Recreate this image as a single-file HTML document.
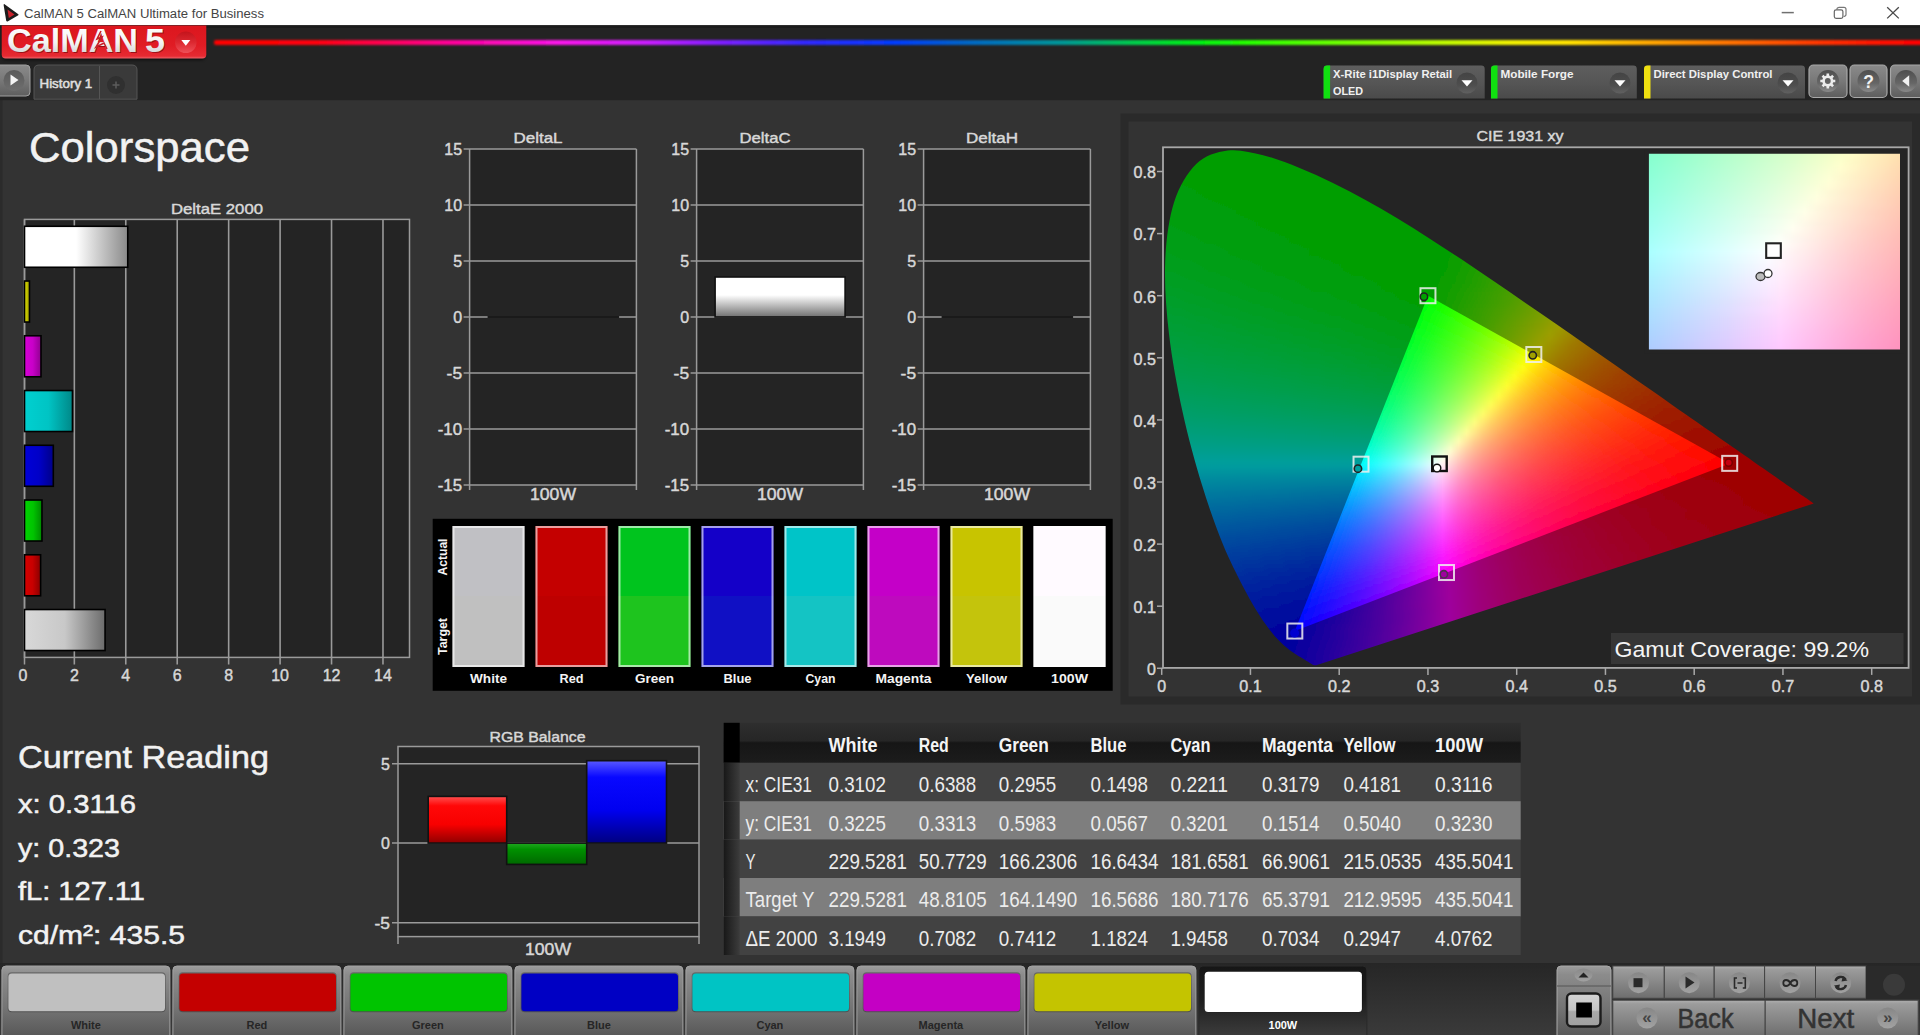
<!DOCTYPE html>
<html lang="en"><head><meta charset="utf-8"><title>CalMAN 5 CalMAN Ultimate for Business</title>
<style>html,body{margin:0;padding:0;background:#333;overflow:hidden}svg{display:block}text{font-family:"Liberation Sans",sans-serif}</style>
</head><body>
<svg width="1920" height="1035" viewBox="0 0 1920 1035">
<defs><linearGradient id="rainbow" x1="0" y1="0" x2="1" y2="0"><stop offset="0" stop-color="#ff0000"/><stop offset="0.057" stop-color="#ff000a"/><stop offset="0.097" stop-color="#ff0050"/><stop offset="0.136" stop-color="#ff0096"/><stop offset="0.202" stop-color="#fa14eb"/><stop offset="0.254" stop-color="#c81eff"/><stop offset="0.294" stop-color="#821eff"/><stop offset="0.346" stop-color="#3228ff"/><stop offset="0.399" stop-color="#003cff"/><stop offset="0.438" stop-color="#0064c8"/><stop offset="0.496" stop-color="#009696"/><stop offset="0.535" stop-color="#00c850"/><stop offset="0.574" stop-color="#00f014"/><stop offset="0.606" stop-color="#28ff00"/><stop offset="0.666" stop-color="#78ff00"/><stop offset="0.719" stop-color="#befa00"/><stop offset="0.758" stop-color="#f0f000"/><stop offset="0.792" stop-color="#ffe100"/><stop offset="0.837" stop-color="#ffaa00"/><stop offset="0.89" stop-color="#ff6e00"/><stop offset="0.942" stop-color="#ff3200"/><stop offset="0.982" stop-color="#ff0a00"/><stop offset="1" stop-color="#ff0000"/></linearGradient>
<filter id="soft" x="-5%" y="-200%" width="110%" height="500%"><feGaussianBlur stdDeviation="0.9"/></filter>
<linearGradient id="logo" x1="0" y1="0" x2="0" y2="1"><stop offset="0" stop-color="#dc161e"/><stop offset="0.6" stop-color="#e01c24"/><stop offset="0.93" stop-color="#e62a32"/><stop offset="1" stop-color="#f06068"/></linearGradient>
<filter id="sh" x="-10%" y="-10%" width="120%" height="140%"><feGaussianBlur stdDeviation="1.5"/></filter>
<linearGradient id="logotxt" x1="0" y1="0" x2="0" y2="1"><stop offset="0" stop-color="#ffffff"/><stop offset="0.55" stop-color="#f4f4f4"/><stop offset="1" stop-color="#c8c8c8"/></linearGradient>
<linearGradient id="ddc" x1="0" y1="0" x2="0" y2="1"><stop offset="0" stop-color="#c4141c"/><stop offset="0.5" stop-color="#dc2830"/><stop offset="1" stop-color="#f05058"/></linearGradient>
<linearGradient id="btn" x1="0" y1="0" x2="0" y2="1"><stop offset="0" stop-color="#8a8a8a"/><stop offset="0.5" stop-color="#787878"/><stop offset="1" stop-color="#5e5e5e"/></linearGradient>
<linearGradient id="btnd" x1="0" y1="0" x2="0" y2="1"><stop offset="0" stop-color="#5a5a5a"/><stop offset="1" stop-color="#6e6e6e"/></linearGradient>
<linearGradient id="embc" x1="0" y1="0" x2="0" y2="1"><stop offset="0" stop-color="#4e4e4e"/><stop offset="0.6" stop-color="#666"/><stop offset="1" stop-color="#8a8a8a"/></linearGradient>
<linearGradient id="embd" x1="0" y1="0" x2="0" y2="1"><stop offset="0" stop-color="#3e3e3e"/><stop offset="0.6" stop-color="#4c4c4c"/><stop offset="1" stop-color="#666"/></linearGradient>
<linearGradient id="dev" x1="0" y1="0" x2="0" y2="1"><stop offset="0" stop-color="#5e5e5e"/><stop offset="0.5" stop-color="#565656"/><stop offset="1" stop-color="#4a4a4a"/></linearGradient>
<linearGradient id="b_w100" x1="0" y1="0" x2="1" y2="0"><stop offset="0" stop-color="#fff"/><stop offset="0.5" stop-color="#fff"/><stop offset="1" stop-color="#8a8a8a"/></linearGradient>
<linearGradient id="b_yel" x1="0" y1="0" x2="1" y2="0"><stop offset="0" stop-color="#e0e000"/><stop offset="1" stop-color="#a0a000"/></linearGradient>
<linearGradient id="b_mag" x1="0" y1="0" x2="1" y2="0"><stop offset="0" stop-color="#d800d8"/><stop offset="0.5" stop-color="#c800c8"/><stop offset="1" stop-color="#900090"/></linearGradient>
<linearGradient id="b_cya" x1="0" y1="0" x2="1" y2="0"><stop offset="0" stop-color="#00d0d0"/><stop offset="0.5" stop-color="#00c4c4"/><stop offset="1" stop-color="#008888"/></linearGradient>
<linearGradient id="b_blu" x1="0" y1="0" x2="1" y2="0"><stop offset="0" stop-color="#0000d8"/><stop offset="0.5" stop-color="#0000c8"/><stop offset="1" stop-color="#000088"/></linearGradient>
<linearGradient id="b_grn" x1="0" y1="0" x2="1" y2="0"><stop offset="0" stop-color="#00d400"/><stop offset="0.5" stop-color="#00c400"/><stop offset="1" stop-color="#008800"/></linearGradient>
<linearGradient id="b_red" x1="0" y1="0" x2="1" y2="0"><stop offset="0" stop-color="#d80000"/><stop offset="0.5" stop-color="#c80000"/><stop offset="1" stop-color="#880000"/></linearGradient>
<linearGradient id="b_wht" x1="0" y1="0" x2="1" y2="0"><stop offset="0" stop-color="#d8d8d8"/><stop offset="0.5" stop-color="#c8c8c8"/><stop offset="1" stop-color="#6c6c6c"/></linearGradient>
<linearGradient id="dcbar" x1="0" y1="0" x2="0" y2="1"><stop offset="0" stop-color="#fff"/><stop offset="0.45" stop-color="#fff"/><stop offset="1" stop-color="#707070"/></linearGradient>
<clipPath id="cl_locus"><path d="M1316.2 665.2C1316.2 665.2 1316.1 665.2 1315.9 665.3C1315.8 665.3 1315.7 665.3 1315.5 665.3C1315.3 665.3 1315.2 665.4 1314.9 665.3C1314.6 665.3 1314.2 665.2 1313.8 665.1C1313.5 665.0 1313.2 664.9 1312.8 664.7C1312.5 664.5 1312.1 664.3 1311.6 664.0C1311.1 663.7 1310.5 663.4 1309.8 663.0C1309.2 662.5 1308.5 662.1 1307.6 661.5C1306.7 661.0 1305.8 660.4 1304.7 659.7C1303.5 659.0 1302.2 658.2 1300.7 657.3C1299.2 656.4 1297.6 655.4 1295.7 654.2C1293.8 653.0 1291.8 651.6 1289.5 649.9C1287.2 648.1 1284.9 646.4 1282.0 643.5C1279.0 640.6 1275.7 637.3 1271.8 632.4C1268.0 627.6 1263.8 622.1 1259.0 614.4C1254.1 606.6 1248.8 597.7 1242.7 585.9C1236.7 574.1 1229.5 560.5 1222.7 543.7C1215.9 526.9 1208.7 507.0 1202.0 485.1C1195.3 463.2 1188.1 437.2 1182.6 412.0C1177.1 386.8 1171.9 359.0 1169.0 334.0C1166.1 308.9 1164.3 283.6 1165.2 261.7C1166.0 239.7 1168.9 218.7 1174.0 202.4C1179.2 186.2 1187.3 172.7 1196.2 164.0C1205.2 155.4 1216.5 152.0 1227.6 150.5C1238.8 149.0 1251.2 152.3 1263.1 155.2C1274.9 158.1 1287.4 163.2 1299.0 167.8C1310.6 172.5 1321.8 177.6 1332.9 182.9C1344.0 188.3 1354.7 193.9 1365.5 199.9C1376.3 205.8 1386.9 212.1 1397.6 218.5C1408.2 224.9 1418.8 231.6 1429.4 238.4C1439.9 245.2 1450.5 252.1 1461.1 259.1C1471.6 266.1 1482.3 273.3 1492.8 280.5C1503.4 287.7 1513.9 294.9 1524.4 302.2C1534.9 309.4 1545.5 316.6 1555.8 323.8C1566.2 331.0 1576.5 338.2 1586.6 345.3C1596.8 352.3 1606.8 359.3 1616.5 366.1C1626.3 372.9 1635.9 379.7 1645.2 386.1C1654.5 392.6 1663.6 398.9 1672.2 404.9C1680.8 410.9 1689.1 416.7 1696.8 422.1C1704.4 427.4 1711.5 432.3 1718.2 437.0C1724.9 441.6 1731.2 446.1 1737.0 450.1C1742.7 454.1 1747.9 457.6 1752.6 460.9C1757.3 464.2 1761.5 467.1 1765.3 469.8C1769.1 472.4 1772.4 474.7 1775.4 476.8C1778.4 479.0 1781.1 480.7 1783.5 482.4C1785.9 484.1 1788.0 485.6 1790.0 487.0C1791.9 488.4 1793.7 489.6 1795.4 490.8C1797.0 491.9 1798.5 492.9 1799.8 493.9C1801.1 494.8 1802.3 495.6 1803.4 496.3C1804.4 497.0 1805.2 497.6 1806.0 498.1C1806.8 498.7 1807.5 499.2 1808.1 499.6C1808.7 500.0 1808.6 500.0 1809.6 500.6C1810.5 501.3 1813.1 503.1 1813.7 503.5Z"/></clipPath>
<clipPath id="cl_tri"><path d="M1729.7 463.4 L1428.0 295.7 L1294.8 631.0Z"/></clipPath>
<linearGradient id="zd0" gradientUnits="userSpaceOnUse" x1="1160" x2="1820" y1="0" y2="0"><stop offset="0.000" stop-color="#009e00"/><stop offset="0.500" stop-color="#019e00"/><stop offset="0.667" stop-color="#439e00"/><stop offset="0.818" stop-color="#8f9e00"/><stop offset="0.848" stop-color="#9e9c00"/><stop offset="0.924" stop-color="#9e7900"/><stop offset="1.000" stop-color="#9e6000"/></linearGradient><linearGradient id="zd1" gradientUnits="userSpaceOnUse" x1="1160" x2="1820" y1="0" y2="0"><stop offset="0.000" stop-color="#009e00"/><stop offset="0.500" stop-color="#019e00"/><stop offset="0.667" stop-color="#459e00"/><stop offset="0.803" stop-color="#899e00"/><stop offset="0.833" stop-color="#9a9e00"/><stop offset="0.864" stop-color="#9e9100"/><stop offset="0.939" stop-color="#9e7100"/><stop offset="1.000" stop-color="#9e5e00"/></linearGradient><linearGradient id="zd2" gradientUnits="userSpaceOnUse" x1="1160" x2="1820" y1="0" y2="0"><stop offset="0.000" stop-color="#009e01"/><stop offset="0.500" stop-color="#029e00"/><stop offset="0.667" stop-color="#479e00"/><stop offset="0.803" stop-color="#8c9e00"/><stop offset="0.833" stop-color="#9e9e00"/><stop offset="0.924" stop-color="#9e7400"/><stop offset="1.000" stop-color="#9e5c00"/></linearGradient><linearGradient id="zd3" gradientUnits="userSpaceOnUse" x1="1160" x2="1820" y1="0" y2="0"><stop offset="0.000" stop-color="#009e01"/><stop offset="0.485" stop-color="#009e00"/><stop offset="0.530" stop-color="#0f9e00"/><stop offset="0.682" stop-color="#509e00"/><stop offset="0.833" stop-color="#9e9c00"/><stop offset="0.894" stop-color="#9e7e00"/><stop offset="1.000" stop-color="#9e5b00"/></linearGradient><linearGradient id="zd4" gradientUnits="userSpaceOnUse" x1="1160" x2="1820" y1="0" y2="0"><stop offset="0.000" stop-color="#009e02"/><stop offset="0.485" stop-color="#009e00"/><stop offset="0.636" stop-color="#3c9e00"/><stop offset="0.773" stop-color="#819e00"/><stop offset="0.818" stop-color="#9b9e00"/><stop offset="0.864" stop-color="#9e8900"/><stop offset="0.939" stop-color="#9e6b00"/><stop offset="1.000" stop-color="#9e5900"/></linearGradient><linearGradient id="zd5" gradientUnits="userSpaceOnUse" x1="1160" x2="1820" y1="0" y2="0"><stop offset="0.000" stop-color="#009e03"/><stop offset="0.136" stop-color="#009e00"/><stop offset="0.485" stop-color="#009e00"/><stop offset="0.636" stop-color="#3e9e00"/><stop offset="0.773" stop-color="#839e00"/><stop offset="0.818" stop-color="#9e9e00"/><stop offset="0.894" stop-color="#9e7900"/><stop offset="1.000" stop-color="#9e5700"/></linearGradient><linearGradient id="zd6" gradientUnits="userSpaceOnUse" x1="1160" x2="1820" y1="0" y2="0"><stop offset="0.000" stop-color="#009e04"/><stop offset="0.121" stop-color="#009e00"/><stop offset="0.485" stop-color="#009e00"/><stop offset="0.636" stop-color="#409e00"/><stop offset="0.758" stop-color="#7e9e00"/><stop offset="0.803" stop-color="#989e00"/><stop offset="0.818" stop-color="#9e9b00"/><stop offset="0.909" stop-color="#9e7100"/><stop offset="1.000" stop-color="#9e5500"/></linearGradient><linearGradient id="zd7" gradientUnits="userSpaceOnUse" x1="1160" x2="1820" y1="0" y2="0"><stop offset="0.000" stop-color="#009e05"/><stop offset="0.091" stop-color="#009e00"/><stop offset="0.485" stop-color="#019e00"/><stop offset="0.636" stop-color="#429e00"/><stop offset="0.758" stop-color="#809e00"/><stop offset="0.803" stop-color="#9b9e00"/><stop offset="0.848" stop-color="#9e8800"/><stop offset="0.924" stop-color="#9e6900"/><stop offset="1.000" stop-color="#9e5400"/></linearGradient><linearGradient id="zd8" gradientUnits="userSpaceOnUse" x1="1160" x2="1820" y1="0" y2="0"><stop offset="0.000" stop-color="#009e06"/><stop offset="0.106" stop-color="#009e00"/><stop offset="0.485" stop-color="#029e00"/><stop offset="0.636" stop-color="#439e00"/><stop offset="0.773" stop-color="#8c9e00"/><stop offset="0.803" stop-color="#9e9e00"/><stop offset="0.864" stop-color="#9e7e00"/><stop offset="0.955" stop-color="#9e5e00"/><stop offset="1.000" stop-color="#9e5200"/></linearGradient><linearGradient id="zd9" gradientUnits="userSpaceOnUse" x1="1160" x2="1820" y1="0" y2="0"><stop offset="0.000" stop-color="#009e07"/><stop offset="0.121" stop-color="#009e00"/><stop offset="0.470" stop-color="#009e00"/><stop offset="0.515" stop-color="#0f9e00"/><stop offset="0.682" stop-color="#5c9e00"/><stop offset="0.788" stop-color="#989e00"/><stop offset="0.803" stop-color="#9e9b00"/><stop offset="0.864" stop-color="#9e7c00"/><stop offset="0.955" stop-color="#9e5c00"/><stop offset="1.000" stop-color="#9e5000"/></linearGradient><linearGradient id="zd10" gradientUnits="userSpaceOnUse" x1="1160" x2="1820" y1="0" y2="0"><stop offset="0.000" stop-color="#009e08"/><stop offset="0.121" stop-color="#009e00"/><stop offset="0.470" stop-color="#009e00"/><stop offset="0.561" stop-color="#249e00"/><stop offset="0.697" stop-color="#669e00"/><stop offset="0.788" stop-color="#9b9e00"/><stop offset="0.833" stop-color="#9e8700"/><stop offset="0.924" stop-color="#9e6300"/><stop offset="1.000" stop-color="#9e4f00"/></linearGradient><linearGradient id="zd11" gradientUnits="userSpaceOnUse" x1="1160" x2="1820" y1="0" y2="0"><stop offset="0.000" stop-color="#009e09"/><stop offset="0.136" stop-color="#009e00"/><stop offset="0.470" stop-color="#009e00"/><stop offset="0.606" stop-color="#3a9e00"/><stop offset="0.742" stop-color="#839e00"/><stop offset="0.788" stop-color="#9e9e00"/><stop offset="0.848" stop-color="#9e7d00"/><stop offset="0.939" stop-color="#9e5d00"/><stop offset="1.000" stop-color="#9e4d00"/></linearGradient><linearGradient id="zd12" gradientUnits="userSpaceOnUse" x1="1160" x2="1820" y1="0" y2="0"><stop offset="0.000" stop-color="#009e0a"/><stop offset="0.152" stop-color="#009e00"/><stop offset="0.470" stop-color="#009e00"/><stop offset="0.621" stop-color="#439e00"/><stop offset="0.742" stop-color="#869e00"/><stop offset="0.773" stop-color="#989e00"/><stop offset="0.788" stop-color="#9e9a00"/><stop offset="0.864" stop-color="#9e7400"/><stop offset="0.955" stop-color="#9e5700"/><stop offset="1.000" stop-color="#9e4c00"/></linearGradient><linearGradient id="zd13" gradientUnits="userSpaceOnUse" x1="1160" x2="1820" y1="0" y2="0"><stop offset="0.000" stop-color="#009e0a"/><stop offset="0.167" stop-color="#009e00"/><stop offset="0.470" stop-color="#019e00"/><stop offset="0.621" stop-color="#459e00"/><stop offset="0.742" stop-color="#899e00"/><stop offset="0.773" stop-color="#9c9e00"/><stop offset="0.864" stop-color="#9e7200"/><stop offset="0.955" stop-color="#9e5500"/><stop offset="1.000" stop-color="#9e4a00"/></linearGradient><linearGradient id="zd14" gradientUnits="userSpaceOnUse" x1="1160" x2="1820" y1="0" y2="0"><stop offset="0.000" stop-color="#009e0b"/><stop offset="0.167" stop-color="#009e00"/><stop offset="0.470" stop-color="#029e00"/><stop offset="0.636" stop-color="#4f9e00"/><stop offset="0.758" stop-color="#959e00"/><stop offset="0.773" stop-color="#9e9d00"/><stop offset="0.833" stop-color="#9e7c00"/><stop offset="0.924" stop-color="#9e5b00"/><stop offset="1.000" stop-color="#9e4800"/></linearGradient><linearGradient id="zd15" gradientUnits="userSpaceOnUse" x1="1160" x2="1820" y1="0" y2="0"><stop offset="0.000" stop-color="#009e0c"/><stop offset="0.182" stop-color="#009e00"/><stop offset="0.455" stop-color="#009e00"/><stop offset="0.485" stop-color="#099e00"/><stop offset="0.621" stop-color="#499e00"/><stop offset="0.742" stop-color="#8f9e00"/><stop offset="0.773" stop-color="#9e9a00"/><stop offset="0.833" stop-color="#9e7a00"/><stop offset="0.924" stop-color="#9e5900"/><stop offset="1.000" stop-color="#9e4700"/></linearGradient><linearGradient id="zd16" gradientUnits="userSpaceOnUse" x1="1160" x2="1820" y1="0" y2="0"><stop offset="0.000" stop-color="#009e0d"/><stop offset="0.197" stop-color="#009e00"/><stop offset="0.455" stop-color="#009e00"/><stop offset="0.515" stop-color="#189e00"/><stop offset="0.636" stop-color="#539e00"/><stop offset="0.758" stop-color="#9c9e00"/><stop offset="0.833" stop-color="#9e7700"/><stop offset="0.939" stop-color="#9e5300"/><stop offset="1.000" stop-color="#9e4500"/></linearGradient><linearGradient id="zd17" gradientUnits="userSpaceOnUse" x1="1160" x2="1820" y1="0" y2="0"><stop offset="0.000" stop-color="#009e0f"/><stop offset="0.197" stop-color="#009e00"/><stop offset="0.455" stop-color="#009e00"/><stop offset="0.561" stop-color="#2e9e00"/><stop offset="0.682" stop-color="#6f9e00"/><stop offset="0.758" stop-color="#9e9d00"/><stop offset="0.833" stop-color="#9e7500"/><stop offset="0.909" stop-color="#9e5a00"/><stop offset="1.000" stop-color="#9e4400"/></linearGradient><linearGradient id="zd18" gradientUnits="userSpaceOnUse" x1="1160" x2="1820" y1="0" y2="0"><stop offset="0.000" stop-color="#009e10"/><stop offset="0.197" stop-color="#009e00"/><stop offset="0.455" stop-color="#009e00"/><stop offset="0.591" stop-color="#3f9e00"/><stop offset="0.712" stop-color="#859e00"/><stop offset="0.742" stop-color="#999e00"/><stop offset="0.758" stop-color="#9e9900"/><stop offset="0.833" stop-color="#9e7200"/><stop offset="0.924" stop-color="#9e5400"/><stop offset="1.000" stop-color="#9e4200"/></linearGradient><linearGradient id="zd19" gradientUnits="userSpaceOnUse" x1="1160" x2="1820" y1="0" y2="0"><stop offset="0.000" stop-color="#009e11"/><stop offset="0.212" stop-color="#009e00"/><stop offset="0.455" stop-color="#019e00"/><stop offset="0.591" stop-color="#419e00"/><stop offset="0.727" stop-color="#929e00"/><stop offset="0.742" stop-color="#9c9e00"/><stop offset="0.818" stop-color="#9e7600"/><stop offset="0.909" stop-color="#9e5600"/><stop offset="1.000" stop-color="#9e4100"/></linearGradient><linearGradient id="zd20" gradientUnits="userSpaceOnUse" x1="1160" x2="1820" y1="0" y2="0"><stop offset="0.000" stop-color="#009e12"/><stop offset="0.227" stop-color="#009e00"/><stop offset="0.455" stop-color="#029e00"/><stop offset="0.591" stop-color="#439e00"/><stop offset="0.712" stop-color="#8b9e00"/><stop offset="0.742" stop-color="#9e9c00"/><stop offset="0.818" stop-color="#9e7300"/><stop offset="0.924" stop-color="#9e5000"/><stop offset="1.000" stop-color="#9e3f00"/></linearGradient><linearGradient id="zd21" gradientUnits="userSpaceOnUse" x1="1160" x2="1820" y1="0" y2="0"><stop offset="0.000" stop-color="#009e13"/><stop offset="0.227" stop-color="#009e00"/><stop offset="0.439" stop-color="#009e00"/><stop offset="0.470" stop-color="#0a9e00"/><stop offset="0.591" stop-color="#459e00"/><stop offset="0.697" stop-color="#859e00"/><stop offset="0.727" stop-color="#999e00"/><stop offset="0.742" stop-color="#9e9900"/><stop offset="0.818" stop-color="#9e7100"/><stop offset="0.924" stop-color="#9e4e00"/><stop offset="1.000" stop-color="#9e3e00"/></linearGradient><linearGradient id="zd22" gradientUnits="userSpaceOnUse" x1="1160" x2="1820" y1="0" y2="0"><stop offset="0.000" stop-color="#009e14"/><stop offset="0.242" stop-color="#009e00"/><stop offset="0.439" stop-color="#009e00"/><stop offset="0.485" stop-color="#129e00"/><stop offset="0.606" stop-color="#509e00"/><stop offset="0.727" stop-color="#9c9e00"/><stop offset="0.818" stop-color="#9e6e00"/><stop offset="0.924" stop-color="#9e4c00"/><stop offset="1.000" stop-color="#9e3c00"/></linearGradient><linearGradient id="zd23" gradientUnits="userSpaceOnUse" x1="1160" x2="1820" y1="0" y2="0"><stop offset="0.000" stop-color="#009e15"/><stop offset="0.258" stop-color="#009e00"/><stop offset="0.439" stop-color="#009e00"/><stop offset="0.545" stop-color="#319e00"/><stop offset="0.667" stop-color="#779e00"/><stop offset="0.727" stop-color="#9e9c00"/><stop offset="0.788" stop-color="#9e7900"/><stop offset="0.879" stop-color="#9e5700"/><stop offset="1.000" stop-color="#9e3b00"/></linearGradient><linearGradient id="zd24" gradientUnits="userSpaceOnUse" x1="1160" x2="1820" y1="0" y2="0"><stop offset="0.000" stop-color="#009e16"/><stop offset="0.273" stop-color="#009e00"/><stop offset="0.439" stop-color="#009e00"/><stop offset="0.545" stop-color="#339e00"/><stop offset="0.682" stop-color="#849e00"/><stop offset="0.712" stop-color="#999e00"/><stop offset="0.727" stop-color="#9e9800"/><stop offset="0.803" stop-color="#9e7000"/><stop offset="0.879" stop-color="#9e5500"/><stop offset="1.000" stop-color="#9e3900"/></linearGradient><linearGradient id="zd25" gradientUnits="userSpaceOnUse" x1="1160" x2="1820" y1="0" y2="0"><stop offset="0.000" stop-color="#009e17"/><stop offset="0.273" stop-color="#009e00"/><stop offset="0.439" stop-color="#019e00"/><stop offset="0.561" stop-color="#3d9e00"/><stop offset="0.682" stop-color="#879e00"/><stop offset="0.712" stop-color="#9d9e00"/><stop offset="0.773" stop-color="#9e7b00"/><stop offset="0.864" stop-color="#9e5700"/><stop offset="0.985" stop-color="#9e3b00"/><stop offset="1.000" stop-color="#9e3800"/></linearGradient><linearGradient id="zd26" gradientUnits="userSpaceOnUse" x1="1160" x2="1820" y1="0" y2="0"><stop offset="0.000" stop-color="#009e19"/><stop offset="0.288" stop-color="#009e00"/><stop offset="0.439" stop-color="#029e00"/><stop offset="0.561" stop-color="#3f9e00"/><stop offset="0.667" stop-color="#809e00"/><stop offset="0.712" stop-color="#9e9c00"/><stop offset="0.773" stop-color="#9e7800"/><stop offset="0.848" stop-color="#9e5a00"/><stop offset="0.955" stop-color="#9e3f00"/><stop offset="1.000" stop-color="#9e3600"/></linearGradient><linearGradient id="zd27" gradientUnits="userSpaceOnUse" x1="1160" x2="1820" y1="0" y2="0"><stop offset="0.000" stop-color="#009e1a"/><stop offset="0.303" stop-color="#009e00"/><stop offset="0.424" stop-color="#009e00"/><stop offset="0.455" stop-color="#0a9e00"/><stop offset="0.576" stop-color="#4a9e00"/><stop offset="0.682" stop-color="#8e9e00"/><stop offset="0.697" stop-color="#999e00"/><stop offset="0.712" stop-color="#9e9800"/><stop offset="0.773" stop-color="#9e7500"/><stop offset="0.864" stop-color="#9e5300"/><stop offset="0.970" stop-color="#9e3a00"/><stop offset="1.000" stop-color="#9e3500"/></linearGradient><linearGradient id="zd28" gradientUnits="userSpaceOnUse" x1="1160" x2="1820" y1="0" y2="0"><stop offset="0.000" stop-color="#009e1b"/><stop offset="0.273" stop-color="#009e02"/><stop offset="0.424" stop-color="#009e00"/><stop offset="0.455" stop-color="#0b9e00"/><stop offset="0.576" stop-color="#4c9e00"/><stop offset="0.682" stop-color="#929e00"/><stop offset="0.697" stop-color="#9d9e00"/><stop offset="0.758" stop-color="#9e7a00"/><stop offset="0.818" stop-color="#9e6000"/><stop offset="0.909" stop-color="#9e4500"/><stop offset="1.000" stop-color="#9e3400"/></linearGradient><linearGradient id="zd29" gradientUnits="userSpaceOnUse" x1="1160" x2="1820" y1="0" y2="0"><stop offset="0.000" stop-color="#009e1c"/><stop offset="0.318" stop-color="#009e00"/><stop offset="0.424" stop-color="#009e00"/><stop offset="0.485" stop-color="#1c9e00"/><stop offset="0.606" stop-color="#619e00"/><stop offset="0.682" stop-color="#969e00"/><stop offset="0.697" stop-color="#9e9b00"/><stop offset="0.758" stop-color="#9e7700"/><stop offset="0.833" stop-color="#9e5800"/><stop offset="0.955" stop-color="#9e3a00"/><stop offset="1.000" stop-color="#9e3200"/></linearGradient><linearGradient id="zd30" gradientUnits="userSpaceOnUse" x1="1160" x2="1820" y1="0" y2="0"><stop offset="0.000" stop-color="#009e1e"/><stop offset="0.333" stop-color="#009e00"/><stop offset="0.424" stop-color="#009e00"/><stop offset="0.515" stop-color="#2e9e00"/><stop offset="0.621" stop-color="#6e9e00"/><stop offset="0.682" stop-color="#9a9e00"/><stop offset="0.712" stop-color="#9e8d00"/><stop offset="0.773" stop-color="#9e6d00"/><stop offset="0.864" stop-color="#9e4d00"/><stop offset="1.000" stop-color="#9e3100"/></linearGradient><linearGradient id="zd31" gradientUnits="userSpaceOnUse" x1="1160" x2="1820" y1="0" y2="0"><stop offset="0.000" stop-color="#009e1f"/><stop offset="0.348" stop-color="#009e00"/><stop offset="0.424" stop-color="#009e00"/><stop offset="0.545" stop-color="#419e00"/><stop offset="0.652" stop-color="#879e00"/><stop offset="0.682" stop-color="#9e9e00"/><stop offset="0.742" stop-color="#9e7800"/><stop offset="0.833" stop-color="#9e5400"/><stop offset="0.939" stop-color="#9e3a00"/><stop offset="1.000" stop-color="#9e2f00"/></linearGradient><linearGradient id="zd32" gradientUnits="userSpaceOnUse" x1="1160" x2="1820" y1="0" y2="0"><stop offset="0.000" stop-color="#009e20"/><stop offset="0.303" stop-color="#009e04"/><stop offset="0.364" stop-color="#009e00"/><stop offset="0.424" stop-color="#019e00"/><stop offset="0.545" stop-color="#439e00"/><stop offset="0.652" stop-color="#8a9e00"/><stop offset="0.682" stop-color="#9e9b00"/><stop offset="0.742" stop-color="#9e7500"/><stop offset="0.818" stop-color="#9e5700"/><stop offset="0.924" stop-color="#9e3b00"/><stop offset="1.000" stop-color="#9e2e00"/></linearGradient><linearGradient id="zd33" gradientUnits="userSpaceOnUse" x1="1160" x2="1820" y1="0" y2="0"><stop offset="0.000" stop-color="#009e22"/><stop offset="0.303" stop-color="#009e05"/><stop offset="0.379" stop-color="#009e00"/><stop offset="0.424" stop-color="#039e00"/><stop offset="0.530" stop-color="#3c9e00"/><stop offset="0.636" stop-color="#839e00"/><stop offset="0.667" stop-color="#9a9e00"/><stop offset="0.697" stop-color="#9e8c00"/><stop offset="0.758" stop-color="#9e6b00"/><stop offset="0.864" stop-color="#9e4800"/><stop offset="1.000" stop-color="#9e2d00"/></linearGradient><linearGradient id="zd34" gradientUnits="userSpaceOnUse" x1="1160" x2="1820" y1="0" y2="0"><stop offset="0.000" stop-color="#009e23"/><stop offset="0.273" stop-color="#009e0a"/><stop offset="0.379" stop-color="#009e00"/><stop offset="0.409" stop-color="#009e00"/><stop offset="0.439" stop-color="#0c9e00"/><stop offset="0.545" stop-color="#489e00"/><stop offset="0.636" stop-color="#879e00"/><stop offset="0.667" stop-color="#9e9e00"/><stop offset="0.712" stop-color="#9e7f00"/><stop offset="0.773" stop-color="#9e6200"/><stop offset="0.864" stop-color="#9e4600"/><stop offset="1.000" stop-color="#9e2b00"/></linearGradient><linearGradient id="zd35" gradientUnits="userSpaceOnUse" x1="1160" x2="1820" y1="0" y2="0"><stop offset="0.000" stop-color="#009e25"/><stop offset="0.394" stop-color="#009e00"/><stop offset="0.409" stop-color="#009e00"/><stop offset="0.455" stop-color="#159e00"/><stop offset="0.576" stop-color="#5e9e00"/><stop offset="0.652" stop-color="#969e00"/><stop offset="0.667" stop-color="#9e9a00"/><stop offset="0.727" stop-color="#9e7400"/><stop offset="0.818" stop-color="#9e5000"/><stop offset="0.939" stop-color="#9e3400"/><stop offset="1.000" stop-color="#9e2a00"/></linearGradient><linearGradient id="zd36" gradientUnits="userSpaceOnUse" x1="1160" x2="1820" y1="0" y2="0"><stop offset="0.000" stop-color="#009e26"/><stop offset="0.318" stop-color="#009e08"/><stop offset="0.394" stop-color="#009e00"/><stop offset="0.409" stop-color="#009e00"/><stop offset="0.485" stop-color="#289e00"/><stop offset="0.576" stop-color="#619e00"/><stop offset="0.652" stop-color="#9a9e00"/><stop offset="0.682" stop-color="#9e8b00"/><stop offset="0.758" stop-color="#9e6300"/><stop offset="0.848" stop-color="#9e4600"/><stop offset="0.985" stop-color="#9e2b00"/><stop offset="1.000" stop-color="#9e2900"/></linearGradient><linearGradient id="zd37" gradientUnits="userSpaceOnUse" x1="1160" x2="1820" y1="0" y2="0"><stop offset="0.000" stop-color="#009e28"/><stop offset="0.333" stop-color="#009e07"/><stop offset="0.409" stop-color="#009e00"/><stop offset="0.515" stop-color="#3c9e00"/><stop offset="0.606" stop-color="#7b9e00"/><stop offset="0.652" stop-color="#9e9e00"/><stop offset="0.697" stop-color="#9e7e00"/><stop offset="0.773" stop-color="#9e5b00"/><stop offset="0.864" stop-color="#9e4000"/><stop offset="1.000" stop-color="#9e2700"/></linearGradient><linearGradient id="zd38" gradientUnits="userSpaceOnUse" x1="1160" x2="1820" y1="0" y2="0"><stop offset="0.000" stop-color="#009e29"/><stop offset="0.273" stop-color="#009e10"/><stop offset="0.409" stop-color="#019e00"/><stop offset="0.545" stop-color="#529e00"/><stop offset="0.636" stop-color="#969e00"/><stop offset="0.652" stop-color="#9e9900"/><stop offset="0.712" stop-color="#9e7200"/><stop offset="0.803" stop-color="#9e4e00"/><stop offset="0.924" stop-color="#9e3200"/><stop offset="1.000" stop-color="#9e2600"/></linearGradient><linearGradient id="zd39" gradientUnits="userSpaceOnUse" x1="1160" x2="1820" y1="0" y2="0"><stop offset="0.000" stop-color="#009e2b"/><stop offset="0.303" stop-color="#009e0e"/><stop offset="0.409" stop-color="#029e00"/><stop offset="0.515" stop-color="#419e00"/><stop offset="0.621" stop-color="#8e9e00"/><stop offset="0.636" stop-color="#9b9e00"/><stop offset="0.682" stop-color="#9e8000"/><stop offset="0.742" stop-color="#9e6200"/><stop offset="0.833" stop-color="#9e4400"/><stop offset="0.970" stop-color="#9e2900"/><stop offset="1.000" stop-color="#9e2500"/></linearGradient><linearGradient id="zd40" gradientUnits="userSpaceOnUse" x1="1160" x2="1820" y1="0" y2="0"><stop offset="0.000" stop-color="#009e2c"/><stop offset="0.303" stop-color="#009e10"/><stop offset="0.394" stop-color="#009e04"/><stop offset="0.424" stop-color="#0c9e00"/><stop offset="0.530" stop-color="#4d9e00"/><stop offset="0.636" stop-color="#9e9d00"/><stop offset="0.682" stop-color="#9e7d00"/><stop offset="0.742" stop-color="#9e5f00"/><stop offset="0.833" stop-color="#9e4200"/><stop offset="0.955" stop-color="#9e2a00"/><stop offset="1.000" stop-color="#9e2400"/></linearGradient><linearGradient id="zd41" gradientUnits="userSpaceOnUse" x1="1160" x2="1820" y1="0" y2="0"><stop offset="0.000" stop-color="#009e2e"/><stop offset="0.288" stop-color="#009e13"/><stop offset="0.394" stop-color="#009e06"/><stop offset="0.424" stop-color="#0e9e01"/><stop offset="0.515" stop-color="#469e00"/><stop offset="0.606" stop-color="#8a9e00"/><stop offset="0.621" stop-color="#969e00"/><stop offset="0.636" stop-color="#9e9900"/><stop offset="0.697" stop-color="#9e7100"/><stop offset="0.758" stop-color="#9e5700"/><stop offset="0.848" stop-color="#9e3c00"/><stop offset="1.000" stop-color="#9e2200"/></linearGradient><linearGradient id="zd42" gradientUnits="userSpaceOnUse" x1="1160" x2="1820" y1="0" y2="0"><stop offset="0.000" stop-color="#009e30"/><stop offset="0.303" stop-color="#009e13"/><stop offset="0.394" stop-color="#009e07"/><stop offset="0.439" stop-color="#189e01"/><stop offset="0.545" stop-color="#5e9e00"/><stop offset="0.621" stop-color="#9b9e00"/><stop offset="0.667" stop-color="#9e7f00"/><stop offset="0.727" stop-color="#9e6000"/><stop offset="0.818" stop-color="#9e4200"/><stop offset="0.955" stop-color="#9e2700"/><stop offset="1.000" stop-color="#9e2100"/></linearGradient><linearGradient id="zd43" gradientUnits="userSpaceOnUse" x1="1160" x2="1820" y1="0" y2="0"><stop offset="0.000" stop-color="#009e31"/><stop offset="0.303" stop-color="#009e15"/><stop offset="0.394" stop-color="#009e09"/><stop offset="0.470" stop-color="#2d9e00"/><stop offset="0.561" stop-color="#6d9e00"/><stop offset="0.621" stop-color="#9e9d00"/><stop offset="0.667" stop-color="#9e7b00"/><stop offset="0.727" stop-color="#9e5d00"/><stop offset="0.818" stop-color="#9e4000"/><stop offset="0.939" stop-color="#9e2800"/><stop offset="1.000" stop-color="#9e2000"/></linearGradient><linearGradient id="zd44" gradientUnits="userSpaceOnUse" x1="1160" x2="1820" y1="0" y2="0"><stop offset="0.000" stop-color="#009e33"/><stop offset="0.273" stop-color="#009e1a"/><stop offset="0.394" stop-color="#019e0b"/><stop offset="0.485" stop-color="#399e00"/><stop offset="0.576" stop-color="#7d9e00"/><stop offset="0.606" stop-color="#979e00"/><stop offset="0.621" stop-color="#9e9800"/><stop offset="0.667" stop-color="#9e7800"/><stop offset="0.742" stop-color="#9e5500"/><stop offset="0.833" stop-color="#9e3a00"/><stop offset="0.985" stop-color="#9e2000"/><stop offset="1.000" stop-color="#9e1f00"/></linearGradient><linearGradient id="zd45" gradientUnits="userSpaceOnUse" x1="1160" x2="1820" y1="0" y2="0"><stop offset="0.000" stop-color="#009e35"/><stop offset="0.318" stop-color="#009e17"/><stop offset="0.394" stop-color="#029e0d"/><stop offset="0.485" stop-color="#3b9e00"/><stop offset="0.576" stop-color="#819e00"/><stop offset="0.606" stop-color="#9b9e00"/><stop offset="0.652" stop-color="#9e7d00"/><stop offset="0.712" stop-color="#9e5e00"/><stop offset="0.803" stop-color="#9e4000"/><stop offset="0.939" stop-color="#9e2500"/><stop offset="1.000" stop-color="#9e1d00"/></linearGradient><linearGradient id="zd46" gradientUnits="userSpaceOnUse" x1="1160" x2="1820" y1="0" y2="0"><stop offset="0.000" stop-color="#009e37"/><stop offset="0.288" stop-color="#009e1c"/><stop offset="0.379" stop-color="#009e11"/><stop offset="0.394" stop-color="#049e0f"/><stop offset="0.485" stop-color="#3e9e01"/><stop offset="0.606" stop-color="#9e9c00"/><stop offset="0.652" stop-color="#9e7a00"/><stop offset="0.712" stop-color="#9e5b00"/><stop offset="0.803" stop-color="#9e3e00"/><stop offset="0.924" stop-color="#9e2600"/><stop offset="1.000" stop-color="#9e1c00"/></linearGradient><linearGradient id="zd47" gradientUnits="userSpaceOnUse" x1="1160" x2="1820" y1="0" y2="0"><stop offset="0.000" stop-color="#009e38"/><stop offset="0.273" stop-color="#009e20"/><stop offset="0.379" stop-color="#009e13"/><stop offset="0.409" stop-color="#0e9e0e"/><stop offset="0.500" stop-color="#4c9e00"/><stop offset="0.576" stop-color="#899e00"/><stop offset="0.591" stop-color="#979e00"/><stop offset="0.606" stop-color="#9e9700"/><stop offset="0.667" stop-color="#9e6d00"/><stop offset="0.742" stop-color="#9e4d00"/><stop offset="0.848" stop-color="#9e3200"/><stop offset="0.985" stop-color="#9e1d00"/><stop offset="1.000" stop-color="#9e1b00"/></linearGradient><linearGradient id="zd48" gradientUnits="userSpaceOnUse" x1="1160" x2="1820" y1="0" y2="0"><stop offset="0.000" stop-color="#009e3a"/><stop offset="0.273" stop-color="#009e22"/><stop offset="0.379" stop-color="#009e15"/><stop offset="0.439" stop-color="#239e0c"/><stop offset="0.530" stop-color="#669e00"/><stop offset="0.591" stop-color="#9c9e00"/><stop offset="0.652" stop-color="#9e7300"/><stop offset="0.727" stop-color="#9e5000"/><stop offset="0.848" stop-color="#9e3000"/><stop offset="1.000" stop-color="#9e1a00"/></linearGradient><linearGradient id="zd49" gradientUnits="userSpaceOnUse" x1="1160" x2="1820" y1="0" y2="0"><stop offset="0.000" stop-color="#009e3c"/><stop offset="0.273" stop-color="#009e24"/><stop offset="0.379" stop-color="#009e17"/><stop offset="0.455" stop-color="#309e0c"/><stop offset="0.530" stop-color="#6a9e00"/><stop offset="0.576" stop-color="#929e00"/><stop offset="0.591" stop-color="#9e9b00"/><stop offset="0.636" stop-color="#9e7800"/><stop offset="0.697" stop-color="#9e5900"/><stop offset="0.773" stop-color="#9e4000"/><stop offset="0.894" stop-color="#9e2600"/><stop offset="1.000" stop-color="#9e1900"/></linearGradient><linearGradient id="zd50" gradientUnits="userSpaceOnUse" x1="1160" x2="1820" y1="0" y2="0"><stop offset="0.000" stop-color="#009e3e"/><stop offset="0.273" stop-color="#009e26"/><stop offset="0.379" stop-color="#009e19"/><stop offset="0.470" stop-color="#3e9e0b"/><stop offset="0.530" stop-color="#6e9e00"/><stop offset="0.576" stop-color="#979e00"/><stop offset="0.591" stop-color="#9e9700"/><stop offset="0.636" stop-color="#9e7400"/><stop offset="0.712" stop-color="#9e5000"/><stop offset="0.803" stop-color="#9e3600"/><stop offset="0.924" stop-color="#9e2100"/><stop offset="1.000" stop-color="#9e1700"/></linearGradient><linearGradient id="zd51" gradientUnits="userSpaceOnUse" x1="1160" x2="1820" y1="0" y2="0"><stop offset="0.000" stop-color="#009e40"/><stop offset="0.288" stop-color="#009e27"/><stop offset="0.379" stop-color="#029e1b"/><stop offset="0.470" stop-color="#409e0d"/><stop offset="0.545" stop-color="#7f9e00"/><stop offset="0.576" stop-color="#9c9e00"/><stop offset="0.621" stop-color="#9e7a00"/><stop offset="0.682" stop-color="#9e5a00"/><stop offset="0.773" stop-color="#9e3b00"/><stop offset="0.909" stop-color="#9e2100"/><stop offset="1.000" stop-color="#9e1600"/></linearGradient><linearGradient id="zd52" gradientUnits="userSpaceOnUse" x1="1160" x2="1820" y1="0" y2="0"><stop offset="0.000" stop-color="#009e42"/><stop offset="0.288" stop-color="#009e29"/><stop offset="0.364" stop-color="#009e20"/><stop offset="0.379" stop-color="#039e1e"/><stop offset="0.470" stop-color="#439e10"/><stop offset="0.561" stop-color="#929e00"/><stop offset="0.576" stop-color="#9e9b00"/><stop offset="0.621" stop-color="#9e7700"/><stop offset="0.682" stop-color="#9e5700"/><stop offset="0.773" stop-color="#9e3900"/><stop offset="0.894" stop-color="#9e2200"/><stop offset="1.000" stop-color="#9e1500"/></linearGradient><linearGradient id="zd53" gradientUnits="userSpaceOnUse" x1="1160" x2="1820" y1="0" y2="0"><stop offset="0.000" stop-color="#009e44"/><stop offset="0.273" stop-color="#009e2d"/><stop offset="0.364" stop-color="#009e22"/><stop offset="0.379" stop-color="#059e20"/><stop offset="0.485" stop-color="#529e10"/><stop offset="0.561" stop-color="#979e01"/><stop offset="0.576" stop-color="#9e9600"/><stop offset="0.606" stop-color="#9e7d00"/><stop offset="0.667" stop-color="#9e5b00"/><stop offset="0.742" stop-color="#9e3f00"/><stop offset="0.864" stop-color="#9e2500"/><stop offset="1.000" stop-color="#9e1400"/></linearGradient><linearGradient id="zd54" gradientUnits="userSpaceOnUse" x1="1160" x2="1820" y1="0" y2="0"><stop offset="0.000" stop-color="#009e47"/><stop offset="0.303" stop-color="#009e2c"/><stop offset="0.364" stop-color="#009e24"/><stop offset="0.409" stop-color="#1b9e1e"/><stop offset="0.500" stop-color="#639e0f"/><stop offset="0.561" stop-color="#9d9e03"/><stop offset="0.606" stop-color="#9e7900"/><stop offset="0.652" stop-color="#9e5f00"/><stop offset="0.712" stop-color="#9e4600"/><stop offset="0.803" stop-color="#9e2f00"/><stop offset="0.939" stop-color="#9e1900"/><stop offset="1.000" stop-color="#9e1300"/></linearGradient><linearGradient id="zd55" gradientUnits="userSpaceOnUse" x1="1160" x2="1820" y1="0" y2="0"><stop offset="0.000" stop-color="#009e49"/><stop offset="0.288" stop-color="#009e30"/><stop offset="0.364" stop-color="#009e27"/><stop offset="0.409" stop-color="#1d9e21"/><stop offset="0.500" stop-color="#679e12"/><stop offset="0.545" stop-color="#929e09"/><stop offset="0.561" stop-color="#9e9a06"/><stop offset="0.606" stop-color="#9e7500"/><stop offset="0.667" stop-color="#9e5500"/><stop offset="0.758" stop-color="#9e3700"/><stop offset="0.879" stop-color="#9e2000"/><stop offset="1.000" stop-color="#9e1200"/></linearGradient><linearGradient id="zd56" gradientUnits="userSpaceOnUse" x1="1160" x2="1820" y1="0" y2="0"><stop offset="0.000" stop-color="#009e4b"/><stop offset="0.258" stop-color="#009e36"/><stop offset="0.364" stop-color="#009e2a"/><stop offset="0.455" stop-color="#439e1c"/><stop offset="0.530" stop-color="#889e0f"/><stop offset="0.545" stop-color="#989e0c"/><stop offset="0.561" stop-color="#9e9508"/><stop offset="0.606" stop-color="#9e7100"/><stop offset="0.667" stop-color="#9e5200"/><stop offset="0.742" stop-color="#9e3900"/><stop offset="0.879" stop-color="#9e1e00"/><stop offset="1.000" stop-color="#9e1100"/></linearGradient><linearGradient id="zd57" gradientUnits="userSpaceOnUse" x1="1160" x2="1820" y1="0" y2="0"><stop offset="0.000" stop-color="#009e4d"/><stop offset="0.273" stop-color="#009e37"/><stop offset="0.364" stop-color="#029e2c"/><stop offset="0.455" stop-color="#469e1f"/><stop offset="0.530" stop-color="#8d9e12"/><stop offset="0.545" stop-color="#9d9e0e"/><stop offset="0.591" stop-color="#9e7703"/><stop offset="0.636" stop-color="#9e5c00"/><stop offset="0.712" stop-color="#9e3f00"/><stop offset="0.818" stop-color="#9e2700"/><stop offset="1.000" stop-color="#9e0f00"/></linearGradient><linearGradient id="zd58" gradientUnits="userSpaceOnUse" x1="1160" x2="1820" y1="0" y2="0"><stop offset="0.000" stop-color="#009e50"/><stop offset="0.288" stop-color="#009e38"/><stop offset="0.348" stop-color="#009e31"/><stop offset="0.364" stop-color="#039e2f"/><stop offset="0.439" stop-color="#3d9e24"/><stop offset="0.515" stop-color="#839e17"/><stop offset="0.530" stop-color="#939e14"/><stop offset="0.545" stop-color="#9e9911"/><stop offset="0.591" stop-color="#9e7305"/><stop offset="0.636" stop-color="#9e5900"/><stop offset="0.697" stop-color="#9e4100"/><stop offset="0.818" stop-color="#9e2500"/><stop offset="1.000" stop-color="#9e0e00"/></linearGradient><linearGradient id="zd59" gradientUnits="userSpaceOnUse" x1="1160" x2="1820" y1="0" y2="0"><stop offset="0.000" stop-color="#009e52"/><stop offset="0.273" stop-color="#009e3d"/><stop offset="0.348" stop-color="#009e34"/><stop offset="0.364" stop-color="#059e32"/><stop offset="0.455" stop-color="#4d9e25"/><stop offset="0.530" stop-color="#989e17"/><stop offset="0.545" stop-color="#9e9413"/><stop offset="0.576" stop-color="#9e790b"/><stop offset="0.621" stop-color="#9e5d01"/><stop offset="0.697" stop-color="#9e3f00"/><stop offset="0.818" stop-color="#9e2300"/><stop offset="0.970" stop-color="#9e1000"/><stop offset="1.000" stop-color="#9e0d00"/></linearGradient><linearGradient id="zd60" gradientUnits="userSpaceOnUse" x1="1160" x2="1820" y1="0" y2="0"><stop offset="0.000" stop-color="#009e55"/><stop offset="0.288" stop-color="#009e3e"/><stop offset="0.348" stop-color="#009e37"/><stop offset="0.379" stop-color="#129e33"/><stop offset="0.455" stop-color="#519e28"/><stop offset="0.515" stop-color="#8d9e1e"/><stop offset="0.530" stop-color="#9e9e1b"/><stop offset="0.561" stop-color="#9e8111"/><stop offset="0.606" stop-color="#9e6206"/><stop offset="0.667" stop-color="#9e4700"/><stop offset="0.758" stop-color="#9e2d00"/><stop offset="0.909" stop-color="#9e1500"/><stop offset="1.000" stop-color="#9e0c00"/></linearGradient><linearGradient id="zd61" gradientUnits="userSpaceOnUse" x1="1160" x2="1820" y1="0" y2="0"><stop offset="0.000" stop-color="#009e58"/><stop offset="0.318" stop-color="#009e3e"/><stop offset="0.348" stop-color="#009e3a"/><stop offset="0.409" stop-color="#2c9e32"/><stop offset="0.485" stop-color="#729e26"/><stop offset="0.515" stop-color="#939e21"/><stop offset="0.530" stop-color="#9e981d"/><stop offset="0.576" stop-color="#9e710e"/><stop offset="0.621" stop-color="#9e5705"/><stop offset="0.667" stop-color="#9e4400"/><stop offset="0.773" stop-color="#9e2800"/><stop offset="0.924" stop-color="#9e1200"/><stop offset="1.000" stop-color="#9e0b00"/></linearGradient><linearGradient id="zd62" gradientUnits="userSpaceOnUse" x1="1160" x2="1820" y1="0" y2="0"><stop offset="0.000" stop-color="#009e5a"/><stop offset="0.288" stop-color="#009e44"/><stop offset="0.348" stop-color="#009e3d"/><stop offset="0.424" stop-color="#3c9e33"/><stop offset="0.500" stop-color="#879e27"/><stop offset="0.515" stop-color="#989e24"/><stop offset="0.530" stop-color="#9e931f"/><stop offset="0.561" stop-color="#9e7815"/><stop offset="0.606" stop-color="#9e5b09"/><stop offset="0.682" stop-color="#9e3c00"/><stop offset="0.788" stop-color="#9e2300"/><stop offset="0.955" stop-color="#9e0e00"/><stop offset="1.000" stop-color="#9e0a00"/></linearGradient><linearGradient id="zd63" gradientUnits="userSpaceOnUse" x1="1160" x2="1820" y1="0" y2="0"><stop offset="0.000" stop-color="#009e5d"/><stop offset="0.273" stop-color="#009e49"/><stop offset="0.348" stop-color="#019e41"/><stop offset="0.424" stop-color="#409e37"/><stop offset="0.485" stop-color="#7c9e2e"/><stop offset="0.515" stop-color="#9e9e28"/><stop offset="0.545" stop-color="#9e7f1b"/><stop offset="0.606" stop-color="#9e570b"/><stop offset="0.682" stop-color="#9e3a00"/><stop offset="0.788" stop-color="#9e2200"/><stop offset="0.939" stop-color="#9e0e00"/><stop offset="1.000" stop-color="#9e0900"/></linearGradient><linearGradient id="zd64" gradientUnits="userSpaceOnUse" x1="1160" x2="1820" y1="0" y2="0"><stop offset="0.000" stop-color="#009e60"/><stop offset="0.288" stop-color="#009e4b"/><stop offset="0.333" stop-color="#009e46"/><stop offset="0.348" stop-color="#039e44"/><stop offset="0.424" stop-color="#439e3b"/><stop offset="0.500" stop-color="#939e2f"/><stop offset="0.515" stop-color="#9e972a"/><stop offset="0.545" stop-color="#9e7a1d"/><stop offset="0.606" stop-color="#9e540d"/><stop offset="0.667" stop-color="#9e3c02"/><stop offset="0.758" stop-color="#9e2600"/><stop offset="0.879" stop-color="#9e1300"/><stop offset="1.000" stop-color="#9e0800"/></linearGradient><linearGradient id="zd65" gradientUnits="userSpaceOnUse" x1="1160" x2="1820" y1="0" y2="0"><stop offset="0.000" stop-color="#009e63"/><stop offset="0.303" stop-color="#009e4d"/><stop offset="0.333" stop-color="#009e4a"/><stop offset="0.348" stop-color="#059e48"/><stop offset="0.424" stop-color="#479e3f"/><stop offset="0.485" stop-color="#879e35"/><stop offset="0.500" stop-color="#999e33"/><stop offset="0.515" stop-color="#9e912c"/><stop offset="0.561" stop-color="#9e6a1a"/><stop offset="0.621" stop-color="#9e4a0b"/><stop offset="0.712" stop-color="#9e2d00"/><stop offset="0.833" stop-color="#9e1800"/><stop offset="1.000" stop-color="#9e0700"/></linearGradient><linearGradient id="zd66" gradientUnits="userSpaceOnUse" x1="1160" x2="1820" y1="0" y2="0"><stop offset="0.000" stop-color="#009e66"/><stop offset="0.288" stop-color="#009e52"/><stop offset="0.333" stop-color="#009e4d"/><stop offset="0.348" stop-color="#079e4c"/><stop offset="0.424" stop-color="#4a9e43"/><stop offset="0.500" stop-color="#9e9d37"/><stop offset="0.530" stop-color="#9e7d27"/><stop offset="0.576" stop-color="#9e5d17"/><stop offset="0.636" stop-color="#9e410a"/><stop offset="0.712" stop-color="#9e2b00"/><stop offset="0.864" stop-color="#9e1200"/><stop offset="1.000" stop-color="#9e0600"/></linearGradient><linearGradient id="zd67" gradientUnits="userSpaceOnUse" x1="1160" x2="1820" y1="0" y2="0"><stop offset="0.000" stop-color="#009e69"/><stop offset="0.318" stop-color="#009e53"/><stop offset="0.333" stop-color="#009e51"/><stop offset="0.364" stop-color="#169e4e"/><stop offset="0.424" stop-color="#4e9e47"/><stop offset="0.485" stop-color="#939e3e"/><stop offset="0.500" stop-color="#9e9639"/><stop offset="0.545" stop-color="#9e6c23"/><stop offset="0.606" stop-color="#9e4a12"/><stop offset="0.682" stop-color="#9e3104"/><stop offset="0.773" stop-color="#9e1d00"/><stop offset="0.955" stop-color="#9e0800"/><stop offset="1.000" stop-color="#9e0500"/></linearGradient><linearGradient id="zd68" gradientUnits="userSpaceOnUse" x1="1160" x2="1820" y1="0" y2="0"><stop offset="0.000" stop-color="#009e6c"/><stop offset="0.333" stop-color="#009e56"/><stop offset="0.394" stop-color="#349e4f"/><stop offset="0.455" stop-color="#749e47"/><stop offset="0.485" stop-color="#999e43"/><stop offset="0.500" stop-color="#9e903b"/><stop offset="0.530" stop-color="#9e732b"/><stop offset="0.576" stop-color="#9e551b"/><stop offset="0.652" stop-color="#9e370a"/><stop offset="0.742" stop-color="#9e2100"/><stop offset="0.909" stop-color="#9e0b00"/><stop offset="1.000" stop-color="#9e0400"/></linearGradient><linearGradient id="zd69" gradientUnits="userSpaceOnUse" x1="1160" x2="1820" y1="0" y2="0"><stop offset="0.000" stop-color="#009e6f"/><stop offset="0.303" stop-color="#009e5d"/><stop offset="0.333" stop-color="#019e5a"/><stop offset="0.409" stop-color="#479e52"/><stop offset="0.485" stop-color="#9e9c47"/><stop offset="0.515" stop-color="#9e7b34"/><stop offset="0.561" stop-color="#9e5a21"/><stop offset="0.621" stop-color="#9e3e11"/><stop offset="0.727" stop-color="#9e2201"/><stop offset="0.924" stop-color="#9e0800"/><stop offset="1.000" stop-color="#9e0300"/></linearGradient><linearGradient id="zd70" gradientUnits="userSpaceOnUse" x1="1160" x2="1820" y1="0" y2="0"><stop offset="0.000" stop-color="#009e73"/><stop offset="0.318" stop-color="#009e60"/><stop offset="0.333" stop-color="#039e5e"/><stop offset="0.394" stop-color="#3b9e58"/><stop offset="0.455" stop-color="#7f9e51"/><stop offset="0.470" stop-color="#939e4f"/><stop offset="0.485" stop-color="#9e9549"/><stop offset="0.515" stop-color="#9e7636"/><stop offset="0.561" stop-color="#9e5623"/><stop offset="0.621" stop-color="#9e3b13"/><stop offset="0.727" stop-color="#9e2002"/><stop offset="0.894" stop-color="#9e0a00"/><stop offset="1.000" stop-color="#9e0200"/></linearGradient><linearGradient id="zd71" gradientUnits="userSpaceOnUse" x1="1160" x2="1820" y1="0" y2="0"><stop offset="0.000" stop-color="#009e76"/><stop offset="0.303" stop-color="#009e66"/><stop offset="0.318" stop-color="#009e64"/><stop offset="0.333" stop-color="#059e63"/><stop offset="0.394" stop-color="#3f9e5d"/><stop offset="0.439" stop-color="#739e58"/><stop offset="0.470" stop-color="#9a9e55"/><stop offset="0.500" stop-color="#9e7e40"/><stop offset="0.545" stop-color="#9e5b2a"/><stop offset="0.606" stop-color="#9e3e18"/><stop offset="0.697" stop-color="#9e2407"/><stop offset="0.773" stop-color="#9e1700"/><stop offset="0.939" stop-color="#9e0500"/><stop offset="1.000" stop-color="#9e0100"/></linearGradient><linearGradient id="zd72" gradientUnits="userSpaceOnUse" x1="1160" x2="1820" y1="0" y2="0"><stop offset="0.000" stop-color="#009e7a"/><stop offset="0.318" stop-color="#009e69"/><stop offset="0.333" stop-color="#079e68"/><stop offset="0.394" stop-color="#439e63"/><stop offset="0.455" stop-color="#8c9e5c"/><stop offset="0.470" stop-color="#9e9b59"/><stop offset="0.500" stop-color="#9e7942"/><stop offset="0.545" stop-color="#9e572c"/><stop offset="0.606" stop-color="#9e3b19"/><stop offset="0.712" stop-color="#9e1f07"/><stop offset="0.788" stop-color="#9e1300"/><stop offset="0.970" stop-color="#9e0200"/><stop offset="1.000" stop-color="#9e0000"/></linearGradient><linearGradient id="zd73" gradientUnits="userSpaceOnUse" x1="1160" x2="1820" y1="0" y2="0"><stop offset="0.000" stop-color="#009e7d"/><stop offset="0.303" stop-color="#009e6f"/><stop offset="0.318" stop-color="#009e6e"/><stop offset="0.348" stop-color="#189e6c"/><stop offset="0.409" stop-color="#599e67"/><stop offset="0.455" stop-color="#939e62"/><stop offset="0.470" stop-color="#9e945a"/><stop offset="0.500" stop-color="#9e7344"/><stop offset="0.545" stop-color="#9e532d"/><stop offset="0.606" stop-color="#9e381a"/><stop offset="0.712" stop-color="#9e1d08"/><stop offset="0.803" stop-color="#9e1000"/><stop offset="0.985" stop-color="#9e0000"/><stop offset="1.000" stop-color="#9e0000"/></linearGradient><linearGradient id="zd74" gradientUnits="userSpaceOnUse" x1="1160" x2="1820" y1="0" y2="0"><stop offset="0.000" stop-color="#009e81"/><stop offset="0.318" stop-color="#009e74"/><stop offset="0.364" stop-color="#2a9e70"/><stop offset="0.424" stop-color="#719e6c"/><stop offset="0.455" stop-color="#9a9e69"/><stop offset="0.485" stop-color="#9e7c50"/><stop offset="0.530" stop-color="#9e5835"/><stop offset="0.606" stop-color="#9e351c"/><stop offset="0.712" stop-color="#9e1b09"/><stop offset="0.818" stop-color="#9e0c00"/><stop offset="1.000" stop-color="#9e0000"/></linearGradient><linearGradient id="zd75" gradientUnits="userSpaceOnUse" x1="1160" x2="1820" y1="0" y2="0"><stop offset="0.000" stop-color="#009e85"/><stop offset="0.318" stop-color="#009e79"/><stop offset="0.394" stop-color="#509e74"/><stop offset="0.439" stop-color="#8c9e71"/><stop offset="0.455" stop-color="#9e9a6d"/><stop offset="0.485" stop-color="#9e7651"/><stop offset="0.530" stop-color="#9e5437"/><stop offset="0.591" stop-color="#9e3821"/><stop offset="0.697" stop-color="#9e1c0c"/><stop offset="0.818" stop-color="#9e0b00"/><stop offset="0.985" stop-color="#9e0000"/><stop offset="1.000" stop-color="#9e0000"/></linearGradient><linearGradient id="zd76" gradientUnits="userSpaceOnUse" x1="1160" x2="1820" y1="0" y2="0"><stop offset="0.000" stop-color="#009e89"/><stop offset="0.318" stop-color="#029e7f"/><stop offset="0.379" stop-color="#439e7c"/><stop offset="0.439" stop-color="#939e78"/><stop offset="0.455" stop-color="#9e936e"/><stop offset="0.485" stop-color="#9e7153"/><stop offset="0.530" stop-color="#9e5038"/><stop offset="0.591" stop-color="#9e3523"/><stop offset="0.682" stop-color="#9e1d0f"/><stop offset="0.833" stop-color="#9e0800"/><stop offset="0.970" stop-color="#9e0000"/><stop offset="1.000" stop-color="#9e0000"/></linearGradient><linearGradient id="zd77" gradientUnits="userSpaceOnUse" x1="1160" x2="1820" y1="0" y2="0"><stop offset="0.000" stop-color="#009e8d"/><stop offset="0.303" stop-color="#009e86"/><stop offset="0.318" stop-color="#059e85"/><stop offset="0.379" stop-color="#479e83"/><stop offset="0.439" stop-color="#9b9e7f"/><stop offset="0.485" stop-color="#9e6b54"/><stop offset="0.530" stop-color="#9e4c3a"/><stop offset="0.591" stop-color="#9e3224"/><stop offset="0.682" stop-color="#9e1b11"/><stop offset="0.818" stop-color="#9e0801"/><stop offset="0.939" stop-color="#9e0000"/><stop offset="1.000" stop-color="#9e0000"/></linearGradient><linearGradient id="zd78" gradientUnits="userSpaceOnUse" x1="1160" x2="1820" y1="0" y2="0"><stop offset="0.000" stop-color="#009e92"/><stop offset="0.303" stop-color="#009e8c"/><stop offset="0.318" stop-color="#079e8c"/><stop offset="0.379" stop-color="#4c9e8a"/><stop offset="0.424" stop-color="#8b9e88"/><stop offset="0.439" stop-color="#9e9983"/><stop offset="0.455" stop-color="#9e8471"/><stop offset="0.485" stop-color="#9e6656"/><stop offset="0.530" stop-color="#9e483b"/><stop offset="0.591" stop-color="#9e2f25"/><stop offset="0.697" stop-color="#9e160f"/><stop offset="0.848" stop-color="#9e0400"/><stop offset="0.939" stop-color="#9e0000"/><stop offset="1.000" stop-color="#9e0000"/></linearGradient><linearGradient id="zd79" gradientUnits="userSpaceOnUse" x1="1160" x2="1820" y1="0" y2="0"><stop offset="0.000" stop-color="#009e96"/><stop offset="0.303" stop-color="#009e93"/><stop offset="0.318" stop-color="#0a9e93"/><stop offset="0.379" stop-color="#519e92"/><stop offset="0.424" stop-color="#939e90"/><stop offset="0.439" stop-color="#9e9184"/><stop offset="0.470" stop-color="#9e6e63"/><stop offset="0.515" stop-color="#9e4c44"/><stop offset="0.576" stop-color="#9e312b"/><stop offset="0.667" stop-color="#9e1a15"/><stop offset="0.833" stop-color="#9e0401"/><stop offset="0.924" stop-color="#9e0000"/><stop offset="1.000" stop-color="#9e0000"/></linearGradient><linearGradient id="zd80" gradientUnits="userSpaceOnUse" x1="1160" x2="1820" y1="0" y2="0"><stop offset="0.000" stop-color="#009e9b"/><stop offset="0.303" stop-color="#009e9a"/><stop offset="0.333" stop-color="#1e9e9a"/><stop offset="0.394" stop-color="#6c9e9a"/><stop offset="0.424" stop-color="#9c9e99"/><stop offset="0.455" stop-color="#9e7773"/><stop offset="0.485" stop-color="#9e5c59"/><stop offset="0.530" stop-color="#9e403e"/><stop offset="0.606" stop-color="#9e2524"/><stop offset="0.712" stop-color="#9e100f"/><stop offset="0.864" stop-color="#9e0000"/><stop offset="1.000" stop-color="#9e0000"/></linearGradient><linearGradient id="zd81" gradientUnits="userSpaceOnUse" x1="1160" x2="1820" y1="0" y2="0"><stop offset="0.000" stop-color="#009c9e"/><stop offset="0.303" stop-color="#009b9e"/><stop offset="0.364" stop-color="#469a9e"/><stop offset="0.424" stop-color="#9e989d"/><stop offset="0.439" stop-color="#9e8286"/><stop offset="0.470" stop-color="#9e6366"/><stop offset="0.515" stop-color="#9e4447"/><stop offset="0.576" stop-color="#9e2c2e"/><stop offset="0.667" stop-color="#9e1618"/><stop offset="0.818" stop-color="#9e0304"/><stop offset="0.909" stop-color="#9e0000"/><stop offset="1.000" stop-color="#9e0000"/></linearGradient><linearGradient id="zd82" gradientUnits="userSpaceOnUse" x1="1160" x2="1820" y1="0" y2="0"><stop offset="0.000" stop-color="#00989e"/><stop offset="0.303" stop-color="#02939e"/><stop offset="0.364" stop-color="#47929e"/><stop offset="0.409" stop-color="#87919e"/><stop offset="0.424" stop-color="#9e8f9d"/><stop offset="0.439" stop-color="#9e7b87"/><stop offset="0.470" stop-color="#9e5d67"/><stop offset="0.515" stop-color="#9e4048"/><stop offset="0.591" stop-color="#9e242a"/><stop offset="0.712" stop-color="#9e0d11"/><stop offset="0.848" stop-color="#9e0003"/><stop offset="0.939" stop-color="#9e0000"/><stop offset="1.000" stop-color="#9e0000"/></linearGradient><linearGradient id="zd83" gradientUnits="userSpaceOnUse" x1="1160" x2="1820" y1="0" y2="0"><stop offset="0.000" stop-color="#00939e"/><stop offset="0.288" stop-color="#008d9e"/><stop offset="0.303" stop-color="#048c9e"/><stop offset="0.364" stop-color="#488a9e"/><stop offset="0.424" stop-color="#9e879e"/><stop offset="0.439" stop-color="#9e7488"/><stop offset="0.470" stop-color="#9e5869"/><stop offset="0.515" stop-color="#9e3c4a"/><stop offset="0.591" stop-color="#9e222c"/><stop offset="0.682" stop-color="#9e1017"/><stop offset="0.818" stop-color="#9e0006"/><stop offset="0.924" stop-color="#9e0000"/><stop offset="1.000" stop-color="#9e0000"/></linearGradient><linearGradient id="zd84" gradientUnits="userSpaceOnUse" x1="1160" x2="1820" y1="0" y2="0"><stop offset="0.000" stop-color="#008e9e"/><stop offset="0.288" stop-color="#00869e"/><stop offset="0.303" stop-color="#07869e"/><stop offset="0.348" stop-color="#38849e"/><stop offset="0.394" stop-color="#71819e"/><stop offset="0.424" stop-color="#9e7f9e"/><stop offset="0.455" stop-color="#9e5f78"/><stop offset="0.500" stop-color="#9e4054"/><stop offset="0.545" stop-color="#9e2d3d"/><stop offset="0.636" stop-color="#9e1521"/><stop offset="0.758" stop-color="#9e040d"/><stop offset="0.848" stop-color="#9e0004"/><stop offset="0.970" stop-color="#9e0000"/><stop offset="1.000" stop-color="#9e0000"/></linearGradient><linearGradient id="zd85" gradientUnits="userSpaceOnUse" x1="1160" x2="1820" y1="0" y2="0"><stop offset="0.000" stop-color="#008a9e"/><stop offset="0.288" stop-color="#00809e"/><stop offset="0.303" stop-color="#097f9e"/><stop offset="0.364" stop-color="#4b7c9e"/><stop offset="0.424" stop-color="#9d779e"/><stop offset="0.455" stop-color="#9e5979"/><stop offset="0.500" stop-color="#9e3c55"/><stop offset="0.561" stop-color="#9e2538"/><stop offset="0.652" stop-color="#9e111f"/><stop offset="0.773" stop-color="#9e020c"/><stop offset="0.924" stop-color="#9e0000"/><stop offset="1.000" stop-color="#9e0000"/></linearGradient><linearGradient id="zd86" gradientUnits="userSpaceOnUse" x1="1160" x2="1820" y1="0" y2="0"><stop offset="0.000" stop-color="#00869e"/><stop offset="0.288" stop-color="#007a9e"/><stop offset="0.318" stop-color="#1a789e"/><stop offset="0.379" stop-color="#5e749e"/><stop offset="0.424" stop-color="#9c709e"/><stop offset="0.455" stop-color="#9e547a"/><stop offset="0.500" stop-color="#9e3856"/><stop offset="0.561" stop-color="#9e2239"/><stop offset="0.667" stop-color="#9e0c1d"/><stop offset="0.788" stop-color="#9e000c"/><stop offset="0.939" stop-color="#9e0000"/><stop offset="1.000" stop-color="#9e0000"/></linearGradient><linearGradient id="zd87" gradientUnits="userSpaceOnUse" x1="1160" x2="1820" y1="0" y2="0"><stop offset="0.000" stop-color="#00819e"/><stop offset="0.288" stop-color="#00749e"/><stop offset="0.348" stop-color="#3c6f9e"/><stop offset="0.409" stop-color="#866a9e"/><stop offset="0.424" stop-color="#9c689e"/><stop offset="0.455" stop-color="#9e4f7b"/><stop offset="0.485" stop-color="#9e3c62"/><stop offset="0.545" stop-color="#9e2440"/><stop offset="0.621" stop-color="#9e1228"/><stop offset="0.742" stop-color="#9e0212"/><stop offset="0.924" stop-color="#9e0001"/><stop offset="1.000" stop-color="#9e0000"/></linearGradient><linearGradient id="zd88" gradientUnits="userSpaceOnUse" x1="1160" x2="1820" y1="0" y2="0"><stop offset="0.000" stop-color="#007d9e"/><stop offset="0.288" stop-color="#016e9e"/><stop offset="0.348" stop-color="#3d699e"/><stop offset="0.409" stop-color="#86639e"/><stop offset="0.424" stop-color="#9b619e"/><stop offset="0.470" stop-color="#9e406e"/><stop offset="0.530" stop-color="#9e2548"/><stop offset="0.606" stop-color="#9e122d"/><stop offset="0.727" stop-color="#9e0215"/><stop offset="0.939" stop-color="#9e0000"/><stop offset="1.000" stop-color="#9e0000"/></linearGradient><linearGradient id="zd89" gradientUnits="userSpaceOnUse" x1="1160" x2="1820" y1="0" y2="0"><stop offset="0.000" stop-color="#00799e"/><stop offset="0.273" stop-color="#006a9e"/><stop offset="0.288" stop-color="#03699e"/><stop offset="0.348" stop-color="#3e639e"/><stop offset="0.409" stop-color="#865d9e"/><stop offset="0.424" stop-color="#9b5b9e"/><stop offset="0.470" stop-color="#9e3b6f"/><stop offset="0.515" stop-color="#9e2751"/><stop offset="0.591" stop-color="#9e1333"/><stop offset="0.682" stop-color="#9e051d"/><stop offset="0.758" stop-color="#9e0012"/><stop offset="0.955" stop-color="#9e0000"/><stop offset="1.000" stop-color="#9e0000"/></linearGradient><linearGradient id="zd90" gradientUnits="userSpaceOnUse" x1="1160" x2="1820" y1="0" y2="0"><stop offset="0.000" stop-color="#00759e"/><stop offset="0.273" stop-color="#00659e"/><stop offset="0.288" stop-color="#05639e"/><stop offset="0.364" stop-color="#505c9e"/><stop offset="0.424" stop-color="#9a549e"/><stop offset="0.455" stop-color="#9e407e"/><stop offset="0.485" stop-color="#9e3065"/><stop offset="0.530" stop-color="#9e1f4b"/><stop offset="0.606" stop-color="#9e0e2f"/><stop offset="0.712" stop-color="#9e0019"/><stop offset="0.894" stop-color="#9e0005"/><stop offset="1.000" stop-color="#9e0000"/></linearGradient><linearGradient id="zd91" gradientUnits="userSpaceOnUse" x1="1160" x2="1820" y1="0" y2="0"><stop offset="0.000" stop-color="#00719e"/><stop offset="0.273" stop-color="#00609e"/><stop offset="0.288" stop-color="#075e9e"/><stop offset="0.348" stop-color="#41589e"/><stop offset="0.409" stop-color="#86509e"/><stop offset="0.424" stop-color="#9a4e9e"/><stop offset="0.455" stop-color="#9e3b7f"/><stop offset="0.485" stop-color="#9e2c66"/><stop offset="0.530" stop-color="#9e1c4c"/><stop offset="0.606" stop-color="#9e0c30"/><stop offset="0.697" stop-color="#9e001d"/><stop offset="0.864" stop-color="#9e0008"/><stop offset="1.000" stop-color="#9e0000"/></linearGradient><linearGradient id="zd92" gradientUnits="userSpaceOnUse" x1="1160" x2="1820" y1="0" y2="0"><stop offset="0.000" stop-color="#006e9e"/><stop offset="0.273" stop-color="#005b9e"/><stop offset="0.303" stop-color="#16589e"/><stop offset="0.379" stop-color="#624f9e"/><stop offset="0.424" stop-color="#99489e"/><stop offset="0.439" stop-color="#9e3f90"/><stop offset="0.470" stop-color="#9e2f72"/><stop offset="0.515" stop-color="#9e1e55"/><stop offset="0.576" stop-color="#9e0f3b"/><stop offset="0.667" stop-color="#9e0123"/><stop offset="0.864" stop-color="#9e0009"/><stop offset="1.000" stop-color="#9e0000"/></linearGradient><linearGradient id="zd93" gradientUnits="userSpaceOnUse" x1="1160" x2="1820" y1="0" y2="0"><stop offset="0.000" stop-color="#006a9e"/><stop offset="0.273" stop-color="#00569e"/><stop offset="0.333" stop-color="#344f9e"/><stop offset="0.394" stop-color="#74479e"/><stop offset="0.424" stop-color="#99429e"/><stop offset="0.439" stop-color="#9e3a90"/><stop offset="0.470" stop-color="#9e2b73"/><stop offset="0.515" stop-color="#9e1b56"/><stop offset="0.576" stop-color="#9e0d3c"/><stop offset="0.667" stop-color="#9e0024"/><stop offset="0.818" stop-color="#9e000e"/><stop offset="1.000" stop-color="#9e0000"/></linearGradient><linearGradient id="zd94" gradientUnits="userSpaceOnUse" x1="1160" x2="1820" y1="0" y2="0"><stop offset="0.000" stop-color="#00669e"/><stop offset="0.258" stop-color="#00539e"/><stop offset="0.273" stop-color="#00519e"/><stop offset="0.348" stop-color="#44489e"/><stop offset="0.409" stop-color="#863f9e"/><stop offset="0.424" stop-color="#993d9e"/><stop offset="0.439" stop-color="#9e3591"/><stop offset="0.470" stop-color="#9e2774"/><stop offset="0.515" stop-color="#9e1757"/><stop offset="0.576" stop-color="#9e0a3d"/><stop offset="0.652" stop-color="#9e0028"/><stop offset="0.788" stop-color="#9e0012"/><stop offset="1.000" stop-color="#9e0001"/></linearGradient><linearGradient id="zd95" gradientUnits="userSpaceOnUse" x1="1160" x2="1820" y1="0" y2="0"><stop offset="0.000" stop-color="#00639e"/><stop offset="0.273" stop-color="#024d9e"/><stop offset="0.333" stop-color="#36459e"/><stop offset="0.409" stop-color="#863a9e"/><stop offset="0.424" stop-color="#98389e"/><stop offset="0.439" stop-color="#9e3192"/><stop offset="0.470" stop-color="#9e2375"/><stop offset="0.515" stop-color="#9e1558"/><stop offset="0.576" stop-color="#9e083e"/><stop offset="0.636" stop-color="#9e002d"/><stop offset="0.758" stop-color="#9e0017"/><stop offset="0.970" stop-color="#9e0003"/><stop offset="1.000" stop-color="#9e0001"/></linearGradient><linearGradient id="zd96" gradientUnits="userSpaceOnUse" x1="1160" x2="1820" y1="0" y2="0"><stop offset="0.000" stop-color="#005f9e"/><stop offset="0.258" stop-color="#004a9e"/><stop offset="0.273" stop-color="#04489e"/><stop offset="0.348" stop-color="#463f9e"/><stop offset="0.409" stop-color="#86359e"/><stop offset="0.424" stop-color="#98329e"/><stop offset="0.439" stop-color="#9e2c92"/><stop offset="0.485" stop-color="#9e1a6b"/><stop offset="0.545" stop-color="#9e0b4a"/><stop offset="0.621" stop-color="#9e0031"/><stop offset="0.742" stop-color="#9e001a"/><stop offset="0.955" stop-color="#9e0005"/><stop offset="1.000" stop-color="#9e0002"/></linearGradient><linearGradient id="zd97" gradientUnits="userSpaceOnUse" x1="1160" x2="1820" y1="0" y2="0"><stop offset="0.000" stop-color="#005c9e"/><stop offset="0.258" stop-color="#00469e"/><stop offset="0.273" stop-color="#06449e"/><stop offset="0.348" stop-color="#473a9e"/><stop offset="0.424" stop-color="#972e9e"/><stop offset="0.439" stop-color="#9e2893"/><stop offset="0.485" stop-color="#9e176c"/><stop offset="0.545" stop-color="#9e094b"/><stop offset="0.606" stop-color="#9e0036"/><stop offset="0.742" stop-color="#9e001b"/><stop offset="0.909" stop-color="#9e0009"/><stop offset="1.000" stop-color="#9e0003"/></linearGradient><linearGradient id="zd98" gradientUnits="userSpaceOnUse" x1="1160" x2="1820" y1="0" y2="0"><stop offset="0.000" stop-color="#00599e"/><stop offset="0.258" stop-color="#00429e"/><stop offset="0.288" stop-color="#133e9e"/><stop offset="0.364" stop-color="#56339e"/><stop offset="0.424" stop-color="#97299e"/><stop offset="0.439" stop-color="#9e2394"/><stop offset="0.485" stop-color="#9e136d"/><stop offset="0.545" stop-color="#9e064c"/><stop offset="0.606" stop-color="#9e0037"/><stop offset="0.742" stop-color="#9e001c"/><stop offset="0.939" stop-color="#9e0007"/><stop offset="1.000" stop-color="#9e0003"/></linearGradient><linearGradient id="zd99" gradientUnits="userSpaceOnUse" x1="1160" x2="1820" y1="0" y2="0"><stop offset="0.000" stop-color="#00559e"/><stop offset="0.258" stop-color="#003e9e"/><stop offset="0.303" stop-color="#21389e"/><stop offset="0.394" stop-color="#752a9e"/><stop offset="0.424" stop-color="#97249e"/><stop offset="0.439" stop-color="#9e1f94"/><stop offset="0.470" stop-color="#9e1479"/><stop offset="0.515" stop-color="#9e095c"/><stop offset="0.576" stop-color="#9e0042"/><stop offset="0.667" stop-color="#9e002a"/><stop offset="0.788" stop-color="#9e0016"/><stop offset="1.000" stop-color="#9e0004"/></linearGradient><linearGradient id="zd100" gradientUnits="userSpaceOnUse" x1="1160" x2="1820" y1="0" y2="0"><stop offset="0.000" stop-color="#00529e"/><stop offset="0.258" stop-color="#003a9e"/><stop offset="0.333" stop-color="#3c2f9e"/><stop offset="0.394" stop-color="#76259e"/><stop offset="0.424" stop-color="#96209e"/><stop offset="0.439" stop-color="#9e1b95"/><stop offset="0.470" stop-color="#9e1179"/><stop offset="0.530" stop-color="#9e0455"/><stop offset="0.591" stop-color="#9e003e"/><stop offset="0.682" stop-color="#9e0028"/><stop offset="0.803" stop-color="#9e0015"/><stop offset="1.000" stop-color="#9e0004"/></linearGradient><linearGradient id="zd101" gradientUnits="userSpaceOnUse" x1="1160" x2="1820" y1="0" y2="0"><stop offset="0.000" stop-color="#004f9e"/><stop offset="0.258" stop-color="#02369e"/><stop offset="0.348" stop-color="#4a299e"/><stop offset="0.424" stop-color="#961b9e"/><stop offset="0.439" stop-color="#9e1795"/><stop offset="0.485" stop-color="#9e0a6f"/><stop offset="0.545" stop-color="#9e004f"/><stop offset="0.636" stop-color="#9e0032"/><stop offset="0.773" stop-color="#9e001a"/><stop offset="0.985" stop-color="#9e0006"/><stop offset="1.000" stop-color="#9e0005"/></linearGradient><linearGradient id="zd102" gradientUnits="userSpaceOnUse" x1="1160" x2="1820" y1="0" y2="0"><stop offset="0.000" stop-color="#004c9e"/><stop offset="0.242" stop-color="#00349e"/><stop offset="0.258" stop-color="#03329e"/><stop offset="0.348" stop-color="#4b259e"/><stop offset="0.424" stop-color="#96179e"/><stop offset="0.439" stop-color="#9e1396"/><stop offset="0.470" stop-color="#9e0a7b"/><stop offset="0.530" stop-color="#9e0057"/><stop offset="0.606" stop-color="#9e003b"/><stop offset="0.727" stop-color="#9e0021"/><stop offset="0.909" stop-color="#9e000c"/><stop offset="1.000" stop-color="#9e0006"/></linearGradient><linearGradient id="zd103" gradientUnits="userSpaceOnUse" x1="1160" x2="1820" y1="0" y2="0"><stop offset="0.000" stop-color="#00499e"/><stop offset="0.242" stop-color="#00319e"/><stop offset="0.258" stop-color="#052f9e"/><stop offset="0.333" stop-color="#3f249e"/><stop offset="0.409" stop-color="#85169e"/><stop offset="0.424" stop-color="#95139e"/><stop offset="0.439" stop-color="#9e0f96"/><stop offset="0.485" stop-color="#9e0471"/><stop offset="0.545" stop-color="#9e0051"/><stop offset="0.636" stop-color="#9e0034"/><stop offset="0.773" stop-color="#9e001b"/><stop offset="1.000" stop-color="#9e0006"/></linearGradient><linearGradient id="zd104" gradientUnits="userSpaceOnUse" x1="1160" x2="1820" y1="0" y2="0"><stop offset="0.000" stop-color="#00469e"/><stop offset="0.227" stop-color="#002f9e"/><stop offset="0.242" stop-color="#002d9e"/><stop offset="0.258" stop-color="#062b9e"/><stop offset="0.333" stop-color="#40209e"/><stop offset="0.409" stop-color="#85129e"/><stop offset="0.424" stop-color="#950f9e"/><stop offset="0.439" stop-color="#9e0c97"/><stop offset="0.485" stop-color="#9e0172"/><stop offset="0.545" stop-color="#9e0052"/><stop offset="0.636" stop-color="#9e0035"/><stop offset="0.758" stop-color="#9e001e"/><stop offset="0.970" stop-color="#9e0009"/><stop offset="1.000" stop-color="#9e0007"/></linearGradient><linearGradient id="zd105" gradientUnits="userSpaceOnUse" x1="1160" x2="1820" y1="0" y2="0"><stop offset="0.000" stop-color="#00439e"/><stop offset="0.242" stop-color="#002a9e"/><stop offset="0.288" stop-color="#1d239e"/><stop offset="0.379" stop-color="#68159e"/><stop offset="0.424" stop-color="#950c9e"/><stop offset="0.439" stop-color="#9e0898"/><stop offset="0.470" stop-color="#9e017d"/><stop offset="0.515" stop-color="#9e0061"/><stop offset="0.591" stop-color="#9e0042"/><stop offset="0.712" stop-color="#9e0026"/><stop offset="0.879" stop-color="#9e0011"/><stop offset="1.000" stop-color="#9e0007"/></linearGradient><linearGradient id="zd106" gradientUnits="userSpaceOnUse" x1="1160" x2="1820" y1="0" y2="0"><stop offset="0.000" stop-color="#00409e"/><stop offset="0.242" stop-color="#00279e"/><stop offset="0.333" stop-color="#42199e"/><stop offset="0.409" stop-color="#850b9e"/><stop offset="0.424" stop-color="#95089e"/><stop offset="0.439" stop-color="#9e0498"/><stop offset="0.485" stop-color="#9e0073"/><stop offset="0.545" stop-color="#9e0054"/><stop offset="0.621" stop-color="#9e003a"/><stop offset="0.758" stop-color="#9e0020"/><stop offset="0.955" stop-color="#9e000b"/><stop offset="1.000" stop-color="#9e0008"/></linearGradient><linearGradient id="zd107" gradientUnits="userSpaceOnUse" x1="1160" x2="1820" y1="0" y2="0"><stop offset="0.000" stop-color="#003d9e"/><stop offset="0.227" stop-color="#00259e"/><stop offset="0.242" stop-color="#01239e"/><stop offset="0.333" stop-color="#42169e"/><stop offset="0.424" stop-color="#94049e"/><stop offset="0.439" stop-color="#9e0199"/><stop offset="0.485" stop-color="#9e0074"/><stop offset="0.545" stop-color="#9e0055"/><stop offset="0.636" stop-color="#9e0037"/><stop offset="0.773" stop-color="#9e001e"/><stop offset="0.985" stop-color="#9e000a"/><stop offset="1.000" stop-color="#9e0009"/></linearGradient><linearGradient id="zd108" gradientUnits="userSpaceOnUse" x1="1160" x2="1820" y1="0" y2="0"><stop offset="0.000" stop-color="#003b9e"/><stop offset="0.242" stop-color="#02209e"/><stop offset="0.348" stop-color="#4f109e"/><stop offset="0.424" stop-color="#94019e"/><stop offset="0.439" stop-color="#9e0099"/><stop offset="0.485" stop-color="#9e0075"/><stop offset="0.545" stop-color="#9e0055"/><stop offset="0.636" stop-color="#9e0038"/><stop offset="0.758" stop-color="#9e0021"/><stop offset="0.970" stop-color="#9e000b"/><stop offset="1.000" stop-color="#9e0009"/></linearGradient><linearGradient id="zd109" gradientUnits="userSpaceOnUse" x1="1160" x2="1820" y1="0" y2="0"><stop offset="0.000" stop-color="#00389e"/><stop offset="0.227" stop-color="#001f9e"/><stop offset="0.242" stop-color="#041d9e"/><stop offset="0.333" stop-color="#440f9e"/><stop offset="0.409" stop-color="#85019e"/><stop offset="0.424" stop-color="#94009e"/><stop offset="0.439" stop-color="#9e0099"/><stop offset="0.485" stop-color="#9e0076"/><stop offset="0.545" stop-color="#9e0056"/><stop offset="0.636" stop-color="#9e0039"/><stop offset="0.758" stop-color="#9e0022"/><stop offset="0.955" stop-color="#9e000d"/><stop offset="1.000" stop-color="#9e000a"/></linearGradient><linearGradient id="zd110" gradientUnits="userSpaceOnUse" x1="1160" x2="1820" y1="0" y2="0"><stop offset="0.000" stop-color="#00359e"/><stop offset="0.227" stop-color="#001c9e"/><stop offset="0.242" stop-color="#051a9e"/><stop offset="0.333" stop-color="#450c9e"/><stop offset="0.409" stop-color="#85009e"/><stop offset="0.439" stop-color="#9e009a"/><stop offset="0.485" stop-color="#9e0076"/><stop offset="0.545" stop-color="#9e0057"/><stop offset="0.636" stop-color="#9e003a"/><stop offset="0.758" stop-color="#9e0023"/><stop offset="0.939" stop-color="#9e000f"/><stop offset="1.000" stop-color="#9e000a"/></linearGradient><linearGradient id="zd111" gradientUnits="userSpaceOnUse" x1="1160" x2="1820" y1="0" y2="0"><stop offset="0.000" stop-color="#00339e"/><stop offset="0.227" stop-color="#00199e"/><stop offset="0.273" stop-color="#1a139e"/><stop offset="0.364" stop-color="#5e039e"/><stop offset="0.409" stop-color="#85009e"/><stop offset="0.439" stop-color="#9e009a"/><stop offset="0.485" stop-color="#9e0077"/><stop offset="0.545" stop-color="#9e0058"/><stop offset="0.621" stop-color="#9e003f"/><stop offset="0.727" stop-color="#9e0028"/><stop offset="0.909" stop-color="#9e0012"/><stop offset="1.000" stop-color="#9e000b"/></linearGradient><linearGradient id="zd112" gradientUnits="userSpaceOnUse" x1="1160" x2="1820" y1="0" y2="0"><stop offset="0.000" stop-color="#00309e"/><stop offset="0.212" stop-color="#00199e"/><stop offset="0.227" stop-color="#00169e"/><stop offset="0.333" stop-color="#46069e"/><stop offset="0.379" stop-color="#6b009e"/><stop offset="0.424" stop-color="#93009e"/><stop offset="0.439" stop-color="#9e009b"/><stop offset="0.485" stop-color="#9e0078"/><stop offset="0.545" stop-color="#9e0059"/><stop offset="0.636" stop-color="#9e003b"/><stop offset="0.773" stop-color="#9e0022"/><stop offset="0.955" stop-color="#9e000f"/><stop offset="1.000" stop-color="#9e000b"/></linearGradient><linearGradient id="zd113" gradientUnits="userSpaceOnUse" x1="1160" x2="1820" y1="0" y2="0"><stop offset="0.000" stop-color="#002e9e"/><stop offset="0.227" stop-color="#00149e"/><stop offset="0.333" stop-color="#47039e"/><stop offset="0.379" stop-color="#6b009e"/><stop offset="0.424" stop-color="#93009e"/><stop offset="0.439" stop-color="#9e009b"/><stop offset="0.500" stop-color="#9e006f"/><stop offset="0.561" stop-color="#9e0054"/><stop offset="0.636" stop-color="#9e003c"/><stop offset="0.758" stop-color="#9e0025"/><stop offset="0.955" stop-color="#9e000f"/><stop offset="1.000" stop-color="#9e000c"/></linearGradient><linearGradient id="zd114" gradientUnits="userSpaceOnUse" x1="1160" x2="1820" y1="0" y2="0"><stop offset="0.000" stop-color="#002b9e"/><stop offset="0.227" stop-color="#02119e"/><stop offset="0.333" stop-color="#48009e"/><stop offset="0.409" stop-color="#85009e"/><stop offset="0.439" stop-color="#9e009c"/><stop offset="0.485" stop-color="#9e0079"/><stop offset="0.545" stop-color="#9e005a"/><stop offset="0.636" stop-color="#9e003d"/><stop offset="0.773" stop-color="#9e0023"/><stop offset="0.985" stop-color="#9e000e"/><stop offset="1.000" stop-color="#9e000d"/></linearGradient><linearGradient id="zd115" gradientUnits="userSpaceOnUse" x1="1160" x2="1820" y1="0" y2="0"><stop offset="0.000" stop-color="#00299e"/><stop offset="0.212" stop-color="#00109e"/><stop offset="0.227" stop-color="#030e9e"/><stop offset="0.333" stop-color="#49009e"/><stop offset="0.409" stop-color="#85009e"/><stop offset="0.439" stop-color="#9e009c"/><stop offset="0.485" stop-color="#9e007a"/><stop offset="0.545" stop-color="#9e005b"/><stop offset="0.636" stop-color="#9e003e"/><stop offset="0.758" stop-color="#9e0026"/><stop offset="0.939" stop-color="#9e0012"/><stop offset="1.000" stop-color="#9e000d"/></linearGradient><linearGradient id="zd116" gradientUnits="userSpaceOnUse" x1="1160" x2="1820" y1="0" y2="0"><stop offset="0.000" stop-color="#00279e"/><stop offset="0.212" stop-color="#000e9e"/><stop offset="0.242" stop-color="#0d0a9e"/><stop offset="0.318" stop-color="#3e009e"/><stop offset="0.439" stop-color="#9e009c"/><stop offset="0.485" stop-color="#9e007a"/><stop offset="0.545" stop-color="#9e005c"/><stop offset="0.621" stop-color="#9e0042"/><stop offset="0.758" stop-color="#9e0027"/><stop offset="0.955" stop-color="#9e0011"/><stop offset="1.000" stop-color="#9e000e"/></linearGradient><linearGradient id="zd117" gradientUnits="userSpaceOnUse" x1="1160" x2="1820" y1="0" y2="0"><stop offset="0.000" stop-color="#00249e"/><stop offset="0.212" stop-color="#000b9e"/><stop offset="0.258" stop-color="#18059e"/><stop offset="0.303" stop-color="#35009e"/><stop offset="0.394" stop-color="#78009e"/><stop offset="0.439" stop-color="#9e009d"/><stop offset="0.485" stop-color="#9e007b"/><stop offset="0.545" stop-color="#9e005c"/><stop offset="0.636" stop-color="#9e003f"/><stop offset="0.773" stop-color="#9e0025"/><stop offset="1.000" stop-color="#9e000e"/></linearGradient><linearGradient id="zd118" gradientUnits="userSpaceOnUse" x1="1160" x2="1820" y1="0" y2="0"><stop offset="0.000" stop-color="#00229e"/><stop offset="0.212" stop-color="#00099e"/><stop offset="0.288" stop-color="#2c009e"/><stop offset="0.379" stop-color="#6c009e"/><stop offset="0.439" stop-color="#9e009d"/><stop offset="0.485" stop-color="#9e007c"/><stop offset="0.545" stop-color="#9e005d"/><stop offset="0.636" stop-color="#9e0040"/><stop offset="0.773" stop-color="#9e0026"/><stop offset="0.970" stop-color="#9e0011"/><stop offset="1.000" stop-color="#9e000f"/></linearGradient><linearGradient id="zd119" gradientUnits="userSpaceOnUse" x1="1160" x2="1820" y1="0" y2="0"><stop offset="0.000" stop-color="#00209e"/><stop offset="0.212" stop-color="#00069e"/><stop offset="0.273" stop-color="#23009e"/><stop offset="0.364" stop-color="#61009e"/><stop offset="0.439" stop-color="#9e009e"/><stop offset="0.485" stop-color="#9e007c"/><stop offset="0.545" stop-color="#9e005e"/><stop offset="0.636" stop-color="#9e0041"/><stop offset="0.758" stop-color="#9e0029"/><stop offset="0.939" stop-color="#9e0014"/><stop offset="1.000" stop-color="#9e000f"/></linearGradient><linearGradient id="zd120" gradientUnits="userSpaceOnUse" x1="1160" x2="1820" y1="0" y2="0"><stop offset="0.000" stop-color="#001e9e"/><stop offset="0.212" stop-color="#01049e"/><stop offset="0.273" stop-color="#24009e"/><stop offset="0.364" stop-color="#61009e"/><stop offset="0.439" stop-color="#9e009e"/><stop offset="0.485" stop-color="#9e007d"/><stop offset="0.545" stop-color="#9e005f"/><stop offset="0.636" stop-color="#9e0041"/><stop offset="0.788" stop-color="#9e0025"/><stop offset="1.000" stop-color="#9e0010"/></linearGradient><linearGradient id="zd121" gradientUnits="userSpaceOnUse" x1="1160" x2="1820" y1="0" y2="0"><stop offset="0.000" stop-color="#001b9e"/><stop offset="0.197" stop-color="#00049e"/><stop offset="0.212" stop-color="#03029e"/><stop offset="0.318" stop-color="#42009e"/><stop offset="0.409" stop-color="#85009e"/><stop offset="0.439" stop-color="#9e009e"/><stop offset="0.485" stop-color="#9e007d"/><stop offset="0.561" stop-color="#9e0059"/><stop offset="0.652" stop-color="#9e003e"/><stop offset="0.803" stop-color="#9e0024"/><stop offset="1.000" stop-color="#9e0010"/></linearGradient><linearGradient id="zd122" gradientUnits="userSpaceOnUse" x1="1160" x2="1820" y1="0" y2="0"><stop offset="0.000" stop-color="#00199e"/><stop offset="0.197" stop-color="#00029e"/><stop offset="0.227" stop-color="#0c009e"/><stop offset="0.333" stop-color="#4d009e"/><stop offset="0.424" stop-color="#91009e"/><stop offset="0.439" stop-color="#9e009e"/><stop offset="0.500" stop-color="#9e0075"/><stop offset="0.561" stop-color="#9e005a"/><stop offset="0.652" stop-color="#9e003f"/><stop offset="0.803" stop-color="#9e0024"/><stop offset="1.000" stop-color="#9e0011"/></linearGradient><linearGradient id="zd123" gradientUnits="userSpaceOnUse" x1="1160" x2="1820" y1="0" y2="0"><stop offset="0.000" stop-color="#00179e"/><stop offset="0.197" stop-color="#00009e"/><stop offset="0.227" stop-color="#0d009e"/><stop offset="0.318" stop-color="#44009e"/><stop offset="0.424" stop-color="#91009e"/><stop offset="0.439" stop-color="#9d009e"/><stop offset="0.500" stop-color="#9e0076"/><stop offset="0.576" stop-color="#9e0055"/><stop offset="0.697" stop-color="#9e0036"/><stop offset="0.848" stop-color="#9e001f"/><stop offset="1.000" stop-color="#9e0011"/></linearGradient><linearGradient id="zd124" gradientUnits="userSpaceOnUse" x1="1160" x2="1820" y1="0" y2="0"><stop offset="0.000" stop-color="#00159e"/><stop offset="0.182" stop-color="#00009e"/><stop offset="0.197" stop-color="#00009e"/><stop offset="0.273" stop-color="#28009e"/><stop offset="0.379" stop-color="#6e009e"/><stop offset="0.439" stop-color="#9d009e"/><stop offset="0.500" stop-color="#9e0077"/><stop offset="0.561" stop-color="#9e005b"/><stop offset="0.652" stop-color="#9e0041"/><stop offset="0.773" stop-color="#9e002a"/><stop offset="0.970" stop-color="#9e0014"/><stop offset="1.000" stop-color="#9e0012"/></linearGradient><linearGradient id="zd125" gradientUnits="userSpaceOnUse" x1="1160" x2="1820" y1="0" y2="0"><stop offset="0.000" stop-color="#00139e"/><stop offset="0.167" stop-color="#00009e"/><stop offset="0.197" stop-color="#00009e"/><stop offset="0.303" stop-color="#3b009e"/><stop offset="0.394" stop-color="#79009e"/><stop offset="0.439" stop-color="#9d009e"/><stop offset="0.500" stop-color="#9e0077"/><stop offset="0.561" stop-color="#9e005c"/><stop offset="0.652" stop-color="#9e0041"/><stop offset="0.803" stop-color="#9e0026"/><stop offset="1.000" stop-color="#9e0012"/></linearGradient><linearGradient id="zd126" gradientUnits="userSpaceOnUse" x1="1160" x2="1820" y1="0" y2="0"><stop offset="0.000" stop-color="#00119e"/><stop offset="0.152" stop-color="#00009e"/><stop offset="0.197" stop-color="#01009e"/><stop offset="0.303" stop-color="#3c009e"/><stop offset="0.394" stop-color="#79009e"/><stop offset="0.439" stop-color="#9c009e"/><stop offset="0.500" stop-color="#9e0078"/><stop offset="0.576" stop-color="#9e0057"/><stop offset="0.697" stop-color="#9e0038"/><stop offset="0.848" stop-color="#9e0021"/><stop offset="1.000" stop-color="#9e0013"/></linearGradient><linearGradient id="zd127" gradientUnits="userSpaceOnUse" x1="1160" x2="1820" y1="0" y2="0"><stop offset="0.000" stop-color="#000f9e"/><stop offset="0.152" stop-color="#00009e"/><stop offset="0.197" stop-color="#02009e"/><stop offset="0.318" stop-color="#46009e"/><stop offset="0.409" stop-color="#85009e"/><stop offset="0.439" stop-color="#9c009e"/><stop offset="0.515" stop-color="#9e0071"/><stop offset="0.591" stop-color="#9e0053"/><stop offset="0.697" stop-color="#9e0039"/><stop offset="0.848" stop-color="#9e0022"/><stop offset="1.000" stop-color="#9e0014"/></linearGradient><linearGradient id="zd128" gradientUnits="userSpaceOnUse" x1="1160" x2="1820" y1="0" y2="0"><stop offset="0.000" stop-color="#000d9e"/><stop offset="0.136" stop-color="#00009e"/><stop offset="0.182" stop-color="#00009e"/><stop offset="0.197" stop-color="#03009e"/><stop offset="0.318" stop-color="#47009e"/><stop offset="0.409" stop-color="#85009e"/><stop offset="0.439" stop-color="#9c009e"/><stop offset="0.515" stop-color="#9e0071"/><stop offset="0.606" stop-color="#9e004f"/><stop offset="0.712" stop-color="#9e0036"/><stop offset="0.924" stop-color="#9e001a"/><stop offset="1.000" stop-color="#9e0014"/></linearGradient><linearGradient id="zd129" gradientUnits="userSpaceOnUse" x1="1160" x2="1820" y1="0" y2="0"><stop offset="0.000" stop-color="#000b9e"/><stop offset="0.121" stop-color="#00009e"/><stop offset="0.182" stop-color="#00009e"/><stop offset="0.212" stop-color="#0c009e"/><stop offset="0.318" stop-color="#47009e"/><stop offset="0.439" stop-color="#9b009e"/><stop offset="0.485" stop-color="#9e0082"/><stop offset="0.561" stop-color="#9e005f"/><stop offset="0.652" stop-color="#9e0044"/><stop offset="0.773" stop-color="#9e002d"/><stop offset="0.970" stop-color="#9e0017"/><stop offset="1.000" stop-color="#9e0015"/></linearGradient><linearGradient id="zd130" gradientUnits="userSpaceOnUse" x1="1160" x2="1820" y1="0" y2="0"><stop offset="0.000" stop-color="#00099e"/><stop offset="0.106" stop-color="#00009e"/><stop offset="0.182" stop-color="#00009e"/><stop offset="0.273" stop-color="#2d009e"/><stop offset="0.379" stop-color="#6f009e"/><stop offset="0.439" stop-color="#9b009e"/><stop offset="0.485" stop-color="#9e0082"/><stop offset="0.561" stop-color="#9e005f"/><stop offset="0.652" stop-color="#9e0044"/><stop offset="0.803" stop-color="#9e0029"/><stop offset="1.000" stop-color="#9e0015"/></linearGradient><linearGradient id="zd131" gradientUnits="userSpaceOnUse" x1="1160" x2="1820" y1="0" y2="0"><stop offset="0.000" stop-color="#00089e"/><stop offset="0.091" stop-color="#00009e"/><stop offset="0.182" stop-color="#00009e"/><stop offset="0.303" stop-color="#40009e"/><stop offset="0.394" stop-color="#7a009e"/><stop offset="0.439" stop-color="#9b009e"/><stop offset="0.485" stop-color="#9e0083"/><stop offset="0.561" stop-color="#9e0060"/><stop offset="0.652" stop-color="#9e0045"/><stop offset="0.788" stop-color="#9e002c"/><stop offset="0.985" stop-color="#9e0017"/><stop offset="1.000" stop-color="#9e0016"/></linearGradient><linearGradient id="zd132" gradientUnits="userSpaceOnUse" x1="1160" x2="1820" y1="0" y2="0"><stop offset="0.000" stop-color="#00079e"/><stop offset="0.076" stop-color="#00009e"/><stop offset="0.182" stop-color="#00009e"/><stop offset="0.303" stop-color="#40009e"/><stop offset="0.409" stop-color="#84009e"/><stop offset="0.439" stop-color="#9b009e"/><stop offset="0.485" stop-color="#9e0083"/><stop offset="0.561" stop-color="#9e0060"/><stop offset="0.652" stop-color="#9e0045"/><stop offset="0.803" stop-color="#9e002a"/><stop offset="1.000" stop-color="#9e0016"/></linearGradient><linearGradient id="zd133" gradientUnits="userSpaceOnUse" x1="1160" x2="1820" y1="0" y2="0"><stop offset="0.000" stop-color="#00079e"/><stop offset="0.076" stop-color="#00009e"/><stop offset="0.182" stop-color="#00009e"/><stop offset="0.303" stop-color="#40009e"/><stop offset="0.409" stop-color="#84009e"/><stop offset="0.439" stop-color="#9b009e"/><stop offset="0.485" stop-color="#9e0083"/><stop offset="0.561" stop-color="#9e0060"/><stop offset="0.652" stop-color="#9e0045"/><stop offset="0.803" stop-color="#9e002a"/><stop offset="1.000" stop-color="#9e0016"/></linearGradient>
<filter id="vb" filterUnits="userSpaceOnUse" x="1100" y="100" width="820" height="620"><feGaussianBlur stdDeviation="0.01 2.5"/></filter>
<linearGradient id="zb0" gradientUnits="userSpaceOnUse" x1="1290.83" x2="1733.7" y1="0" y2="0"><stop offset="0.000" stop-color="#00ff23"/><stop offset="0.289" stop-color="#00ff00"/><stop offset="0.307" stop-color="#00ff00"/><stop offset="0.325" stop-color="#05ff00"/><stop offset="0.470" stop-color="#5dff00"/><stop offset="0.578" stop-color="#acff00"/><stop offset="0.668" stop-color="#f6ff00"/><stop offset="0.686" stop-color="#fff800"/><stop offset="0.759" stop-color="#ffc400"/><stop offset="0.849" stop-color="#ff9700"/><stop offset="0.975" stop-color="#ff6d00"/><stop offset="1.012" stop-color="#ff6400"/></linearGradient><linearGradient id="zb1" gradientUnits="userSpaceOnUse" x1="1290.83" x2="1733.7" y1="0" y2="0"><stop offset="0.000" stop-color="#00ff25"/><stop offset="0.289" stop-color="#00ff00"/><stop offset="0.307" stop-color="#00ff00"/><stop offset="0.325" stop-color="#06ff00"/><stop offset="0.470" stop-color="#60ff00"/><stop offset="0.578" stop-color="#afff00"/><stop offset="0.668" stop-color="#fbff00"/><stop offset="0.704" stop-color="#ffe400"/><stop offset="0.777" stop-color="#ffb600"/><stop offset="0.885" stop-color="#ff8600"/><stop offset="1.012" stop-color="#ff6200"/></linearGradient><linearGradient id="zb2" gradientUnits="userSpaceOnUse" x1="1290.83" x2="1733.7" y1="0" y2="0"><stop offset="0.000" stop-color="#00ff27"/><stop offset="0.307" stop-color="#00ff00"/><stop offset="0.379" stop-color="#28ff00"/><stop offset="0.506" stop-color="#7dff00"/><stop offset="0.614" stop-color="#d1ff00"/><stop offset="0.668" stop-color="#fffd00"/><stop offset="0.741" stop-color="#ffc700"/><stop offset="0.813" stop-color="#ffa100"/><stop offset="0.903" stop-color="#ff7e00"/><stop offset="1.012" stop-color="#ff5f00"/></linearGradient><linearGradient id="zb3" gradientUnits="userSpaceOnUse" x1="1290.83" x2="1733.7" y1="0" y2="0"><stop offset="0.000" stop-color="#00ff29"/><stop offset="0.307" stop-color="#00ff01"/><stop offset="0.434" stop-color="#4dff00"/><stop offset="0.560" stop-color="#a9ff00"/><stop offset="0.650" stop-color="#f6ff00"/><stop offset="0.668" stop-color="#fff800"/><stop offset="0.723" stop-color="#ffcf00"/><stop offset="0.813" stop-color="#ff9d00"/><stop offset="0.921" stop-color="#ff7500"/><stop offset="1.012" stop-color="#ff5d00"/></linearGradient><linearGradient id="zb4" gradientUnits="userSpaceOnUse" x1="1290.83" x2="1733.7" y1="0" y2="0"><stop offset="0.000" stop-color="#00ff2b"/><stop offset="0.307" stop-color="#01ff03"/><stop offset="0.361" stop-color="#21ff00"/><stop offset="0.488" stop-color="#76ff00"/><stop offset="0.596" stop-color="#cbff00"/><stop offset="0.650" stop-color="#fbff00"/><stop offset="0.686" stop-color="#ffe400"/><stop offset="0.741" stop-color="#ffbf00"/><stop offset="0.831" stop-color="#ff9200"/><stop offset="0.939" stop-color="#ff6e00"/><stop offset="1.012" stop-color="#ff5b00"/></linearGradient><linearGradient id="zb5" gradientUnits="userSpaceOnUse" x1="1290.83" x2="1733.7" y1="0" y2="0"><stop offset="0.000" stop-color="#00ff2d"/><stop offset="0.307" stop-color="#02ff05"/><stop offset="0.361" stop-color="#23ff00"/><stop offset="0.470" stop-color="#6cff00"/><stop offset="0.578" stop-color="#c0ff00"/><stop offset="0.650" stop-color="#fffe00"/><stop offset="0.704" stop-color="#ffd200"/><stop offset="0.777" stop-color="#ffa800"/><stop offset="0.849" stop-color="#ff8800"/><stop offset="0.957" stop-color="#ff6600"/><stop offset="1.012" stop-color="#ff5900"/></linearGradient><linearGradient id="zb6" gradientUnits="userSpaceOnUse" x1="1290.83" x2="1733.7" y1="0" y2="0"><stop offset="0.000" stop-color="#00ff2f"/><stop offset="0.289" stop-color="#00ff0a"/><stop offset="0.307" stop-color="#04ff07"/><stop offset="0.361" stop-color="#25ff00"/><stop offset="0.488" stop-color="#7cff00"/><stop offset="0.596" stop-color="#d4ff00"/><stop offset="0.632" stop-color="#f5ff00"/><stop offset="0.650" stop-color="#fff800"/><stop offset="0.723" stop-color="#ffc200"/><stop offset="0.795" stop-color="#ff9c00"/><stop offset="0.885" stop-color="#ff7900"/><stop offset="1.012" stop-color="#ff5700"/></linearGradient><linearGradient id="zb7" gradientUnits="userSpaceOnUse" x1="1290.83" x2="1733.7" y1="0" y2="0"><stop offset="0.000" stop-color="#00ff31"/><stop offset="0.289" stop-color="#00ff0c"/><stop offset="0.307" stop-color="#06ff09"/><stop offset="0.379" stop-color="#33ff00"/><stop offset="0.506" stop-color="#8eff00"/><stop offset="0.614" stop-color="#e9ff00"/><stop offset="0.632" stop-color="#faff00"/><stop offset="0.650" stop-color="#fff300"/><stop offset="0.704" stop-color="#ffc900"/><stop offset="0.777" stop-color="#ffa100"/><stop offset="0.867" stop-color="#ff7c00"/><stop offset="1.012" stop-color="#ff5500"/></linearGradient><linearGradient id="zb8" gradientUnits="userSpaceOnUse" x1="1290.83" x2="1733.7" y1="0" y2="0"><stop offset="0.000" stop-color="#00ff33"/><stop offset="0.289" stop-color="#00ff0e"/><stop offset="0.325" stop-color="#12ff08"/><stop offset="0.397" stop-color="#41ff00"/><stop offset="0.506" stop-color="#91ff00"/><stop offset="0.614" stop-color="#efff00"/><stop offset="0.632" stop-color="#fffe00"/><stop offset="0.686" stop-color="#ffd100"/><stop offset="0.759" stop-color="#ffa600"/><stop offset="0.849" stop-color="#ff8000"/><stop offset="0.957" stop-color="#ff6000"/><stop offset="1.012" stop-color="#ff5300"/></linearGradient><linearGradient id="zb9" gradientUnits="userSpaceOnUse" x1="1290.83" x2="1733.7" y1="0" y2="0"><stop offset="0.000" stop-color="#00ff35"/><stop offset="0.289" stop-color="#00ff10"/><stop offset="0.361" stop-color="#2cff05"/><stop offset="0.415" stop-color="#51ff00"/><stop offset="0.542" stop-color="#b3ff00"/><stop offset="0.614" stop-color="#f4ff00"/><stop offset="0.632" stop-color="#fff900"/><stop offset="0.686" stop-color="#ffcd00"/><stop offset="0.759" stop-color="#ffa300"/><stop offset="0.831" stop-color="#ff8400"/><stop offset="0.939" stop-color="#ff6200"/><stop offset="1.012" stop-color="#ff5100"/></linearGradient><linearGradient id="zb10" gradientUnits="userSpaceOnUse" x1="1290.83" x2="1733.7" y1="0" y2="0"><stop offset="0.000" stop-color="#00ff37"/><stop offset="0.271" stop-color="#00ff15"/><stop offset="0.289" stop-color="#00ff12"/><stop offset="0.415" stop-color="#53ff00"/><stop offset="0.524" stop-color="#a8ff00"/><stop offset="0.614" stop-color="#faff00"/><stop offset="0.632" stop-color="#fff300"/><stop offset="0.686" stop-color="#ffc900"/><stop offset="0.759" stop-color="#ff9f00"/><stop offset="0.849" stop-color="#ff7a00"/><stop offset="0.975" stop-color="#ff5700"/><stop offset="1.012" stop-color="#ff4f00"/></linearGradient><linearGradient id="zb11" gradientUnits="userSpaceOnUse" x1="1290.83" x2="1733.7" y1="0" y2="0"><stop offset="0.000" stop-color="#00ff39"/><stop offset="0.271" stop-color="#00ff17"/><stop offset="0.289" stop-color="#01ff14"/><stop offset="0.415" stop-color="#56ff00"/><stop offset="0.524" stop-color="#acff00"/><stop offset="0.614" stop-color="#ffff00"/><stop offset="0.668" stop-color="#ffd100"/><stop offset="0.741" stop-color="#ffa500"/><stop offset="0.813" stop-color="#ff8400"/><stop offset="0.939" stop-color="#ff5d00"/><stop offset="1.012" stop-color="#ff4d00"/></linearGradient><linearGradient id="zb12" gradientUnits="userSpaceOnUse" x1="1290.83" x2="1733.7" y1="0" y2="0"><stop offset="0.000" stop-color="#00ff3c"/><stop offset="0.271" stop-color="#00ff19"/><stop offset="0.289" stop-color="#03ff17"/><stop offset="0.397" stop-color="#4cff05"/><stop offset="0.452" stop-color="#75ff00"/><stop offset="0.542" stop-color="#c0ff00"/><stop offset="0.596" stop-color="#f3ff00"/><stop offset="0.614" stop-color="#fff900"/><stop offset="0.668" stop-color="#ffcc00"/><stop offset="0.741" stop-color="#ffa100"/><stop offset="0.831" stop-color="#ff7b00"/><stop offset="0.975" stop-color="#ff5300"/><stop offset="1.012" stop-color="#ff4b00"/></linearGradient><linearGradient id="zb13" gradientUnits="userSpaceOnUse" x1="1290.83" x2="1733.7" y1="0" y2="0"><stop offset="0.000" stop-color="#00ff3e"/><stop offset="0.271" stop-color="#00ff1c"/><stop offset="0.289" stop-color="#05ff19"/><stop offset="0.397" stop-color="#4fff07"/><stop offset="0.452" stop-color="#78ff00"/><stop offset="0.560" stop-color="#d6ff00"/><stop offset="0.596" stop-color="#f9ff00"/><stop offset="0.614" stop-color="#fff300"/><stop offset="0.668" stop-color="#ffc800"/><stop offset="0.741" stop-color="#ff9d00"/><stop offset="0.831" stop-color="#ff7800"/><stop offset="0.957" stop-color="#ff5500"/><stop offset="1.012" stop-color="#ff4900"/></linearGradient><linearGradient id="zb14" gradientUnits="userSpaceOnUse" x1="1290.83" x2="1733.7" y1="0" y2="0"><stop offset="0.000" stop-color="#00ff40"/><stop offset="0.271" stop-color="#00ff1e"/><stop offset="0.307" stop-color="#12ff19"/><stop offset="0.434" stop-color="#6dff03"/><stop offset="0.488" stop-color="#9aff00"/><stop offset="0.560" stop-color="#dbff00"/><stop offset="0.596" stop-color="#ffff00"/><stop offset="0.650" stop-color="#ffd000"/><stop offset="0.704" stop-color="#ffad00"/><stop offset="0.777" stop-color="#ff8a00"/><stop offset="0.867" stop-color="#ff6a00"/><stop offset="1.012" stop-color="#ff4700"/></linearGradient><linearGradient id="zb15" gradientUnits="userSpaceOnUse" x1="1290.83" x2="1733.7" y1="0" y2="0"><stop offset="0.000" stop-color="#00ff43"/><stop offset="0.271" stop-color="#00ff21"/><stop offset="0.307" stop-color="#14ff1b"/><stop offset="0.415" stop-color="#62ff09"/><stop offset="0.470" stop-color="#8eff00"/><stop offset="0.578" stop-color="#f2ff00"/><stop offset="0.596" stop-color="#fff900"/><stop offset="0.650" stop-color="#ffcb00"/><stop offset="0.723" stop-color="#ff9f00"/><stop offset="0.795" stop-color="#ff7f00"/><stop offset="0.903" stop-color="#ff5d00"/><stop offset="1.012" stop-color="#ff4600"/></linearGradient><linearGradient id="zb16" gradientUnits="userSpaceOnUse" x1="1290.83" x2="1733.7" y1="0" y2="0"><stop offset="0.000" stop-color="#00ff45"/><stop offset="0.271" stop-color="#00ff23"/><stop offset="0.361" stop-color="#3cff15"/><stop offset="0.470" stop-color="#92ff01"/><stop offset="0.578" stop-color="#f8ff00"/><stop offset="0.596" stop-color="#fff300"/><stop offset="0.650" stop-color="#ffc700"/><stop offset="0.723" stop-color="#ff9b00"/><stop offset="0.813" stop-color="#ff7600"/><stop offset="0.957" stop-color="#ff4e00"/><stop offset="1.012" stop-color="#ff4400"/></linearGradient><linearGradient id="zb17" gradientUnits="userSpaceOnUse" x1="1290.83" x2="1733.7" y1="0" y2="0"><stop offset="0.000" stop-color="#00ff48"/><stop offset="0.271" stop-color="#00ff26"/><stop offset="0.397" stop-color="#5bff11"/><stop offset="0.488" stop-color="#a6ff00"/><stop offset="0.578" stop-color="#feff00"/><stop offset="0.632" stop-color="#ffcf00"/><stop offset="0.704" stop-color="#ffa100"/><stop offset="0.795" stop-color="#ff7900"/><stop offset="0.921" stop-color="#ff5400"/><stop offset="1.012" stop-color="#ff4200"/></linearGradient><linearGradient id="zb18" gradientUnits="userSpaceOnUse" x1="1290.83" x2="1733.7" y1="0" y2="0"><stop offset="0.000" stop-color="#00ff4a"/><stop offset="0.271" stop-color="#02ff28"/><stop offset="0.379" stop-color="#50ff17"/><stop offset="0.470" stop-color="#9bff06"/><stop offset="0.524" stop-color="#cdff00"/><stop offset="0.560" stop-color="#f1ff00"/><stop offset="0.578" stop-color="#fffa00"/><stop offset="0.632" stop-color="#ffca00"/><stop offset="0.704" stop-color="#ff9d00"/><stop offset="0.777" stop-color="#ff7d00"/><stop offset="0.885" stop-color="#ff5b00"/><stop offset="1.012" stop-color="#ff4000"/></linearGradient><linearGradient id="zb19" gradientUnits="userSpaceOnUse" x1="1290.83" x2="1733.7" y1="0" y2="0"><stop offset="0.000" stop-color="#00ff4d"/><stop offset="0.253" stop-color="#00ff2e"/><stop offset="0.271" stop-color="#04ff2b"/><stop offset="0.379" stop-color="#53ff19"/><stop offset="0.470" stop-color="#9fff09"/><stop offset="0.524" stop-color="#d2ff00"/><stop offset="0.560" stop-color="#f8ff00"/><stop offset="0.578" stop-color="#fff400"/><stop offset="0.614" stop-color="#ffd300"/><stop offset="0.686" stop-color="#ffa300"/><stop offset="0.777" stop-color="#ff7a00"/><stop offset="0.903" stop-color="#ff5400"/><stop offset="1.012" stop-color="#ff3e00"/></linearGradient><linearGradient id="zb20" gradientUnits="userSpaceOnUse" x1="1290.83" x2="1733.7" y1="0" y2="0"><stop offset="0.000" stop-color="#00ff4f"/><stop offset="0.253" stop-color="#00ff30"/><stop offset="0.271" stop-color="#06ff2e"/><stop offset="0.379" stop-color="#56ff1c"/><stop offset="0.470" stop-color="#a3ff0b"/><stop offset="0.524" stop-color="#d8ff00"/><stop offset="0.560" stop-color="#feff00"/><stop offset="0.614" stop-color="#ffce00"/><stop offset="0.686" stop-color="#ff9f00"/><stop offset="0.777" stop-color="#ff7700"/><stop offset="0.885" stop-color="#ff5600"/><stop offset="1.012" stop-color="#ff3c00"/></linearGradient><linearGradient id="zb21" gradientUnits="userSpaceOnUse" x1="1290.83" x2="1733.7" y1="0" y2="0"><stop offset="0.000" stop-color="#00ff52"/><stop offset="0.253" stop-color="#00ff33"/><stop offset="0.289" stop-color="#14ff2e"/><stop offset="0.397" stop-color="#68ff1c"/><stop offset="0.488" stop-color="#b9ff0a"/><stop offset="0.542" stop-color="#f1ff00"/><stop offset="0.560" stop-color="#fffa00"/><stop offset="0.614" stop-color="#ffc900"/><stop offset="0.686" stop-color="#ff9b00"/><stop offset="0.777" stop-color="#ff7400"/><stop offset="0.921" stop-color="#ff4c00"/><stop offset="1.012" stop-color="#ff3a00"/></linearGradient><linearGradient id="zb22" gradientUnits="userSpaceOnUse" x1="1290.83" x2="1733.7" y1="0" y2="0"><stop offset="0.000" stop-color="#00ff55"/><stop offset="0.253" stop-color="#00ff36"/><stop offset="0.307" stop-color="#24ff2e"/><stop offset="0.397" stop-color="#6bff1f"/><stop offset="0.506" stop-color="#d1ff09"/><stop offset="0.542" stop-color="#f7ff01"/><stop offset="0.560" stop-color="#fff400"/><stop offset="0.614" stop-color="#ffc400"/><stop offset="0.686" stop-color="#ff9800"/><stop offset="0.759" stop-color="#ff7800"/><stop offset="0.867" stop-color="#ff5600"/><stop offset="1.012" stop-color="#ff3900"/></linearGradient><linearGradient id="zb23" gradientUnits="userSpaceOnUse" x1="1290.83" x2="1733.7" y1="0" y2="0"><stop offset="0.000" stop-color="#00ff58"/><stop offset="0.253" stop-color="#00ff39"/><stop offset="0.361" stop-color="#50ff28"/><stop offset="0.452" stop-color="#a0ff17"/><stop offset="0.542" stop-color="#fdff04"/><stop offset="0.578" stop-color="#ffdc00"/><stop offset="0.632" stop-color="#ffb300"/><stop offset="0.704" stop-color="#ff8b00"/><stop offset="0.795" stop-color="#ff6800"/><stop offset="0.939" stop-color="#ff4400"/><stop offset="1.012" stop-color="#ff3700"/></linearGradient><linearGradient id="zb24" gradientUnits="userSpaceOnUse" x1="1290.83" x2="1733.7" y1="0" y2="0"><stop offset="0.000" stop-color="#00ff5b"/><stop offset="0.253" stop-color="#01ff3c"/><stop offset="0.343" stop-color="#45ff2e"/><stop offset="0.452" stop-color="#a5ff1b"/><stop offset="0.524" stop-color="#f0ff0b"/><stop offset="0.542" stop-color="#fffa07"/><stop offset="0.578" stop-color="#ffd700"/><stop offset="0.650" stop-color="#ffa300"/><stop offset="0.723" stop-color="#ff8000"/><stop offset="0.849" stop-color="#ff5600"/><stop offset="0.994" stop-color="#ff3800"/><stop offset="1.012" stop-color="#ff3500"/></linearGradient><linearGradient id="zb25" gradientUnits="userSpaceOnUse" x1="1290.83" x2="1733.7" y1="0" y2="0"><stop offset="0.000" stop-color="#00ff5e"/><stop offset="0.235" stop-color="#00ff42"/><stop offset="0.253" stop-color="#03ff3f"/><stop offset="0.361" stop-color="#57ff2e"/><stop offset="0.452" stop-color="#aaff1e"/><stop offset="0.524" stop-color="#f6ff0e"/><stop offset="0.542" stop-color="#fff40a"/><stop offset="0.578" stop-color="#ffd201"/><stop offset="0.632" stop-color="#ffaa00"/><stop offset="0.723" stop-color="#ff7d00"/><stop offset="0.831" stop-color="#ff5800"/><stop offset="0.975" stop-color="#ff3900"/><stop offset="1.012" stop-color="#ff3300"/></linearGradient><linearGradient id="zb26" gradientUnits="userSpaceOnUse" x1="1290.83" x2="1733.7" y1="0" y2="0"><stop offset="0.000" stop-color="#00ff61"/><stop offset="0.235" stop-color="#00ff45"/><stop offset="0.253" stop-color="#05ff42"/><stop offset="0.361" stop-color="#5aff31"/><stop offset="0.452" stop-color="#afff21"/><stop offset="0.524" stop-color="#fdff12"/><stop offset="0.578" stop-color="#ffcc04"/><stop offset="0.614" stop-color="#ffb100"/><stop offset="0.686" stop-color="#ff8900"/><stop offset="0.777" stop-color="#ff6600"/><stop offset="0.885" stop-color="#ff4900"/><stop offset="1.012" stop-color="#ff3100"/></linearGradient><linearGradient id="zb27" gradientUnits="userSpaceOnUse" x1="1290.83" x2="1733.7" y1="0" y2="0"><stop offset="0.000" stop-color="#00ff64"/><stop offset="0.235" stop-color="#00ff48"/><stop offset="0.253" stop-color="#07ff46"/><stop offset="0.343" stop-color="#4eff38"/><stop offset="0.452" stop-color="#b4ff24"/><stop offset="0.506" stop-color="#eeff19"/><stop offset="0.524" stop-color="#fffb15"/><stop offset="0.560" stop-color="#ffd60a"/><stop offset="0.614" stop-color="#ffad00"/><stop offset="0.686" stop-color="#ff8500"/><stop offset="0.777" stop-color="#ff6300"/><stop offset="0.921" stop-color="#ff3f00"/><stop offset="1.012" stop-color="#ff3000"/></linearGradient><linearGradient id="zb28" gradientUnits="userSpaceOnUse" x1="1290.83" x2="1733.7" y1="0" y2="0"><stop offset="0.000" stop-color="#00ff67"/><stop offset="0.235" stop-color="#00ff4c"/><stop offset="0.271" stop-color="#16ff46"/><stop offset="0.379" stop-color="#72ff35"/><stop offset="0.470" stop-color="#ccff24"/><stop offset="0.506" stop-color="#f5ff1c"/><stop offset="0.524" stop-color="#fff417"/><stop offset="0.560" stop-color="#ffd10d"/><stop offset="0.614" stop-color="#ffa801"/><stop offset="0.686" stop-color="#ff8200"/><stop offset="0.777" stop-color="#ff6000"/><stop offset="0.903" stop-color="#ff4100"/><stop offset="1.012" stop-color="#ff2e00"/></linearGradient><linearGradient id="zb29" gradientUnits="userSpaceOnUse" x1="1290.83" x2="1733.7" y1="0" y2="0"><stop offset="0.000" stop-color="#00ff6a"/><stop offset="0.235" stop-color="#00ff4f"/><stop offset="0.289" stop-color="#27ff47"/><stop offset="0.397" stop-color="#87ff36"/><stop offset="0.470" stop-color="#d2ff28"/><stop offset="0.506" stop-color="#fcff20"/><stop offset="0.560" stop-color="#ffcb0f"/><stop offset="0.632" stop-color="#ff9900"/><stop offset="0.704" stop-color="#ff7700"/><stop offset="0.813" stop-color="#ff5300"/><stop offset="0.957" stop-color="#ff3500"/><stop offset="1.012" stop-color="#ff2c00"/></linearGradient><linearGradient id="zb30" gradientUnits="userSpaceOnUse" x1="1290.83" x2="1733.7" y1="0" y2="0"><stop offset="0.000" stop-color="#00ff6d"/><stop offset="0.235" stop-color="#00ff53"/><stop offset="0.325" stop-color="#48ff45"/><stop offset="0.415" stop-color="#9eff36"/><stop offset="0.488" stop-color="#edff28"/><stop offset="0.506" stop-color="#fffb23"/><stop offset="0.542" stop-color="#ffd517"/><stop offset="0.614" stop-color="#ff9f06"/><stop offset="0.668" stop-color="#ff8300"/><stop offset="0.759" stop-color="#ff6000"/><stop offset="0.885" stop-color="#ff4000"/><stop offset="1.012" stop-color="#ff2b00"/></linearGradient><linearGradient id="zb31" gradientUnits="userSpaceOnUse" x1="1290.83" x2="1733.7" y1="0" y2="0"><stop offset="0.000" stop-color="#00ff71"/><stop offset="0.235" stop-color="#01ff56"/><stop offset="0.343" stop-color="#5cff46"/><stop offset="0.434" stop-color="#b6ff36"/><stop offset="0.488" stop-color="#f4ff2b"/><stop offset="0.506" stop-color="#fff426"/><stop offset="0.560" stop-color="#ffc014"/><stop offset="0.614" stop-color="#ff9b08"/><stop offset="0.668" stop-color="#ff7f00"/><stop offset="0.777" stop-color="#ff5800"/><stop offset="0.939" stop-color="#ff3400"/><stop offset="1.012" stop-color="#ff2900"/></linearGradient><linearGradient id="zb32" gradientUnits="userSpaceOnUse" x1="1290.83" x2="1733.7" y1="0" y2="0"><stop offset="0.000" stop-color="#00ff74"/><stop offset="0.217" stop-color="#00ff5c"/><stop offset="0.235" stop-color="#04ff5a"/><stop offset="0.325" stop-color="#4fff4d"/><stop offset="0.415" stop-color="#a8ff3e"/><stop offset="0.488" stop-color="#fbff2f"/><stop offset="0.524" stop-color="#ffdb22"/><stop offset="0.578" stop-color="#ffae12"/><stop offset="0.650" stop-color="#ff8403"/><stop offset="0.704" stop-color="#ff6d00"/><stop offset="0.813" stop-color="#ff4c00"/><stop offset="0.975" stop-color="#ff2c00"/><stop offset="1.012" stop-color="#ff2700"/></linearGradient><linearGradient id="zb33" gradientUnits="userSpaceOnUse" x1="1290.83" x2="1733.7" y1="0" y2="0"><stop offset="0.000" stop-color="#00ff78"/><stop offset="0.217" stop-color="#00ff60"/><stop offset="0.235" stop-color="#06ff5e"/><stop offset="0.307" stop-color="#42ff54"/><stop offset="0.397" stop-color="#9aff45"/><stop offset="0.470" stop-color="#ecff37"/><stop offset="0.488" stop-color="#fffc33"/><stop offset="0.524" stop-color="#ffd524"/><stop offset="0.560" stop-color="#ffb619"/><stop offset="0.614" stop-color="#ff930c"/><stop offset="0.686" stop-color="#ff7100"/><stop offset="0.795" stop-color="#ff4e00"/><stop offset="0.939" stop-color="#ff3000"/><stop offset="1.012" stop-color="#ff2500"/></linearGradient><linearGradient id="zb34" gradientUnits="userSpaceOnUse" x1="1290.83" x2="1733.7" y1="0" y2="0"><stop offset="0.000" stop-color="#00ff7b"/><stop offset="0.217" stop-color="#00ff64"/><stop offset="0.235" stop-color="#08ff62"/><stop offset="0.325" stop-color="#56ff55"/><stop offset="0.415" stop-color="#b3ff46"/><stop offset="0.470" stop-color="#f3ff3c"/><stop offset="0.488" stop-color="#fff436"/><stop offset="0.524" stop-color="#ffcf27"/><stop offset="0.578" stop-color="#ffa416"/><stop offset="0.650" stop-color="#ff7d07"/><stop offset="0.704" stop-color="#ff6700"/><stop offset="0.813" stop-color="#ff4700"/><stop offset="0.939" stop-color="#ff2e00"/><stop offset="1.012" stop-color="#ff2400"/></linearGradient><linearGradient id="zb35" gradientUnits="userSpaceOnUse" x1="1290.83" x2="1733.7" y1="0" y2="0"><stop offset="0.000" stop-color="#00ff7f"/><stop offset="0.217" stop-color="#00ff68"/><stop offset="0.235" stop-color="#0aff66"/><stop offset="0.325" stop-color="#5aff59"/><stop offset="0.415" stop-color="#b9ff4a"/><stop offset="0.470" stop-color="#faff40"/><stop offset="0.488" stop-color="#ffed38"/><stop offset="0.542" stop-color="#ffb923"/><stop offset="0.614" stop-color="#ff8b10"/><stop offset="0.686" stop-color="#ff6a03"/><stop offset="0.741" stop-color="#ff5800"/><stop offset="0.867" stop-color="#ff3900"/><stop offset="1.012" stop-color="#ff2200"/></linearGradient><linearGradient id="zb36" gradientUnits="userSpaceOnUse" x1="1290.83" x2="1733.7" y1="0" y2="0"><stop offset="0.000" stop-color="#00ff83"/><stop offset="0.217" stop-color="#00ff6c"/><stop offset="0.289" stop-color="#3cff63"/><stop offset="0.379" stop-color="#96ff55"/><stop offset="0.452" stop-color="#ebff48"/><stop offset="0.470" stop-color="#fffc44"/><stop offset="0.506" stop-color="#ffd433"/><stop offset="0.560" stop-color="#ffa720"/><stop offset="0.614" stop-color="#ff8712"/><stop offset="0.686" stop-color="#ff6705"/><stop offset="0.741" stop-color="#ff5500"/><stop offset="0.867" stop-color="#ff3700"/><stop offset="1.012" stop-color="#ff2000"/></linearGradient><linearGradient id="zb37" gradientUnits="userSpaceOnUse" x1="1290.83" x2="1733.7" y1="0" y2="0"><stop offset="0.000" stop-color="#00ff87"/><stop offset="0.217" stop-color="#00ff71"/><stop offset="0.307" stop-color="#50ff65"/><stop offset="0.379" stop-color="#9bff5a"/><stop offset="0.452" stop-color="#f2ff4d"/><stop offset="0.470" stop-color="#fff546"/><stop offset="0.506" stop-color="#ffcd35"/><stop offset="0.560" stop-color="#ffa222"/><stop offset="0.632" stop-color="#ff7a10"/><stop offset="0.741" stop-color="#ff5200"/><stop offset="0.885" stop-color="#ff3200"/><stop offset="1.012" stop-color="#ff1f00"/></linearGradient><linearGradient id="zb38" gradientUnits="userSpaceOnUse" x1="1290.83" x2="1733.7" y1="0" y2="0"><stop offset="0.000" stop-color="#00ff8b"/><stop offset="0.217" stop-color="#02ff75"/><stop offset="0.307" stop-color="#54ff6a"/><stop offset="0.379" stop-color="#a1ff5f"/><stop offset="0.452" stop-color="#f9ff52"/><stop offset="0.470" stop-color="#ffed49"/><stop offset="0.506" stop-color="#ffc737"/><stop offset="0.560" stop-color="#ff9d24"/><stop offset="0.632" stop-color="#ff7612"/><stop offset="0.723" stop-color="#ff5503"/><stop offset="0.777" stop-color="#ff4600"/><stop offset="0.921" stop-color="#ff2a00"/><stop offset="1.012" stop-color="#ff1d00"/></linearGradient><linearGradient id="zb39" gradientUnits="userSpaceOnUse" x1="1290.83" x2="1733.7" y1="0" y2="0"><stop offset="0.000" stop-color="#00ff8f"/><stop offset="0.199" stop-color="#00ff7c"/><stop offset="0.217" stop-color="#04ff7a"/><stop offset="0.307" stop-color="#58ff6e"/><stop offset="0.397" stop-color="#bcff61"/><stop offset="0.452" stop-color="#fffd56"/><stop offset="0.488" stop-color="#ffd342"/><stop offset="0.524" stop-color="#ffb232"/><stop offset="0.596" stop-color="#ff841c"/><stop offset="0.668" stop-color="#ff640d"/><stop offset="0.759" stop-color="#ff4800"/><stop offset="0.885" stop-color="#ff2e00"/><stop offset="1.012" stop-color="#ff1c00"/></linearGradient><linearGradient id="zb40" gradientUnits="userSpaceOnUse" x1="1290.83" x2="1733.7" y1="0" y2="0"><stop offset="0.000" stop-color="#00ff93"/><stop offset="0.199" stop-color="#00ff81"/><stop offset="0.217" stop-color="#07ff7f"/><stop offset="0.307" stop-color="#5cff73"/><stop offset="0.379" stop-color="#acff69"/><stop offset="0.434" stop-color="#f1ff60"/><stop offset="0.452" stop-color="#fff559"/><stop offset="0.488" stop-color="#ffcc44"/><stop offset="0.542" stop-color="#ffa02e"/><stop offset="0.596" stop-color="#ff801e"/><stop offset="0.668" stop-color="#ff610f"/><stop offset="0.777" stop-color="#ff4100"/><stop offset="0.939" stop-color="#ff2300"/><stop offset="1.012" stop-color="#ff1a00"/></linearGradient><linearGradient id="zb41" gradientUnits="userSpaceOnUse" x1="1290.83" x2="1733.7" y1="0" y2="0"><stop offset="0.000" stop-color="#00ff98"/><stop offset="0.199" stop-color="#00ff86"/><stop offset="0.217" stop-color="#09ff84"/><stop offset="0.307" stop-color="#60ff78"/><stop offset="0.397" stop-color="#c9ff6b"/><stop offset="0.434" stop-color="#f9ff65"/><stop offset="0.452" stop-color="#ffed5b"/><stop offset="0.488" stop-color="#ffc647"/><stop offset="0.542" stop-color="#ff9b30"/><stop offset="0.614" stop-color="#ff731c"/><stop offset="0.704" stop-color="#ff520a"/><stop offset="0.795" stop-color="#ff3b00"/><stop offset="0.975" stop-color="#ff1d00"/><stop offset="1.012" stop-color="#ff1800"/></linearGradient><linearGradient id="zb42" gradientUnits="userSpaceOnUse" x1="1290.83" x2="1733.7" y1="0" y2="0"><stop offset="0.000" stop-color="#00ff9c"/><stop offset="0.199" stop-color="#00ff8b"/><stop offset="0.235" stop-color="#1cff87"/><stop offset="0.325" stop-color="#78ff7b"/><stop offset="0.397" stop-color="#d0ff71"/><stop offset="0.434" stop-color="#fffd6a"/><stop offset="0.470" stop-color="#ffd252"/><stop offset="0.524" stop-color="#ffa239"/><stop offset="0.596" stop-color="#ff7822"/><stop offset="0.686" stop-color="#ff550f"/><stop offset="0.795" stop-color="#ff3800"/><stop offset="0.975" stop-color="#ff1b00"/><stop offset="1.012" stop-color="#ff1700"/></linearGradient><linearGradient id="zb43" gradientUnits="userSpaceOnUse" x1="1290.83" x2="1733.7" y1="0" y2="0"><stop offset="0.000" stop-color="#00ffa1"/><stop offset="0.199" stop-color="#00ff90"/><stop offset="0.235" stop-color="#1fff8c"/><stop offset="0.325" stop-color="#7dff81"/><stop offset="0.397" stop-color="#d7ff77"/><stop offset="0.415" stop-color="#efff74"/><stop offset="0.434" stop-color="#fff56c"/><stop offset="0.470" stop-color="#ffcb55"/><stop offset="0.524" stop-color="#ff9d3b"/><stop offset="0.596" stop-color="#ff7424"/><stop offset="0.686" stop-color="#ff5210"/><stop offset="0.795" stop-color="#ff3601"/><stop offset="0.975" stop-color="#ff1900"/><stop offset="1.012" stop-color="#ff1500"/></linearGradient><linearGradient id="zb44" gradientUnits="userSpaceOnUse" x1="1290.83" x2="1733.7" y1="0" y2="0"><stop offset="0.000" stop-color="#00ffa6"/><stop offset="0.199" stop-color="#01ff95"/><stop offset="0.271" stop-color="#47ff8d"/><stop offset="0.343" stop-color="#98ff84"/><stop offset="0.415" stop-color="#f8ff7a"/><stop offset="0.434" stop-color="#ffed6f"/><stop offset="0.470" stop-color="#ffc457"/><stop offset="0.524" stop-color="#ff983d"/><stop offset="0.596" stop-color="#ff7026"/><stop offset="0.668" stop-color="#ff5415"/><stop offset="0.813" stop-color="#ff3000"/><stop offset="0.994" stop-color="#ff1600"/><stop offset="1.012" stop-color="#ff1400"/></linearGradient><linearGradient id="zb45" gradientUnits="userSpaceOnUse" x1="1290.83" x2="1733.7" y1="0" y2="0"><stop offset="0.000" stop-color="#00ffab"/><stop offset="0.181" stop-color="#00ff9c"/><stop offset="0.199" stop-color="#03ff9b"/><stop offset="0.289" stop-color="#5eff91"/><stop offset="0.361" stop-color="#b5ff88"/><stop offset="0.415" stop-color="#fffe80"/><stop offset="0.452" stop-color="#ffd064"/><stop offset="0.506" stop-color="#ffa047"/><stop offset="0.560" stop-color="#ff7e32"/><stop offset="0.632" stop-color="#ff5e1f"/><stop offset="0.741" stop-color="#ff3d0b"/><stop offset="0.849" stop-color="#ff2800"/><stop offset="1.012" stop-color="#ff1200"/></linearGradient><linearGradient id="zb46" gradientUnits="userSpaceOnUse" x1="1290.83" x2="1733.7" y1="0" y2="0"><stop offset="0.000" stop-color="#00ffb0"/><stop offset="0.181" stop-color="#00ffa2"/><stop offset="0.199" stop-color="#06ffa0"/><stop offset="0.271" stop-color="#4fff99"/><stop offset="0.343" stop-color="#a4ff91"/><stop offset="0.397" stop-color="#eeff8a"/><stop offset="0.415" stop-color="#fff582"/><stop offset="0.452" stop-color="#ffca66"/><stop offset="0.488" stop-color="#ffa852"/><stop offset="0.560" stop-color="#ff7a34"/><stop offset="0.632" stop-color="#ff5a20"/><stop offset="0.759" stop-color="#ff370a"/><stop offset="0.849" stop-color="#ff2600"/><stop offset="1.012" stop-color="#ff1100"/></linearGradient><linearGradient id="zb47" gradientUnits="userSpaceOnUse" x1="1290.83" x2="1733.7" y1="0" y2="0"><stop offset="0.000" stop-color="#00ffb5"/><stop offset="0.181" stop-color="#00ffa8"/><stop offset="0.199" stop-color="#08ffa6"/><stop offset="0.271" stop-color="#53ffa0"/><stop offset="0.343" stop-color="#aaff98"/><stop offset="0.397" stop-color="#f7ff91"/><stop offset="0.415" stop-color="#ffed84"/><stop offset="0.452" stop-color="#ffc369"/><stop offset="0.506" stop-color="#ff964b"/><stop offset="0.560" stop-color="#ff7636"/><stop offset="0.632" stop-color="#ff5722"/><stop offset="0.759" stop-color="#ff340b"/><stop offset="0.867" stop-color="#ff2100"/><stop offset="1.012" stop-color="#ff0f00"/></linearGradient><linearGradient id="zb48" gradientUnits="userSpaceOnUse" x1="1290.83" x2="1733.7" y1="0" y2="0"><stop offset="0.000" stop-color="#00ffba"/><stop offset="0.181" stop-color="#00ffae"/><stop offset="0.199" stop-color="#0bffac"/><stop offset="0.271" stop-color="#57ffa6"/><stop offset="0.343" stop-color="#b1ff9f"/><stop offset="0.397" stop-color="#ffff98"/><stop offset="0.434" stop-color="#ffcf77"/><stop offset="0.470" stop-color="#ffac5f"/><stop offset="0.524" stop-color="#ff8545"/><stop offset="0.596" stop-color="#ff612d"/><stop offset="0.686" stop-color="#ff4318"/><stop offset="0.813" stop-color="#ff2806"/><stop offset="0.885" stop-color="#ff1d00"/><stop offset="1.012" stop-color="#ff0e00"/></linearGradient><linearGradient id="zb49" gradientUnits="userSpaceOnUse" x1="1290.83" x2="1733.7" y1="0" y2="0"><stop offset="0.000" stop-color="#00ffc0"/><stop offset="0.181" stop-color="#00ffb4"/><stop offset="0.217" stop-color="#20ffb1"/><stop offset="0.289" stop-color="#72ffab"/><stop offset="0.361" stop-color="#d2ffa4"/><stop offset="0.379" stop-color="#edffa2"/><stop offset="0.397" stop-color="#fff69a"/><stop offset="0.434" stop-color="#ffc87a"/><stop offset="0.470" stop-color="#ffa661"/><stop offset="0.542" stop-color="#ff7640"/><stop offset="0.614" stop-color="#ff572a"/><stop offset="0.723" stop-color="#ff3814"/><stop offset="0.867" stop-color="#ff1d01"/><stop offset="1.012" stop-color="#ff0c00"/></linearGradient><linearGradient id="zb50" gradientUnits="userSpaceOnUse" x1="1290.83" x2="1733.7" y1="0" y2="0"><stop offset="0.000" stop-color="#00ffc5"/><stop offset="0.181" stop-color="#00ffbb"/><stop offset="0.253" stop-color="#4cffb5"/><stop offset="0.325" stop-color="#a6ffaf"/><stop offset="0.379" stop-color="#f5ffaa"/><stop offset="0.397" stop-color="#ffed9c"/><stop offset="0.434" stop-color="#ffc17c"/><stop offset="0.470" stop-color="#ffa063"/><stop offset="0.542" stop-color="#ff7242"/><stop offset="0.614" stop-color="#ff542b"/><stop offset="0.741" stop-color="#ff3112"/><stop offset="0.903" stop-color="#ff1700"/><stop offset="1.012" stop-color="#ff0b00"/></linearGradient><linearGradient id="zb51" gradientUnits="userSpaceOnUse" x1="1290.83" x2="1733.7" y1="0" y2="0"><stop offset="0.000" stop-color="#00ffcb"/><stop offset="0.181" stop-color="#01ffc2"/><stop offset="0.253" stop-color="#50ffbd"/><stop offset="0.325" stop-color="#adffb7"/><stop offset="0.379" stop-color="#ffffb2"/><stop offset="0.415" stop-color="#ffce8c"/><stop offset="0.452" stop-color="#ffa971"/><stop offset="0.506" stop-color="#ff8253"/><stop offset="0.578" stop-color="#ff5e37"/><stop offset="0.668" stop-color="#ff4020"/><stop offset="0.795" stop-color="#ff250c"/><stop offset="0.903" stop-color="#ff1500"/><stop offset="1.012" stop-color="#ff0900"/></linearGradient><linearGradient id="zb52" gradientUnits="userSpaceOnUse" x1="1290.83" x2="1733.7" y1="0" y2="0"><stop offset="0.000" stop-color="#00ffd1"/><stop offset="0.163" stop-color="#00ffca"/><stop offset="0.181" stop-color="#04ffc9"/><stop offset="0.253" stop-color="#55ffc4"/><stop offset="0.307" stop-color="#9bffc0"/><stop offset="0.361" stop-color="#ebffbc"/><stop offset="0.379" stop-color="#fff6b4"/><stop offset="0.415" stop-color="#ffc68e"/><stop offset="0.452" stop-color="#ffa373"/><stop offset="0.506" stop-color="#ff7d54"/><stop offset="0.578" stop-color="#ff5a39"/><stop offset="0.686" stop-color="#ff381e"/><stop offset="0.849" stop-color="#ff1a07"/><stop offset="0.939" stop-color="#ff0f00"/><stop offset="1.012" stop-color="#ff0800"/></linearGradient><linearGradient id="zb53" gradientUnits="userSpaceOnUse" x1="1290.83" x2="1733.7" y1="0" y2="0"><stop offset="0.000" stop-color="#00ffd7"/><stop offset="0.163" stop-color="#00ffd1"/><stop offset="0.181" stop-color="#07ffd0"/><stop offset="0.271" stop-color="#70ffcb"/><stop offset="0.325" stop-color="#bcffc7"/><stop offset="0.361" stop-color="#f4ffc5"/><stop offset="0.379" stop-color="#ffedb5"/><stop offset="0.415" stop-color="#ffbf90"/><stop offset="0.452" stop-color="#ff9d74"/><stop offset="0.506" stop-color="#ff7856"/><stop offset="0.596" stop-color="#ff5035"/><stop offset="0.704" stop-color="#ff321c"/><stop offset="0.849" stop-color="#ff1808"/><stop offset="0.939" stop-color="#ff0d00"/><stop offset="1.012" stop-color="#ff0600"/></linearGradient><linearGradient id="zb54" gradientUnits="userSpaceOnUse" x1="1290.83" x2="1733.7" y1="0" y2="0"><stop offset="0.000" stop-color="#00ffde"/><stop offset="0.163" stop-color="#00ffd8"/><stop offset="0.181" stop-color="#0affd7"/><stop offset="0.253" stop-color="#5fffd4"/><stop offset="0.307" stop-color="#a8ffd1"/><stop offset="0.361" stop-color="#feffce"/><stop offset="0.397" stop-color="#ffcca3"/><stop offset="0.434" stop-color="#ffa783"/><stop offset="0.488" stop-color="#ff7e61"/><stop offset="0.560" stop-color="#ff5a42"/><stop offset="0.668" stop-color="#ff3725"/><stop offset="0.813" stop-color="#ff1b0d"/><stop offset="0.939" stop-color="#ff0c00"/><stop offset="1.012" stop-color="#ff0500"/></linearGradient><linearGradient id="zb55" gradientUnits="userSpaceOnUse" x1="1290.83" x2="1733.7" y1="0" y2="0"><stop offset="0.000" stop-color="#00ffe4"/><stop offset="0.163" stop-color="#00ffe0"/><stop offset="0.181" stop-color="#0dffdf"/><stop offset="0.253" stop-color="#64ffdd"/><stop offset="0.307" stop-color="#b0ffda"/><stop offset="0.343" stop-color="#e9ffd9"/><stop offset="0.361" stop-color="#fff6d0"/><stop offset="0.379" stop-color="#ffdbb9"/><stop offset="0.415" stop-color="#ffb194"/><stop offset="0.452" stop-color="#ff9278"/><stop offset="0.524" stop-color="#ff6652"/><stop offset="0.596" stop-color="#ff4938"/><stop offset="0.704" stop-color="#ff2d1f"/><stop offset="0.867" stop-color="#ff1208"/><stop offset="0.975" stop-color="#ff0600"/><stop offset="1.012" stop-color="#ff0300"/></linearGradient><linearGradient id="zb56" gradientUnits="userSpaceOnUse" x1="1290.83" x2="1733.7" y1="0" y2="0"><stop offset="0.000" stop-color="#00ffeb"/><stop offset="0.163" stop-color="#00ffe8"/><stop offset="0.181" stop-color="#10ffe8"/><stop offset="0.253" stop-color="#69ffe6"/><stop offset="0.307" stop-color="#b8ffe4"/><stop offset="0.343" stop-color="#f3ffe3"/><stop offset="0.361" stop-color="#ffedd2"/><stop offset="0.397" stop-color="#ffbda6"/><stop offset="0.434" stop-color="#ff9a87"/><stop offset="0.488" stop-color="#ff7565"/><stop offset="0.560" stop-color="#ff5346"/><stop offset="0.650" stop-color="#ff362c"/><stop offset="0.795" stop-color="#ff1a12"/><stop offset="0.957" stop-color="#ff0700"/><stop offset="1.012" stop-color="#ff0200"/></linearGradient><linearGradient id="zb57" gradientUnits="userSpaceOnUse" x1="1290.83" x2="1733.7" y1="0" y2="0"><stop offset="0.000" stop-color="#00fff2"/><stop offset="0.163" stop-color="#00fff0"/><stop offset="0.217" stop-color="#3ffff0"/><stop offset="0.271" stop-color="#89ffef"/><stop offset="0.325" stop-color="#ddffed"/><stop offset="0.343" stop-color="#fdffed"/><stop offset="0.379" stop-color="#ffcbbc"/><stop offset="0.415" stop-color="#ffa497"/><stop offset="0.452" stop-color="#ff877c"/><stop offset="0.506" stop-color="#ff675d"/><stop offset="0.578" stop-color="#ff4941"/><stop offset="0.686" stop-color="#ff2b26"/><stop offset="0.849" stop-color="#ff110c"/><stop offset="0.994" stop-color="#ff0200"/><stop offset="1.012" stop-color="#ff0000"/></linearGradient><linearGradient id="zb58" gradientUnits="userSpaceOnUse" x1="1290.83" x2="1733.7" y1="0" y2="0"><stop offset="0.000" stop-color="#00fffa"/><stop offset="0.163" stop-color="#02fff9"/><stop offset="0.235" stop-color="#5cfff9"/><stop offset="0.289" stop-color="#abfff8"/><stop offset="0.325" stop-color="#e7fff8"/><stop offset="0.343" stop-color="#fff7f0"/><stop offset="0.361" stop-color="#ffdad4"/><stop offset="0.397" stop-color="#ffafaa"/><stop offset="0.434" stop-color="#ff8e8a"/><stop offset="0.488" stop-color="#ff6b68"/><stop offset="0.560" stop-color="#ff4c49"/><stop offset="0.650" stop-color="#ff312f"/><stop offset="0.777" stop-color="#ff1917"/><stop offset="0.994" stop-color="#ff0000"/><stop offset="1.012" stop-color="#ff0000"/></linearGradient><linearGradient id="zb59" gradientUnits="userSpaceOnUse" x1="1290.83" x2="1733.7" y1="0" y2="0"><stop offset="0.000" stop-color="#00fdff"/><stop offset="0.145" stop-color="#00fcff"/><stop offset="0.163" stop-color="#06fcff"/><stop offset="0.235" stop-color="#60fbff"/><stop offset="0.289" stop-color="#b0fbff"/><stop offset="0.325" stop-color="#edfaff"/><stop offset="0.343" stop-color="#ffedf1"/><stop offset="0.379" stop-color="#ffbbbf"/><stop offset="0.415" stop-color="#ff979a"/><stop offset="0.470" stop-color="#ff7174"/><stop offset="0.542" stop-color="#ff4f51"/><stop offset="0.614" stop-color="#ff3739"/><stop offset="0.759" stop-color="#ff191b"/><stop offset="0.975" stop-color="#ff0002"/><stop offset="1.012" stop-color="#ff0000"/></linearGradient><linearGradient id="zb60" gradientUnits="userSpaceOnUse" x1="1290.83" x2="1733.7" y1="0" y2="0"><stop offset="0.000" stop-color="#00f5ff"/><stop offset="0.145" stop-color="#00f3ff"/><stop offset="0.163" stop-color="#08f3ff"/><stop offset="0.235" stop-color="#62f2ff"/><stop offset="0.289" stop-color="#b1f0ff"/><stop offset="0.325" stop-color="#ecefff"/><stop offset="0.343" stop-color="#ffe3f2"/><stop offset="0.379" stop-color="#ffb3c0"/><stop offset="0.434" stop-color="#ff838d"/><stop offset="0.488" stop-color="#ff626b"/><stop offset="0.560" stop-color="#ff454c"/><stop offset="0.650" stop-color="#ff2c32"/><stop offset="0.759" stop-color="#ff171d"/><stop offset="0.939" stop-color="#ff0206"/><stop offset="1.012" stop-color="#ff0000"/></linearGradient><linearGradient id="zb61" gradientUnits="userSpaceOnUse" x1="1290.83" x2="1733.7" y1="0" y2="0"><stop offset="0.000" stop-color="#00eeff"/><stop offset="0.145" stop-color="#00ebff"/><stop offset="0.163" stop-color="#0beaff"/><stop offset="0.235" stop-color="#64e8ff"/><stop offset="0.289" stop-color="#b1e6ff"/><stop offset="0.325" stop-color="#ece5ff"/><stop offset="0.343" stop-color="#ffd9f3"/><stop offset="0.361" stop-color="#ffc1d8"/><stop offset="0.397" stop-color="#ff9aae"/><stop offset="0.434" stop-color="#ff7d8f"/><stop offset="0.488" stop-color="#ff5e6d"/><stop offset="0.560" stop-color="#ff414e"/><stop offset="0.650" stop-color="#ff2933"/><stop offset="0.795" stop-color="#ff1018"/><stop offset="0.957" stop-color="#ff0006"/><stop offset="1.012" stop-color="#ff0001"/></linearGradient><linearGradient id="zb62" gradientUnits="userSpaceOnUse" x1="1290.83" x2="1733.7" y1="0" y2="0"><stop offset="0.000" stop-color="#00e7ff"/><stop offset="0.145" stop-color="#00e2ff"/><stop offset="0.163" stop-color="#0ee2ff"/><stop offset="0.235" stop-color="#65dfff"/><stop offset="0.289" stop-color="#b2dcff"/><stop offset="0.325" stop-color="#ebdaff"/><stop offset="0.343" stop-color="#ffd0f4"/><stop offset="0.361" stop-color="#ffb8d9"/><stop offset="0.397" stop-color="#ff94b0"/><stop offset="0.434" stop-color="#ff7891"/><stop offset="0.506" stop-color="#ff5265"/><stop offset="0.596" stop-color="#ff3343"/><stop offset="0.704" stop-color="#ff1c29"/><stop offset="0.849" stop-color="#ff0812"/><stop offset="0.957" stop-color="#ff0007"/><stop offset="1.012" stop-color="#ff0002"/></linearGradient><linearGradient id="zb63" gradientUnits="userSpaceOnUse" x1="1290.83" x2="1733.7" y1="0" y2="0"><stop offset="0.000" stop-color="#00e0ff"/><stop offset="0.145" stop-color="#00daff"/><stop offset="0.181" stop-color="#25d9ff"/><stop offset="0.253" stop-color="#7fd5ff"/><stop offset="0.307" stop-color="#ced2ff"/><stop offset="0.325" stop-color="#ebd1ff"/><stop offset="0.343" stop-color="#ffc7f5"/><stop offset="0.379" stop-color="#ff9dc4"/><stop offset="0.415" stop-color="#ff7fa1"/><stop offset="0.470" stop-color="#ff5e7a"/><stop offset="0.542" stop-color="#ff4057"/><stop offset="0.650" stop-color="#ff2436"/><stop offset="0.777" stop-color="#ff0f1d"/><stop offset="0.921" stop-color="#ff000b"/><stop offset="1.012" stop-color="#ff0003"/></linearGradient><linearGradient id="zb64" gradientUnits="userSpaceOnUse" x1="1290.83" x2="1733.7" y1="0" y2="0"><stop offset="0.000" stop-color="#00d9ff"/><stop offset="0.145" stop-color="#00d2ff"/><stop offset="0.217" stop-color="#52ceff"/><stop offset="0.271" stop-color="#99cbff"/><stop offset="0.325" stop-color="#ebc7ff"/><stop offset="0.343" stop-color="#ffbef6"/><stop offset="0.379" stop-color="#ff96c6"/><stop offset="0.415" stop-color="#ff79a2"/><stop offset="0.470" stop-color="#ff5a7c"/><stop offset="0.542" stop-color="#ff3d59"/><stop offset="0.650" stop-color="#ff2137"/><stop offset="0.813" stop-color="#ff0819"/><stop offset="0.921" stop-color="#ff000c"/><stop offset="1.012" stop-color="#ff0004"/></linearGradient><linearGradient id="zb65" gradientUnits="userSpaceOnUse" x1="1290.83" x2="1733.7" y1="0" y2="0"><stop offset="0.000" stop-color="#00d2ff"/><stop offset="0.126" stop-color="#00ccff"/><stop offset="0.145" stop-color="#03cbff"/><stop offset="0.217" stop-color="#54c6ff"/><stop offset="0.271" stop-color="#9ac2ff"/><stop offset="0.325" stop-color="#eabeff"/><stop offset="0.343" stop-color="#ffb6f7"/><stop offset="0.379" stop-color="#ff90c7"/><stop offset="0.415" stop-color="#ff74a4"/><stop offset="0.470" stop-color="#ff557d"/><stop offset="0.542" stop-color="#ff395a"/><stop offset="0.632" stop-color="#ff223d"/><stop offset="0.759" stop-color="#ff0d23"/><stop offset="0.885" stop-color="#ff0011"/><stop offset="1.012" stop-color="#ff0005"/></linearGradient><linearGradient id="zb66" gradientUnits="userSpaceOnUse" x1="1290.83" x2="1733.7" y1="0" y2="0"><stop offset="0.000" stop-color="#00ccff"/><stop offset="0.126" stop-color="#00c5ff"/><stop offset="0.145" stop-color="#06c3ff"/><stop offset="0.217" stop-color="#56beff"/><stop offset="0.289" stop-color="#b4b8ff"/><stop offset="0.325" stop-color="#eab5ff"/><stop offset="0.343" stop-color="#ffadf7"/><stop offset="0.379" stop-color="#ff89c8"/><stop offset="0.415" stop-color="#ff6ea5"/><stop offset="0.470" stop-color="#ff517f"/><stop offset="0.542" stop-color="#ff365c"/><stop offset="0.632" stop-color="#ff1f3f"/><stop offset="0.759" stop-color="#ff0b24"/><stop offset="0.867" stop-color="#ff0014"/><stop offset="1.012" stop-color="#ff0006"/></linearGradient><linearGradient id="zb67" gradientUnits="userSpaceOnUse" x1="1290.83" x2="1733.7" y1="0" y2="0"><stop offset="0.000" stop-color="#00c5ff"/><stop offset="0.126" stop-color="#00bdff"/><stop offset="0.145" stop-color="#08bcff"/><stop offset="0.217" stop-color="#57b6ff"/><stop offset="0.289" stop-color="#b4b0ff"/><stop offset="0.325" stop-color="#e9acff"/><stop offset="0.343" stop-color="#ffa5f8"/><stop offset="0.379" stop-color="#ff83c9"/><stop offset="0.415" stop-color="#ff69a6"/><stop offset="0.488" stop-color="#ff4576"/><stop offset="0.560" stop-color="#ff2e56"/><stop offset="0.686" stop-color="#ff1333"/><stop offset="0.849" stop-color="#ff0018"/><stop offset="1.012" stop-color="#ff0007"/></linearGradient><linearGradient id="zb68" gradientUnits="userSpaceOnUse" x1="1290.83" x2="1733.7" y1="0" y2="0"><stop offset="0.000" stop-color="#00bfff"/><stop offset="0.126" stop-color="#00b6ff"/><stop offset="0.145" stop-color="#0bb5ff"/><stop offset="0.217" stop-color="#59afff"/><stop offset="0.289" stop-color="#b5a8ff"/><stop offset="0.325" stop-color="#e9a3ff"/><stop offset="0.343" stop-color="#ff9df9"/><stop offset="0.379" stop-color="#ff7cca"/><stop offset="0.434" stop-color="#ff599a"/><stop offset="0.506" stop-color="#ff3b6e"/><stop offset="0.596" stop-color="#ff224c"/><stop offset="0.704" stop-color="#ff0e30"/><stop offset="0.831" stop-color="#ff001b"/><stop offset="1.012" stop-color="#ff0008"/></linearGradient><linearGradient id="zb69" gradientUnits="userSpaceOnUse" x1="1290.83" x2="1733.7" y1="0" y2="0"><stop offset="0.000" stop-color="#00b9ff"/><stop offset="0.126" stop-color="#00b0ff"/><stop offset="0.145" stop-color="#0daeff"/><stop offset="0.217" stop-color="#5ba7ff"/><stop offset="0.289" stop-color="#b5a0ff"/><stop offset="0.325" stop-color="#e99bff"/><stop offset="0.343" stop-color="#ff96fa"/><stop offset="0.379" stop-color="#ff76cc"/><stop offset="0.415" stop-color="#ff5ea9"/><stop offset="0.470" stop-color="#ff4483"/><stop offset="0.542" stop-color="#ff2c60"/><stop offset="0.650" stop-color="#ff143e"/><stop offset="0.795" stop-color="#ff0121"/><stop offset="1.012" stop-color="#ff0008"/></linearGradient><linearGradient id="zb70" gradientUnits="userSpaceOnUse" x1="1290.83" x2="1733.7" y1="0" y2="0"><stop offset="0.000" stop-color="#00b3ff"/><stop offset="0.126" stop-color="#00a9ff"/><stop offset="0.199" stop-color="#48a2ff"/><stop offset="0.271" stop-color="#9e9aff"/><stop offset="0.325" stop-color="#e893ff"/><stop offset="0.343" stop-color="#ff8efb"/><stop offset="0.379" stop-color="#ff70cd"/><stop offset="0.415" stop-color="#ff59aa"/><stop offset="0.488" stop-color="#ff397a"/><stop offset="0.560" stop-color="#ff245b"/><stop offset="0.650" stop-color="#ff123f"/><stop offset="0.795" stop-color="#ff0023"/><stop offset="0.975" stop-color="#ff000d"/><stop offset="1.012" stop-color="#ff0009"/></linearGradient><linearGradient id="zb71" gradientUnits="userSpaceOnUse" x1="1290.83" x2="1733.7" y1="0" y2="0"><stop offset="0.000" stop-color="#00adff"/><stop offset="0.126" stop-color="#01a3ff"/><stop offset="0.199" stop-color="#4a9bff"/><stop offset="0.253" stop-color="#8895ff"/><stop offset="0.325" stop-color="#e88cff"/><stop offset="0.343" stop-color="#ff87fb"/><stop offset="0.379" stop-color="#ff6ace"/><stop offset="0.434" stop-color="#ff4b9e"/><stop offset="0.488" stop-color="#ff367c"/><stop offset="0.560" stop-color="#ff215c"/><stop offset="0.668" stop-color="#ff0d3c"/><stop offset="0.777" stop-color="#ff0027"/><stop offset="0.957" stop-color="#ff000f"/><stop offset="1.012" stop-color="#ff000a"/></linearGradient><linearGradient id="zb72" gradientUnits="userSpaceOnUse" x1="1290.83" x2="1733.7" y1="0" y2="0"><stop offset="0.000" stop-color="#00a7ff"/><stop offset="0.108" stop-color="#009eff"/><stop offset="0.126" stop-color="#039cff"/><stop offset="0.199" stop-color="#4b95ff"/><stop offset="0.271" stop-color="#9f8cff"/><stop offset="0.325" stop-color="#e884ff"/><stop offset="0.343" stop-color="#ff80fc"/><stop offset="0.379" stop-color="#ff64cf"/><stop offset="0.434" stop-color="#ff479f"/><stop offset="0.488" stop-color="#ff327d"/><stop offset="0.560" stop-color="#ff1e5d"/><stop offset="0.668" stop-color="#ff0b3d"/><stop offset="0.759" stop-color="#ff002b"/><stop offset="0.939" stop-color="#ff0012"/><stop offset="1.012" stop-color="#ff000b"/></linearGradient><linearGradient id="zb73" gradientUnits="userSpaceOnUse" x1="1290.83" x2="1733.7" y1="0" y2="0"><stop offset="0.000" stop-color="#00a2ff"/><stop offset="0.108" stop-color="#0098ff"/><stop offset="0.126" stop-color="#0696ff"/><stop offset="0.199" stop-color="#4d8eff"/><stop offset="0.271" stop-color="#a085ff"/><stop offset="0.343" stop-color="#ff79fd"/><stop offset="0.379" stop-color="#ff5ed0"/><stop offset="0.434" stop-color="#ff42a0"/><stop offset="0.506" stop-color="#ff2975"/><stop offset="0.596" stop-color="#ff1452"/><stop offset="0.704" stop-color="#ff0436"/><stop offset="0.777" stop-color="#ff0029"/><stop offset="0.975" stop-color="#ff000f"/><stop offset="1.012" stop-color="#ff000c"/></linearGradient><linearGradient id="zb74" gradientUnits="userSpaceOnUse" x1="1290.83" x2="1733.7" y1="0" y2="0"><stop offset="0.000" stop-color="#009cff"/><stop offset="0.108" stop-color="#0092ff"/><stop offset="0.126" stop-color="#0890ff"/><stop offset="0.217" stop-color="#6285ff"/><stop offset="0.289" stop-color="#b77bff"/><stop offset="0.343" stop-color="#ff72fd"/><stop offset="0.379" stop-color="#ff59d1"/><stop offset="0.415" stop-color="#ff46af"/><stop offset="0.470" stop-color="#ff308a"/><stop offset="0.542" stop-color="#ff1c67"/><stop offset="0.632" stop-color="#ff0b49"/><stop offset="0.723" stop-color="#ff0034"/><stop offset="0.903" stop-color="#ff0018"/><stop offset="1.012" stop-color="#ff000d"/></linearGradient><linearGradient id="zb75" gradientUnits="userSpaceOnUse" x1="1290.83" x2="1733.7" y1="0" y2="0"><stop offset="0.000" stop-color="#0097ff"/><stop offset="0.108" stop-color="#008cff"/><stop offset="0.126" stop-color="#0b8aff"/><stop offset="0.199" stop-color="#5081ff"/><stop offset="0.271" stop-color="#a177ff"/><stop offset="0.343" stop-color="#ff6bfe"/><stop offset="0.379" stop-color="#ff53d2"/><stop offset="0.415" stop-color="#ff41b1"/><stop offset="0.470" stop-color="#ff2d8b"/><stop offset="0.542" stop-color="#ff1968"/><stop offset="0.650" stop-color="#ff0645"/><stop offset="0.723" stop-color="#ff0035"/><stop offset="0.903" stop-color="#ff0019"/><stop offset="1.012" stop-color="#ff000e"/></linearGradient><linearGradient id="zb76" gradientUnits="userSpaceOnUse" x1="1290.83" x2="1733.7" y1="0" y2="0"><stop offset="0.000" stop-color="#0092ff"/><stop offset="0.108" stop-color="#0086ff"/><stop offset="0.145" stop-color="#1d82ff"/><stop offset="0.235" stop-color="#7876ff"/><stop offset="0.307" stop-color="#cf6bff"/><stop offset="0.343" stop-color="#ff65ff"/><stop offset="0.379" stop-color="#ff4ed3"/><stop offset="0.415" stop-color="#ff3cb2"/><stop offset="0.488" stop-color="#ff2482"/><stop offset="0.560" stop-color="#ff1362"/><stop offset="0.668" stop-color="#ff0242"/><stop offset="0.813" stop-color="#ff0026"/><stop offset="1.012" stop-color="#ff000f"/></linearGradient><linearGradient id="zb77" gradientUnits="userSpaceOnUse" x1="1290.83" x2="1733.7" y1="0" y2="0"><stop offset="0.000" stop-color="#008cff"/><stop offset="0.108" stop-color="#0081ff"/><stop offset="0.181" stop-color="#4178ff"/><stop offset="0.253" stop-color="#8e6eff"/><stop offset="0.325" stop-color="#e662ff"/><stop offset="0.343" stop-color="#ff5eff"/><stop offset="0.379" stop-color="#ff49d4"/><stop offset="0.415" stop-color="#ff38b3"/><stop offset="0.470" stop-color="#ff258e"/><stop offset="0.542" stop-color="#ff136b"/><stop offset="0.632" stop-color="#ff044c"/><stop offset="0.704" stop-color="#ff003b"/><stop offset="0.885" stop-color="#ff001d"/><stop offset="1.012" stop-color="#ff0010"/></linearGradient><linearGradient id="zb78" gradientUnits="userSpaceOnUse" x1="1290.83" x2="1733.7" y1="0" y2="0"><stop offset="0.000" stop-color="#0087ff"/><stop offset="0.108" stop-color="#027bff"/><stop offset="0.181" stop-color="#4372ff"/><stop offset="0.271" stop-color="#a365ff"/><stop offset="0.343" stop-color="#fe58ff"/><stop offset="0.379" stop-color="#ff44d5"/><stop offset="0.434" stop-color="#ff2da6"/><stop offset="0.506" stop-color="#ff187c"/><stop offset="0.596" stop-color="#ff0758"/><stop offset="0.668" stop-color="#ff0044"/><stop offset="0.813" stop-color="#ff0028"/><stop offset="1.012" stop-color="#ff0010"/></linearGradient><linearGradient id="zb79" gradientUnits="userSpaceOnUse" x1="1290.83" x2="1733.7" y1="0" y2="0"><stop offset="0.000" stop-color="#0082ff"/><stop offset="0.090" stop-color="#0078ff"/><stop offset="0.108" stop-color="#0476ff"/><stop offset="0.199" stop-color="#566aff"/><stop offset="0.271" stop-color="#a45fff"/><stop offset="0.343" stop-color="#fd52ff"/><stop offset="0.379" stop-color="#ff3ed6"/><stop offset="0.415" stop-color="#ff2fb5"/><stop offset="0.470" stop-color="#ff1e90"/><stop offset="0.542" stop-color="#ff0e6d"/><stop offset="0.632" stop-color="#ff004f"/><stop offset="0.777" stop-color="#ff002f"/><stop offset="0.994" stop-color="#ff0013"/><stop offset="1.012" stop-color="#ff0011"/></linearGradient><linearGradient id="zb80" gradientUnits="userSpaceOnUse" x1="1290.83" x2="1733.7" y1="0" y2="0"><stop offset="0.000" stop-color="#007dff"/><stop offset="0.090" stop-color="#0073ff"/><stop offset="0.108" stop-color="#0671ff"/><stop offset="0.181" stop-color="#4667ff"/><stop offset="0.271" stop-color="#a459ff"/><stop offset="0.343" stop-color="#fd4cff"/><stop offset="0.397" stop-color="#ff32c6"/><stop offset="0.452" stop-color="#ff1f9c"/><stop offset="0.524" stop-color="#ff0e76"/><stop offset="0.614" stop-color="#ff0055"/><stop offset="0.759" stop-color="#ff0033"/><stop offset="0.957" stop-color="#ff0018"/><stop offset="1.012" stop-color="#ff0012"/></linearGradient><linearGradient id="zb81" gradientUnits="userSpaceOnUse" x1="1290.83" x2="1733.7" y1="0" y2="0"><stop offset="0.000" stop-color="#0079ff"/><stop offset="0.090" stop-color="#006eff"/><stop offset="0.108" stop-color="#086cff"/><stop offset="0.199" stop-color="#595fff"/><stop offset="0.271" stop-color="#a553ff"/><stop offset="0.343" stop-color="#fc46ff"/><stop offset="0.397" stop-color="#ff2dc7"/><stop offset="0.434" stop-color="#ff21aa"/><stop offset="0.506" stop-color="#ff0f80"/><stop offset="0.596" stop-color="#ff005c"/><stop offset="0.704" stop-color="#ff003f"/><stop offset="0.885" stop-color="#ff0021"/><stop offset="1.012" stop-color="#ff0013"/></linearGradient><linearGradient id="zb82" gradientUnits="userSpaceOnUse" x1="1290.83" x2="1733.7" y1="0" y2="0"><stop offset="0.000" stop-color="#0074ff"/><stop offset="0.090" stop-color="#0069ff"/><stop offset="0.108" stop-color="#0a67ff"/><stop offset="0.217" stop-color="#6c57ff"/><stop offset="0.289" stop-color="#ba4bff"/><stop offset="0.343" stop-color="#fc40ff"/><stop offset="0.397" stop-color="#ff29c8"/><stop offset="0.434" stop-color="#ff1dab"/><stop offset="0.506" stop-color="#ff0c81"/><stop offset="0.578" stop-color="#ff0063"/><stop offset="0.704" stop-color="#ff0040"/><stop offset="0.885" stop-color="#ff0022"/><stop offset="1.012" stop-color="#ff0014"/></linearGradient><linearGradient id="zb83" gradientUnits="userSpaceOnUse" x1="1290.83" x2="1733.7" y1="0" y2="0"><stop offset="0.000" stop-color="#006fff"/><stop offset="0.090" stop-color="#0064ff"/><stop offset="0.126" stop-color="#1b60ff"/><stop offset="0.217" stop-color="#6e52ff"/><stop offset="0.289" stop-color="#ba45ff"/><stop offset="0.343" stop-color="#fb3bff"/><stop offset="0.379" stop-color="#ff2bda"/><stop offset="0.434" stop-color="#ff19ac"/><stop offset="0.506" stop-color="#ff0982"/><stop offset="0.560" stop-color="#ff006b"/><stop offset="0.668" stop-color="#ff004a"/><stop offset="0.813" stop-color="#ff002d"/><stop offset="1.012" stop-color="#ff0015"/></linearGradient><linearGradient id="zb84" gradientUnits="userSpaceOnUse" x1="1290.83" x2="1733.7" y1="0" y2="0"><stop offset="0.000" stop-color="#006bff"/><stop offset="0.090" stop-color="#0060ff"/><stop offset="0.181" stop-color="#4c53ff"/><stop offset="0.271" stop-color="#a643ff"/><stop offset="0.343" stop-color="#fb35ff"/><stop offset="0.379" stop-color="#ff27da"/><stop offset="0.434" stop-color="#ff16ad"/><stop offset="0.506" stop-color="#ff0683"/><stop offset="0.560" stop-color="#ff006c"/><stop offset="0.668" stop-color="#ff004b"/><stop offset="0.813" stop-color="#ff002e"/><stop offset="1.012" stop-color="#ff0016"/></linearGradient><linearGradient id="zb85" gradientUnits="userSpaceOnUse" x1="1290.83" x2="1733.7" y1="0" y2="0"><stop offset="0.000" stop-color="#0066ff"/><stop offset="0.090" stop-color="#025bff"/><stop offset="0.181" stop-color="#4e4eff"/><stop offset="0.271" stop-color="#a73eff"/><stop offset="0.343" stop-color="#fa30ff"/><stop offset="0.361" stop-color="#ff29ee"/><stop offset="0.397" stop-color="#ff1cca"/><stop offset="0.452" stop-color="#ff0ea2"/><stop offset="0.524" stop-color="#ff007c"/><stop offset="0.614" stop-color="#ff005b"/><stop offset="0.741" stop-color="#ff003c"/><stop offset="0.921" stop-color="#ff0020"/><stop offset="1.012" stop-color="#ff0016"/></linearGradient><linearGradient id="zb86" gradientUnits="userSpaceOnUse" x1="1290.83" x2="1733.7" y1="0" y2="0"><stop offset="0.000" stop-color="#0062ff"/><stop offset="0.072" stop-color="#0059ff"/><stop offset="0.090" stop-color="#0456ff"/><stop offset="0.181" stop-color="#4f49ff"/><stop offset="0.271" stop-color="#a739ff"/><stop offset="0.343" stop-color="#fa2bff"/><stop offset="0.361" stop-color="#ff24ef"/><stop offset="0.397" stop-color="#ff18cb"/><stop offset="0.452" stop-color="#ff0aa3"/><stop offset="0.506" stop-color="#ff0085"/><stop offset="0.596" stop-color="#ff0062"/><stop offset="0.704" stop-color="#ff0045"/><stop offset="0.849" stop-color="#ff002b"/><stop offset="1.012" stop-color="#ff0017"/></linearGradient><linearGradient id="zb87" gradientUnits="userSpaceOnUse" x1="1290.83" x2="1733.7" y1="0" y2="0"><stop offset="0.000" stop-color="#005eff"/><stop offset="0.072" stop-color="#0054ff"/><stop offset="0.090" stop-color="#0652ff"/><stop offset="0.181" stop-color="#5144ff"/><stop offset="0.253" stop-color="#9538ff"/><stop offset="0.343" stop-color="#f926ff"/><stop offset="0.361" stop-color="#ff1ff0"/><stop offset="0.397" stop-color="#ff14cc"/><stop offset="0.452" stop-color="#ff07a4"/><stop offset="0.488" stop-color="#ff0090"/><stop offset="0.560" stop-color="#ff0070"/><stop offset="0.668" stop-color="#ff004e"/><stop offset="0.831" stop-color="#ff002e"/><stop offset="1.012" stop-color="#ff0018"/></linearGradient><linearGradient id="zb88" gradientUnits="userSpaceOnUse" x1="1290.83" x2="1733.7" y1="0" y2="0"><stop offset="0.000" stop-color="#005aff"/><stop offset="0.072" stop-color="#0050ff"/><stop offset="0.090" stop-color="#084eff"/><stop offset="0.199" stop-color="#623dff"/><stop offset="0.289" stop-color="#bb2cff"/><stop offset="0.343" stop-color="#f921ff"/><stop offset="0.361" stop-color="#ff1bf0"/><stop offset="0.415" stop-color="#ff0bbe"/><stop offset="0.470" stop-color="#ff009b"/><stop offset="0.542" stop-color="#ff0078"/><stop offset="0.650" stop-color="#ff0054"/><stop offset="0.795" stop-color="#ff0035"/><stop offset="1.012" stop-color="#ff0019"/></linearGradient><linearGradient id="zb89" gradientUnits="userSpaceOnUse" x1="1290.83" x2="1733.7" y1="0" y2="0"><stop offset="0.000" stop-color="#0056ff"/><stop offset="0.072" stop-color="#004cff"/><stop offset="0.108" stop-color="#1847ff"/><stop offset="0.199" stop-color="#6338ff"/><stop offset="0.307" stop-color="#cf24ff"/><stop offset="0.343" stop-color="#f81cff"/><stop offset="0.361" stop-color="#ff16f1"/><stop offset="0.397" stop-color="#ff0cce"/><stop offset="0.452" stop-color="#ff00a6"/><stop offset="0.542" stop-color="#ff0079"/><stop offset="0.650" stop-color="#ff0055"/><stop offset="0.795" stop-color="#ff0036"/><stop offset="0.975" stop-color="#ff001e"/><stop offset="1.012" stop-color="#ff001a"/></linearGradient><linearGradient id="zb90" gradientUnits="userSpaceOnUse" x1="1290.83" x2="1733.7" y1="0" y2="0"><stop offset="0.000" stop-color="#0051ff"/><stop offset="0.072" stop-color="#0048ff"/><stop offset="0.163" stop-color="#453aff"/><stop offset="0.271" stop-color="#a926ff"/><stop offset="0.343" stop-color="#f817ff"/><stop offset="0.361" stop-color="#ff12f2"/><stop offset="0.397" stop-color="#ff08cf"/><stop offset="0.434" stop-color="#ff00b3"/><stop offset="0.506" stop-color="#ff008a"/><stop offset="0.614" stop-color="#ff0060"/><stop offset="0.741" stop-color="#ff0041"/><stop offset="0.903" stop-color="#ff0027"/><stop offset="1.012" stop-color="#ff001b"/></linearGradient><linearGradient id="zb91" gradientUnits="userSpaceOnUse" x1="1290.83" x2="1733.7" y1="0" y2="0"><stop offset="0.000" stop-color="#004dff"/><stop offset="0.072" stop-color="#0044ff"/><stop offset="0.181" stop-color="#5633ff"/><stop offset="0.289" stop-color="#bc1eff"/><stop offset="0.343" stop-color="#f712ff"/><stop offset="0.361" stop-color="#ff0ef2"/><stop offset="0.415" stop-color="#ff01c1"/><stop offset="0.470" stop-color="#ff009e"/><stop offset="0.542" stop-color="#ff007b"/><stop offset="0.650" stop-color="#ff0057"/><stop offset="0.795" stop-color="#ff0038"/><stop offset="1.012" stop-color="#ff001b"/></linearGradient><linearGradient id="zb92" gradientUnits="userSpaceOnUse" x1="1290.83" x2="1733.7" y1="0" y2="0"><stop offset="0.000" stop-color="#004aff"/><stop offset="0.072" stop-color="#0240ff"/><stop offset="0.181" stop-color="#572eff"/><stop offset="0.271" stop-color="#aa1eff"/><stop offset="0.343" stop-color="#f70eff"/><stop offset="0.361" stop-color="#ff09f3"/><stop offset="0.415" stop-color="#ff00c2"/><stop offset="0.470" stop-color="#ff009f"/><stop offset="0.542" stop-color="#ff007c"/><stop offset="0.650" stop-color="#ff0058"/><stop offset="0.795" stop-color="#ff0039"/><stop offset="0.994" stop-color="#ff001e"/><stop offset="1.012" stop-color="#ff001c"/></linearGradient><linearGradient id="zb93" gradientUnits="userSpaceOnUse" x1="1290.83" x2="1733.7" y1="0" y2="0"><stop offset="0.000" stop-color="#0046ff"/><stop offset="0.054" stop-color="#003eff"/><stop offset="0.072" stop-color="#043cff"/><stop offset="0.181" stop-color="#582aff"/><stop offset="0.271" stop-color="#ab19ff"/><stop offset="0.343" stop-color="#f70aff"/><stop offset="0.361" stop-color="#ff05f3"/><stop offset="0.397" stop-color="#ff00d1"/><stop offset="0.452" stop-color="#ff00aa"/><stop offset="0.542" stop-color="#ff007d"/><stop offset="0.650" stop-color="#ff0059"/><stop offset="0.795" stop-color="#ff003a"/><stop offset="0.994" stop-color="#ff001f"/><stop offset="1.012" stop-color="#ff001d"/></linearGradient><linearGradient id="zb94" gradientUnits="userSpaceOnUse" x1="1290.83" x2="1733.7" y1="0" y2="0"><stop offset="0.000" stop-color="#0042ff"/><stop offset="0.054" stop-color="#003aff"/><stop offset="0.072" stop-color="#0638ff"/><stop offset="0.181" stop-color="#5a26ff"/><stop offset="0.271" stop-color="#ab15ff"/><stop offset="0.343" stop-color="#f605ff"/><stop offset="0.361" stop-color="#ff01f4"/><stop offset="0.415" stop-color="#ff00c4"/><stop offset="0.470" stop-color="#ff00a1"/><stop offset="0.542" stop-color="#ff007e"/><stop offset="0.650" stop-color="#ff005a"/><stop offset="0.795" stop-color="#ff003b"/><stop offset="0.975" stop-color="#ff0022"/><stop offset="1.012" stop-color="#ff001e"/></linearGradient><linearGradient id="zb95" gradientUnits="userSpaceOnUse" x1="1290.83" x2="1733.7" y1="0" y2="0"><stop offset="0.000" stop-color="#003eff"/><stop offset="0.054" stop-color="#0037ff"/><stop offset="0.072" stop-color="#0834ff"/><stop offset="0.199" stop-color="#6a1fff"/><stop offset="0.289" stop-color="#bd0dff"/><stop offset="0.343" stop-color="#f601ff"/><stop offset="0.361" stop-color="#ff00f5"/><stop offset="0.415" stop-color="#ff00c5"/><stop offset="0.470" stop-color="#ff00a2"/><stop offset="0.542" stop-color="#ff007f"/><stop offset="0.650" stop-color="#ff005b"/><stop offset="0.795" stop-color="#ff003c"/><stop offset="0.975" stop-color="#ff0022"/><stop offset="1.012" stop-color="#ff001f"/></linearGradient><linearGradient id="zb96" gradientUnits="userSpaceOnUse" x1="1290.83" x2="1733.7" y1="0" y2="0"><stop offset="0.000" stop-color="#003bff"/><stop offset="0.054" stop-color="#0033ff"/><stop offset="0.108" stop-color="#242bff"/><stop offset="0.217" stop-color="#7a18ff"/><stop offset="0.307" stop-color="#cf05ff"/><stop offset="0.343" stop-color="#f500ff"/><stop offset="0.361" stop-color="#ff00f5"/><stop offset="0.415" stop-color="#ff00c6"/><stop offset="0.470" stop-color="#ff00a3"/><stop offset="0.542" stop-color="#ff0080"/><stop offset="0.650" stop-color="#ff005c"/><stop offset="0.795" stop-color="#ff003d"/><stop offset="1.012" stop-color="#ff001f"/></linearGradient><linearGradient id="zb97" gradientUnits="userSpaceOnUse" x1="1290.83" x2="1733.7" y1="0" y2="0"><stop offset="0.000" stop-color="#0037ff"/><stop offset="0.054" stop-color="#002fff"/><stop offset="0.163" stop-color="#4e1eff"/><stop offset="0.271" stop-color="#ac09ff"/><stop offset="0.325" stop-color="#e200ff"/><stop offset="0.343" stop-color="#f500ff"/><stop offset="0.361" stop-color="#ff00f6"/><stop offset="0.415" stop-color="#ff00c6"/><stop offset="0.488" stop-color="#ff009a"/><stop offset="0.578" stop-color="#ff0073"/><stop offset="0.704" stop-color="#ff0050"/><stop offset="0.867" stop-color="#ff0032"/><stop offset="1.012" stop-color="#ff0020"/></linearGradient><linearGradient id="zb98" gradientUnits="userSpaceOnUse" x1="1290.83" x2="1733.7" y1="0" y2="0"><stop offset="0.000" stop-color="#0034ff"/><stop offset="0.054" stop-color="#012cff"/><stop offset="0.163" stop-color="#501aff"/><stop offset="0.253" stop-color="#9c09ff"/><stop offset="0.307" stop-color="#cf00ff"/><stop offset="0.343" stop-color="#f500ff"/><stop offset="0.361" stop-color="#ff00f6"/><stop offset="0.415" stop-color="#ff00c7"/><stop offset="0.488" stop-color="#ff009b"/><stop offset="0.578" stop-color="#ff0074"/><stop offset="0.704" stop-color="#ff0051"/><stop offset="0.867" stop-color="#ff0033"/><stop offset="1.012" stop-color="#ff0021"/></linearGradient><linearGradient id="zb99" gradientUnits="userSpaceOnUse" x1="1290.83" x2="1733.7" y1="0" y2="0"><stop offset="0.000" stop-color="#0030ff"/><stop offset="0.054" stop-color="#0328ff"/><stop offset="0.163" stop-color="#5116ff"/><stop offset="0.271" stop-color="#ad01ff"/><stop offset="0.343" stop-color="#f400ff"/><stop offset="0.361" stop-color="#ff00f7"/><stop offset="0.415" stop-color="#ff00c8"/><stop offset="0.488" stop-color="#ff009c"/><stop offset="0.578" stop-color="#ff0075"/><stop offset="0.704" stop-color="#ff0052"/><stop offset="0.849" stop-color="#ff0036"/><stop offset="1.012" stop-color="#ff0022"/></linearGradient><linearGradient id="zb100" gradientUnits="userSpaceOnUse" x1="1290.83" x2="1733.7" y1="0" y2="0"><stop offset="0.000" stop-color="#002dff"/><stop offset="0.036" stop-color="#0027ff"/><stop offset="0.054" stop-color="#0425ff"/><stop offset="0.181" stop-color="#600fff"/><stop offset="0.271" stop-color="#ad00ff"/><stop offset="0.343" stop-color="#f400ff"/><stop offset="0.361" stop-color="#ff00f7"/><stop offset="0.415" stop-color="#ff00c9"/><stop offset="0.488" stop-color="#ff009d"/><stop offset="0.578" stop-color="#ff0076"/><stop offset="0.723" stop-color="#ff004e"/><stop offset="0.921" stop-color="#ff002d"/><stop offset="1.012" stop-color="#ff0022"/></linearGradient><linearGradient id="zb101" gradientUnits="userSpaceOnUse" x1="1290.83" x2="1733.7" y1="0" y2="0"><stop offset="0.000" stop-color="#0029ff"/><stop offset="0.036" stop-color="#0024ff"/><stop offset="0.054" stop-color="#0621ff"/><stop offset="0.181" stop-color="#610cff"/><stop offset="0.253" stop-color="#9e00ff"/><stop offset="0.343" stop-color="#f300ff"/><stop offset="0.361" stop-color="#ff00f8"/><stop offset="0.415" stop-color="#ff00ca"/><stop offset="0.488" stop-color="#ff009e"/><stop offset="0.578" stop-color="#ff0077"/><stop offset="0.723" stop-color="#ff004f"/><stop offset="0.921" stop-color="#ff002e"/><stop offset="1.012" stop-color="#ff0023"/></linearGradient><linearGradient id="zb102" gradientUnits="userSpaceOnUse" x1="1290.83" x2="1733.7" y1="0" y2="0"><stop offset="0.000" stop-color="#0026ff"/><stop offset="0.036" stop-color="#0021ff"/><stop offset="0.072" stop-color="#141bff"/><stop offset="0.181" stop-color="#6208ff"/><stop offset="0.253" stop-color="#9e00ff"/><stop offset="0.343" stop-color="#f300ff"/><stop offset="0.361" stop-color="#ff00f8"/><stop offset="0.415" stop-color="#ff00ca"/><stop offset="0.488" stop-color="#ff009f"/><stop offset="0.578" stop-color="#ff0078"/><stop offset="0.723" stop-color="#ff0050"/><stop offset="0.939" stop-color="#ff002c"/><stop offset="1.012" stop-color="#ff0024"/></linearGradient><linearGradient id="zb103" gradientUnits="userSpaceOnUse" x1="1290.83" x2="1733.7" y1="0" y2="0"><stop offset="0.000" stop-color="#0023ff"/><stop offset="0.036" stop-color="#001dff"/><stop offset="0.108" stop-color="#2e12ff"/><stop offset="0.217" stop-color="#8000ff"/><stop offset="0.307" stop-color="#d000ff"/><stop offset="0.343" stop-color="#f300ff"/><stop offset="0.361" stop-color="#ff00f9"/><stop offset="0.415" stop-color="#ff00cb"/><stop offset="0.488" stop-color="#ff009f"/><stop offset="0.596" stop-color="#ff0073"/><stop offset="0.741" stop-color="#ff004d"/><stop offset="0.939" stop-color="#ff002d"/><stop offset="1.012" stop-color="#ff0025"/></linearGradient><linearGradient id="zb104" gradientUnits="userSpaceOnUse" x1="1290.83" x2="1733.7" y1="0" y2="0"><stop offset="0.000" stop-color="#0020ff"/><stop offset="0.036" stop-color="#001aff"/><stop offset="0.145" stop-color="#4908ff"/><stop offset="0.217" stop-color="#8100ff"/><stop offset="0.325" stop-color="#e100ff"/><stop offset="0.343" stop-color="#f200ff"/><stop offset="0.361" stop-color="#ff00f9"/><stop offset="0.415" stop-color="#ff00cc"/><stop offset="0.488" stop-color="#ff00a0"/><stop offset="0.578" stop-color="#ff007a"/><stop offset="0.723" stop-color="#ff0052"/><stop offset="0.939" stop-color="#ff002e"/><stop offset="1.012" stop-color="#ff0026"/></linearGradient><linearGradient id="zb105" gradientUnits="userSpaceOnUse" x1="1290.83" x2="1733.7" y1="0" y2="0"><stop offset="0.000" stop-color="#001cff"/><stop offset="0.036" stop-color="#0117ff"/><stop offset="0.145" stop-color="#4a05ff"/><stop offset="0.199" stop-color="#7300ff"/><stop offset="0.307" stop-color="#d000ff"/><stop offset="0.343" stop-color="#f200ff"/><stop offset="0.361" stop-color="#ff00fa"/><stop offset="0.415" stop-color="#ff00cd"/><stop offset="0.488" stop-color="#ff00a1"/><stop offset="0.578" stop-color="#ff007b"/><stop offset="0.723" stop-color="#ff0053"/><stop offset="0.885" stop-color="#ff0036"/><stop offset="1.012" stop-color="#ff0026"/></linearGradient><linearGradient id="zb106" gradientUnits="userSpaceOnUse" x1="1290.83" x2="1733.7" y1="0" y2="0"><stop offset="0.000" stop-color="#0019ff"/><stop offset="0.036" stop-color="#0314ff"/><stop offset="0.145" stop-color="#4c02ff"/><stop offset="0.253" stop-color="#a000ff"/><stop offset="0.343" stop-color="#f200ff"/><stop offset="0.361" stop-color="#ff00fa"/><stop offset="0.415" stop-color="#ff00cd"/><stop offset="0.488" stop-color="#ff00a2"/><stop offset="0.578" stop-color="#ff007c"/><stop offset="0.723" stop-color="#ff0054"/><stop offset="0.867" stop-color="#ff003a"/><stop offset="1.012" stop-color="#ff0027"/></linearGradient><linearGradient id="zb107" gradientUnits="userSpaceOnUse" x1="1290.83" x2="1733.7" y1="0" y2="0"><stop offset="0.000" stop-color="#0016ff"/><stop offset="0.018" stop-color="#0014ff"/><stop offset="0.036" stop-color="#0511ff"/><stop offset="0.145" stop-color="#4d00ff"/><stop offset="0.253" stop-color="#a000ff"/><stop offset="0.343" stop-color="#f100ff"/><stop offset="0.361" stop-color="#ff00fb"/><stop offset="0.415" stop-color="#ff00ce"/><stop offset="0.488" stop-color="#ff00a3"/><stop offset="0.578" stop-color="#ff007d"/><stop offset="0.723" stop-color="#ff0055"/><stop offset="0.867" stop-color="#ff003a"/><stop offset="1.012" stop-color="#ff0028"/></linearGradient><linearGradient id="zb108" gradientUnits="userSpaceOnUse" x1="1290.83" x2="1733.7" y1="0" y2="0"><stop offset="0.000" stop-color="#0013ff"/><stop offset="0.018" stop-color="#0011ff"/><stop offset="0.036" stop-color="#060eff"/><stop offset="0.126" stop-color="#4100ff"/><stop offset="0.235" stop-color="#9200ff"/><stop offset="0.343" stop-color="#f100ff"/><stop offset="0.361" stop-color="#ff00fb"/><stop offset="0.415" stop-color="#ff00cf"/><stop offset="0.488" stop-color="#ff00a4"/><stop offset="0.560" stop-color="#ff0084"/><stop offset="0.686" stop-color="#ff005e"/><stop offset="0.831" stop-color="#ff0041"/><stop offset="1.012" stop-color="#ff0028"/></linearGradient><linearGradient id="zb109" gradientUnits="userSpaceOnUse" x1="1290.83" x2="1733.7" y1="0" y2="0"><stop offset="0.000" stop-color="#0010ff"/><stop offset="0.018" stop-color="#000eff"/><stop offset="0.072" stop-color="#1e05ff"/><stop offset="0.126" stop-color="#4200ff"/><stop offset="0.253" stop-color="#a100ff"/><stop offset="0.343" stop-color="#f100ff"/><stop offset="0.361" stop-color="#ff00fc"/><stop offset="0.415" stop-color="#ff00d0"/><stop offset="0.470" stop-color="#ff00ae"/><stop offset="0.560" stop-color="#ff0085"/><stop offset="0.668" stop-color="#ff0063"/><stop offset="0.831" stop-color="#ff0042"/><stop offset="1.012" stop-color="#ff0029"/></linearGradient><linearGradient id="zb110" gradientUnits="userSpaceOnUse" x1="1290.83" x2="1733.7" y1="0" y2="0"><stop offset="0.000" stop-color="#000dff"/><stop offset="0.018" stop-color="#000bff"/><stop offset="0.090" stop-color="#2b00ff"/><stop offset="0.235" stop-color="#9300ff"/><stop offset="0.343" stop-color="#f100ff"/><stop offset="0.361" stop-color="#ff00fc"/><stop offset="0.434" stop-color="#ff00c4"/><stop offset="0.506" stop-color="#ff009d"/><stop offset="0.596" stop-color="#ff007a"/><stop offset="0.723" stop-color="#ff0057"/><stop offset="0.957" stop-color="#ff0030"/><stop offset="1.012" stop-color="#ff002a"/></linearGradient><linearGradient id="zb111" gradientUnits="userSpaceOnUse" x1="1290.83" x2="1733.7" y1="0" y2="0"><stop offset="0.000" stop-color="#000bff"/><stop offset="0.018" stop-color="#0008ff"/><stop offset="0.090" stop-color="#2d00ff"/><stop offset="0.199" stop-color="#7800ff"/><stop offset="0.307" stop-color="#d000ff"/><stop offset="0.361" stop-color="#ff00fd"/><stop offset="0.415" stop-color="#ff00d1"/><stop offset="0.488" stop-color="#ff00a6"/><stop offset="0.596" stop-color="#ff007a"/><stop offset="0.741" stop-color="#ff0054"/><stop offset="0.939" stop-color="#ff0033"/><stop offset="1.012" stop-color="#ff002b"/></linearGradient><linearGradient id="zb112" gradientUnits="userSpaceOnUse" x1="1290.83" x2="1733.7" y1="0" y2="0"><stop offset="0.000" stop-color="#0008ff"/><stop offset="0.018" stop-color="#0205ff"/><stop offset="0.072" stop-color="#2300ff"/><stop offset="0.181" stop-color="#6c00ff"/><stop offset="0.289" stop-color="#c000ff"/><stop offset="0.361" stop-color="#ff00fd"/><stop offset="0.415" stop-color="#ff00d2"/><stop offset="0.488" stop-color="#ff00a7"/><stop offset="0.578" stop-color="#ff0081"/><stop offset="0.723" stop-color="#ff0059"/><stop offset="0.867" stop-color="#ff003e"/><stop offset="1.012" stop-color="#ff002b"/></linearGradient><linearGradient id="zb113" gradientUnits="userSpaceOnUse" x1="1290.83" x2="1733.7" y1="0" y2="0"><stop offset="0.000" stop-color="#0005ff"/><stop offset="0.018" stop-color="#0302ff"/><stop offset="0.145" stop-color="#5300ff"/><stop offset="0.253" stop-color="#a300ff"/><stop offset="0.361" stop-color="#ff00fe"/><stop offset="0.415" stop-color="#ff00d2"/><stop offset="0.488" stop-color="#ff00a8"/><stop offset="0.578" stop-color="#ff0082"/><stop offset="0.723" stop-color="#ff005a"/><stop offset="0.885" stop-color="#ff003c"/><stop offset="1.012" stop-color="#ff002c"/></linearGradient><linearGradient id="zb114" gradientUnits="userSpaceOnUse" x1="1290.83" x2="1733.7" y1="0" y2="0"><stop offset="0.000" stop-color="#0002ff"/><stop offset="0.018" stop-color="#0500ff"/><stop offset="0.145" stop-color="#5400ff"/><stop offset="0.253" stop-color="#a300ff"/><stop offset="0.361" stop-color="#ff00fe"/><stop offset="0.415" stop-color="#ff00d3"/><stop offset="0.488" stop-color="#ff00a9"/><stop offset="0.578" stop-color="#ff0083"/><stop offset="0.723" stop-color="#ff005b"/><stop offset="0.885" stop-color="#ff003d"/><stop offset="1.012" stop-color="#ff002d"/></linearGradient><linearGradient id="zb115" gradientUnits="userSpaceOnUse" x1="1290.83" x2="1733.7" y1="0" y2="0"><stop offset="0.000" stop-color="#0000ff"/><stop offset="0.018" stop-color="#0600ff"/><stop offset="0.163" stop-color="#6100ff"/><stop offset="0.271" stop-color="#b200ff"/><stop offset="0.361" stop-color="#ff00fe"/><stop offset="0.434" stop-color="#ff00c8"/><stop offset="0.506" stop-color="#ff00a1"/><stop offset="0.596" stop-color="#ff007e"/><stop offset="0.704" stop-color="#ff0060"/><stop offset="0.849" stop-color="#ff0044"/><stop offset="1.012" stop-color="#ff002e"/></linearGradient><linearGradient id="zb116" gradientUnits="userSpaceOnUse" x1="1290.83" x2="1733.7" y1="0" y2="0"><stop offset="0.000" stop-color="#0000ff"/><stop offset="0.072" stop-color="#2800ff"/><stop offset="0.199" stop-color="#7c00ff"/><stop offset="0.307" stop-color="#d000ff"/><stop offset="0.361" stop-color="#ff00ff"/><stop offset="0.415" stop-color="#ff00d4"/><stop offset="0.506" stop-color="#ff00a2"/><stop offset="0.596" stop-color="#ff007f"/><stop offset="0.723" stop-color="#ff005c"/><stop offset="0.903" stop-color="#ff003c"/><stop offset="1.012" stop-color="#ff002e"/></linearGradient><linearGradient id="zb117" gradientUnits="userSpaceOnUse" x1="1290.83" x2="1733.7" y1="0" y2="0"><stop offset="0.000" stop-color="#0000ff"/><stop offset="0.108" stop-color="#4000ff"/><stop offset="0.217" stop-color="#8a00ff"/><stop offset="0.325" stop-color="#df00ff"/><stop offset="0.361" stop-color="#ff00ff"/><stop offset="0.434" stop-color="#ff00c9"/><stop offset="0.506" stop-color="#ff00a3"/><stop offset="0.596" stop-color="#ff007f"/><stop offset="0.741" stop-color="#ff0059"/><stop offset="0.957" stop-color="#ff0035"/><stop offset="1.012" stop-color="#ff002f"/></linearGradient>
<linearGradient id="zi0" gradientUnits="userSpaceOnUse" x1="1648.7" x2="1900" y1="0" y2="0"><stop offset="0.000" stop-color="#84ffcb"/><stop offset="0.669" stop-color="#e6ffc6"/><stop offset="0.812" stop-color="#fdffc5"/><stop offset="1.003" stop-color="#ffe3ae"/></linearGradient><linearGradient id="zi1" gradientUnits="userSpaceOnUse" x1="1648.7" x2="1900" y1="0" y2="0"><stop offset="0.000" stop-color="#85ffcd"/><stop offset="0.621" stop-color="#e0ffc9"/><stop offset="0.812" stop-color="#ffffc7"/><stop offset="1.003" stop-color="#ffe1af"/></linearGradient><linearGradient id="zi2" gradientUnits="userSpaceOnUse" x1="1648.7" x2="1900" y1="0" y2="0"><stop offset="0.000" stop-color="#86ffce"/><stop offset="0.621" stop-color="#e2ffca"/><stop offset="0.764" stop-color="#faffc9"/><stop offset="0.812" stop-color="#fffcc7"/><stop offset="1.003" stop-color="#ffe0af"/></linearGradient><linearGradient id="zi3" gradientUnits="userSpaceOnUse" x1="1648.7" x2="1900" y1="0" y2="0"><stop offset="0.000" stop-color="#87ffd0"/><stop offset="0.573" stop-color="#dcffcd"/><stop offset="0.764" stop-color="#fcffcb"/><stop offset="0.907" stop-color="#ffebbb"/><stop offset="1.003" stop-color="#ffdeaf"/></linearGradient><linearGradient id="zi4" gradientUnits="userSpaceOnUse" x1="1648.7" x2="1900" y1="0" y2="0"><stop offset="0.000" stop-color="#89ffd2"/><stop offset="0.573" stop-color="#deffcf"/><stop offset="0.764" stop-color="#feffcd"/><stop offset="1.003" stop-color="#ffdcb0"/></linearGradient><linearGradient id="zi5" gradientUnits="userSpaceOnUse" x1="1648.7" x2="1900" y1="0" y2="0"><stop offset="0.000" stop-color="#8affd4"/><stop offset="0.573" stop-color="#e0ffd1"/><stop offset="0.764" stop-color="#fffecf"/><stop offset="1.003" stop-color="#ffdab0"/></linearGradient><linearGradient id="zi6" gradientUnits="userSpaceOnUse" x1="1648.7" x2="1900" y1="0" y2="0"><stop offset="0.000" stop-color="#8bffd6"/><stop offset="0.573" stop-color="#e2ffd3"/><stop offset="0.716" stop-color="#faffd2"/><stop offset="0.764" stop-color="#fffccf"/><stop offset="1.003" stop-color="#ffd8b1"/></linearGradient><linearGradient id="zi7" gradientUnits="userSpaceOnUse" x1="1648.7" x2="1900" y1="0" y2="0"><stop offset="0.000" stop-color="#8dffd8"/><stop offset="0.525" stop-color="#dcffd5"/><stop offset="0.716" stop-color="#fcffd4"/><stop offset="0.860" stop-color="#ffebc2"/><stop offset="1.003" stop-color="#ffd7b1"/></linearGradient><linearGradient id="zi8" gradientUnits="userSpaceOnUse" x1="1648.7" x2="1900" y1="0" y2="0"><stop offset="0.000" stop-color="#8effda"/><stop offset="0.573" stop-color="#e6ffd7"/><stop offset="0.716" stop-color="#feffd6"/><stop offset="1.003" stop-color="#ffd5b1"/></linearGradient><linearGradient id="zi9" gradientUnits="userSpaceOnUse" x1="1648.7" x2="1900" y1="0" y2="0"><stop offset="0.000" stop-color="#90ffdb"/><stop offset="0.525" stop-color="#e0ffd9"/><stop offset="0.716" stop-color="#fffed7"/><stop offset="1.003" stop-color="#ffd3b2"/></linearGradient><linearGradient id="zi10" gradientUnits="userSpaceOnUse" x1="1648.7" x2="1900" y1="0" y2="0"><stop offset="0.000" stop-color="#91ffdd"/><stop offset="0.525" stop-color="#e2ffdb"/><stop offset="0.669" stop-color="#faffda"/><stop offset="0.716" stop-color="#fffcd7"/><stop offset="1.003" stop-color="#ffd1b2"/></linearGradient><linearGradient id="zi11" gradientUnits="userSpaceOnUse" x1="1648.7" x2="1900" y1="0" y2="0"><stop offset="0.000" stop-color="#92ffdf"/><stop offset="0.573" stop-color="#ecffdd"/><stop offset="0.669" stop-color="#fcffdc"/><stop offset="0.812" stop-color="#ffeaca"/><stop offset="1.003" stop-color="#ffd0b2"/></linearGradient><linearGradient id="zi12" gradientUnits="userSpaceOnUse" x1="1648.7" x2="1900" y1="0" y2="0"><stop offset="0.000" stop-color="#94ffe1"/><stop offset="0.573" stop-color="#eeffdf"/><stop offset="0.669" stop-color="#feffdf"/><stop offset="0.955" stop-color="#ffd4b8"/><stop offset="1.003" stop-color="#ffceb3"/></linearGradient><linearGradient id="zi13" gradientUnits="userSpaceOnUse" x1="1648.7" x2="1900" y1="0" y2="0"><stop offset="0.000" stop-color="#95ffe3"/><stop offset="0.525" stop-color="#e8ffe1"/><stop offset="0.669" stop-color="#fffee0"/><stop offset="0.955" stop-color="#ffd2b8"/><stop offset="1.003" stop-color="#ffccb3"/></linearGradient><linearGradient id="zi14" gradientUnits="userSpaceOnUse" x1="1648.7" x2="1900" y1="0" y2="0"><stop offset="0.000" stop-color="#97ffe5"/><stop offset="0.525" stop-color="#eaffe3"/><stop offset="0.621" stop-color="#faffe3"/><stop offset="0.669" stop-color="#fffbe0"/><stop offset="1.003" stop-color="#ffcbb3"/></linearGradient><linearGradient id="zi15" gradientUnits="userSpaceOnUse" x1="1648.7" x2="1900" y1="0" y2="0"><stop offset="0.000" stop-color="#98ffe7"/><stop offset="0.573" stop-color="#f4ffe5"/><stop offset="0.621" stop-color="#fcffe5"/><stop offset="0.764" stop-color="#ffead2"/><stop offset="1.003" stop-color="#ffc9b4"/></linearGradient><linearGradient id="zi16" gradientUnits="userSpaceOnUse" x1="1648.7" x2="1900" y1="0" y2="0"><stop offset="0.000" stop-color="#9affe9"/><stop offset="0.478" stop-color="#e6ffe8"/><stop offset="0.621" stop-color="#ffffe8"/><stop offset="0.907" stop-color="#ffd3bf"/><stop offset="1.003" stop-color="#ffc7b4"/></linearGradient><linearGradient id="zi17" gradientUnits="userSpaceOnUse" x1="1648.7" x2="1900" y1="0" y2="0"><stop offset="0.000" stop-color="#9bffeb"/><stop offset="0.621" stop-color="#fffde8"/><stop offset="0.907" stop-color="#ffd2c0"/><stop offset="1.003" stop-color="#ffc6b4"/></linearGradient><linearGradient id="zi18" gradientUnits="userSpaceOnUse" x1="1648.7" x2="1900" y1="0" y2="0"><stop offset="0.000" stop-color="#9dffed"/><stop offset="0.573" stop-color="#faffec"/><stop offset="0.621" stop-color="#fffbe8"/><stop offset="0.955" stop-color="#ffcaba"/><stop offset="1.003" stop-color="#ffc4b5"/></linearGradient><linearGradient id="zi19" gradientUnits="userSpaceOnUse" x1="1648.7" x2="1900" y1="0" y2="0"><stop offset="0.000" stop-color="#9efff0"/><stop offset="0.525" stop-color="#f4ffef"/><stop offset="0.573" stop-color="#fdffee"/><stop offset="0.955" stop-color="#ffc8ba"/><stop offset="1.003" stop-color="#ffc2b5"/></linearGradient><linearGradient id="zi20" gradientUnits="userSpaceOnUse" x1="1648.7" x2="1900" y1="0" y2="0"><stop offset="0.000" stop-color="#a0fff2"/><stop offset="0.525" stop-color="#f6fff1"/><stop offset="0.573" stop-color="#fffff1"/><stop offset="0.860" stop-color="#ffd3c6"/><stop offset="1.003" stop-color="#ffc1b5"/></linearGradient><linearGradient id="zi21" gradientUnits="userSpaceOnUse" x1="1648.7" x2="1900" y1="0" y2="0"><stop offset="0.000" stop-color="#a1fff4"/><stop offset="0.573" stop-color="#fffdf1"/><stop offset="0.860" stop-color="#ffd1c7"/><stop offset="1.003" stop-color="#ffbfb6"/></linearGradient><linearGradient id="zi22" gradientUnits="userSpaceOnUse" x1="1648.7" x2="1900" y1="0" y2="0"><stop offset="0.000" stop-color="#a3fff6"/><stop offset="0.525" stop-color="#fbfff5"/><stop offset="0.621" stop-color="#fff3e9"/><stop offset="0.907" stop-color="#ffc9c1"/><stop offset="1.003" stop-color="#ffbdb6"/></linearGradient><linearGradient id="zi23" gradientUnits="userSpaceOnUse" x1="1648.7" x2="1900" y1="0" y2="0"><stop offset="0.000" stop-color="#a5fff8"/><stop offset="0.525" stop-color="#fdfff8"/><stop offset="0.907" stop-color="#ffc7c1"/><stop offset="1.003" stop-color="#ffbcb6"/></linearGradient><linearGradient id="zi24" gradientUnits="userSpaceOnUse" x1="1648.7" x2="1900" y1="0" y2="0"><stop offset="0.000" stop-color="#a6fffa"/><stop offset="0.525" stop-color="#fffffa"/><stop offset="0.812" stop-color="#ffd2ce"/><stop offset="1.003" stop-color="#ffbab7"/></linearGradient><linearGradient id="zi25" gradientUnits="userSpaceOnUse" x1="1648.7" x2="1900" y1="0" y2="0"><stop offset="0.000" stop-color="#a8fffd"/><stop offset="0.478" stop-color="#f9fffd"/><stop offset="0.525" stop-color="#fffdfa"/><stop offset="0.812" stop-color="#ffd0ce"/><stop offset="1.003" stop-color="#ffb9b7"/></linearGradient><linearGradient id="zi26" gradientUnits="userSpaceOnUse" x1="1648.7" x2="1900" y1="0" y2="0"><stop offset="0.000" stop-color="#aaffff"/><stop offset="0.478" stop-color="#fbffff"/><stop offset="0.573" stop-color="#fff2f2"/><stop offset="0.907" stop-color="#ffc2c2"/><stop offset="1.003" stop-color="#ffb7b7"/></linearGradient><linearGradient id="zi27" gradientUnits="userSpaceOnUse" x1="1648.7" x2="1900" y1="0" y2="0"><stop offset="0.000" stop-color="#aafdff"/><stop offset="0.478" stop-color="#fbfcff"/><stop offset="0.525" stop-color="#fff8fb"/><stop offset="0.812" stop-color="#ffcccf"/><stop offset="1.003" stop-color="#ffb5b8"/></linearGradient><linearGradient id="zi28" gradientUnits="userSpaceOnUse" x1="1648.7" x2="1900" y1="0" y2="0"><stop offset="0.000" stop-color="#aafbff"/><stop offset="0.478" stop-color="#fbfaff"/><stop offset="0.573" stop-color="#ffeef3"/><stop offset="0.860" stop-color="#ffc5c9"/><stop offset="1.003" stop-color="#ffb4b8"/></linearGradient><linearGradient id="zi29" gradientUnits="userSpaceOnUse" x1="1648.7" x2="1900" y1="0" y2="0"><stop offset="0.000" stop-color="#aaf8ff"/><stop offset="0.478" stop-color="#faf8ff"/><stop offset="0.525" stop-color="#fff4fb"/><stop offset="0.812" stop-color="#ffc9cf"/><stop offset="1.003" stop-color="#ffb2b8"/></linearGradient><linearGradient id="zi30" gradientUnits="userSpaceOnUse" x1="1648.7" x2="1900" y1="0" y2="0"><stop offset="0.000" stop-color="#aaf6ff"/><stop offset="0.478" stop-color="#faf5ff"/><stop offset="0.525" stop-color="#fff2fb"/><stop offset="0.860" stop-color="#ffc1c9"/><stop offset="1.003" stop-color="#ffb1b8"/></linearGradient><linearGradient id="zi31" gradientUnits="userSpaceOnUse" x1="1648.7" x2="1900" y1="0" y2="0"><stop offset="0.000" stop-color="#aaf4ff"/><stop offset="0.478" stop-color="#faf3ff"/><stop offset="0.525" stop-color="#ffeffb"/><stop offset="0.860" stop-color="#ffbfca"/><stop offset="1.003" stop-color="#ffafb9"/></linearGradient><linearGradient id="zi32" gradientUnits="userSpaceOnUse" x1="1648.7" x2="1900" y1="0" y2="0"><stop offset="0.000" stop-color="#aaf2ff"/><stop offset="0.478" stop-color="#faf1ff"/><stop offset="0.525" stop-color="#ffedfc"/><stop offset="0.812" stop-color="#ffc4d0"/><stop offset="1.003" stop-color="#ffaeb9"/></linearGradient><linearGradient id="zi33" gradientUnits="userSpaceOnUse" x1="1648.7" x2="1900" y1="0" y2="0"><stop offset="0.000" stop-color="#abefff"/><stop offset="0.478" stop-color="#faeeff"/><stop offset="0.525" stop-color="#ffebfc"/><stop offset="0.812" stop-color="#ffc2d0"/><stop offset="1.003" stop-color="#ffacb9"/></linearGradient><linearGradient id="zi34" gradientUnits="userSpaceOnUse" x1="1648.7" x2="1900" y1="0" y2="0"><stop offset="0.000" stop-color="#abedff"/><stop offset="0.478" stop-color="#faecff"/><stop offset="0.525" stop-color="#ffe9fc"/><stop offset="0.812" stop-color="#ffc0d1"/><stop offset="1.003" stop-color="#ffabba"/></linearGradient><linearGradient id="zi35" gradientUnits="userSpaceOnUse" x1="1648.7" x2="1900" y1="0" y2="0"><stop offset="0.000" stop-color="#abebff"/><stop offset="0.478" stop-color="#f9eaff"/><stop offset="0.525" stop-color="#ffe7fc"/><stop offset="0.812" stop-color="#ffbed1"/><stop offset="1.003" stop-color="#ffa9ba"/></linearGradient><linearGradient id="zi36" gradientUnits="userSpaceOnUse" x1="1648.7" x2="1900" y1="0" y2="0"><stop offset="0.000" stop-color="#abe9ff"/><stop offset="0.478" stop-color="#f9e7ff"/><stop offset="0.525" stop-color="#ffe5fc"/><stop offset="0.812" stop-color="#ffbdd1"/><stop offset="1.003" stop-color="#ffa7ba"/></linearGradient><linearGradient id="zi37" gradientUnits="userSpaceOnUse" x1="1648.7" x2="1900" y1="0" y2="0"><stop offset="0.000" stop-color="#abe7ff"/><stop offset="0.478" stop-color="#f9e5ff"/><stop offset="0.525" stop-color="#ffe3fc"/><stop offset="0.812" stop-color="#ffbbd1"/><stop offset="1.003" stop-color="#ffa6bb"/></linearGradient><linearGradient id="zi38" gradientUnits="userSpaceOnUse" x1="1648.7" x2="1900" y1="0" y2="0"><stop offset="0.000" stop-color="#abe5ff"/><stop offset="0.525" stop-color="#ffe1fd"/><stop offset="0.812" stop-color="#ffb9d2"/><stop offset="1.003" stop-color="#ffa4bb"/></linearGradient><linearGradient id="zi39" gradientUnits="userSpaceOnUse" x1="1648.7" x2="1900" y1="0" y2="0"><stop offset="0.000" stop-color="#abe3ff"/><stop offset="0.525" stop-color="#ffdffd"/><stop offset="0.812" stop-color="#ffb8d2"/><stop offset="1.003" stop-color="#ffa3bb"/></linearGradient><linearGradient id="zi40" gradientUnits="userSpaceOnUse" x1="1648.7" x2="1900" y1="0" y2="0"><stop offset="0.000" stop-color="#ace1ff"/><stop offset="0.478" stop-color="#f9deff"/><stop offset="0.525" stop-color="#ffdcfd"/><stop offset="0.860" stop-color="#ffb0cc"/><stop offset="1.003" stop-color="#ffa1bc"/></linearGradient><linearGradient id="zi41" gradientUnits="userSpaceOnUse" x1="1648.7" x2="1900" y1="0" y2="0"><stop offset="0.000" stop-color="#acdfff"/><stop offset="0.478" stop-color="#f9dcff"/><stop offset="0.525" stop-color="#ffdafd"/><stop offset="0.860" stop-color="#ffafcc"/><stop offset="1.003" stop-color="#ffa0bc"/></linearGradient><linearGradient id="zi42" gradientUnits="userSpaceOnUse" x1="1648.7" x2="1900" y1="0" y2="0"><stop offset="0.000" stop-color="#acddff"/><stop offset="0.525" stop-color="#ffd8fd"/><stop offset="0.860" stop-color="#ffadcd"/><stop offset="1.003" stop-color="#ff9fbc"/></linearGradient><linearGradient id="zi43" gradientUnits="userSpaceOnUse" x1="1648.7" x2="1900" y1="0" y2="0"><stop offset="0.000" stop-color="#acdbff"/><stop offset="0.525" stop-color="#ffd6fe"/><stop offset="0.860" stop-color="#ffaccd"/><stop offset="1.003" stop-color="#ff9dbc"/></linearGradient><linearGradient id="zi44" gradientUnits="userSpaceOnUse" x1="1648.7" x2="1900" y1="0" y2="0"><stop offset="0.000" stop-color="#acd9ff"/><stop offset="0.525" stop-color="#ffd4fe"/><stop offset="0.860" stop-color="#ffaacd"/><stop offset="1.003" stop-color="#ff9cbd"/></linearGradient><linearGradient id="zi45" gradientUnits="userSpaceOnUse" x1="1648.7" x2="1900" y1="0" y2="0"><stop offset="0.000" stop-color="#acd7ff"/><stop offset="0.525" stop-color="#ffd2fe"/><stop offset="0.812" stop-color="#ffaed4"/><stop offset="1.003" stop-color="#ff9abd"/></linearGradient><linearGradient id="zi46" gradientUnits="userSpaceOnUse" x1="1648.7" x2="1900" y1="0" y2="0"><stop offset="0.000" stop-color="#acd5ff"/><stop offset="0.525" stop-color="#ffd0fe"/><stop offset="0.812" stop-color="#ffacd4"/><stop offset="1.003" stop-color="#ff99bd"/></linearGradient><linearGradient id="zi47" gradientUnits="userSpaceOnUse" x1="1648.7" x2="1900" y1="0" y2="0"><stop offset="0.000" stop-color="#acd3ff"/><stop offset="0.525" stop-color="#ffcefe"/><stop offset="0.860" stop-color="#ffa5ce"/><stop offset="1.003" stop-color="#ff97be"/></linearGradient><linearGradient id="zi48" gradientUnits="userSpaceOnUse" x1="1648.7" x2="1900" y1="0" y2="0"><stop offset="0.000" stop-color="#add1ff"/><stop offset="0.525" stop-color="#ffcdfe"/><stop offset="0.812" stop-color="#ffa9d4"/><stop offset="1.003" stop-color="#ff96be"/></linearGradient><linearGradient id="zi49" gradientUnits="userSpaceOnUse" x1="1648.7" x2="1900" y1="0" y2="0"><stop offset="0.000" stop-color="#adcfff"/><stop offset="0.525" stop-color="#ffcbff"/><stop offset="0.812" stop-color="#ffa7d5"/><stop offset="1.003" stop-color="#ff94be"/></linearGradient><linearGradient id="zi50" gradientUnits="userSpaceOnUse" x1="1648.7" x2="1900" y1="0" y2="0"><stop offset="0.000" stop-color="#adcdff"/><stop offset="0.525" stop-color="#ffc9ff"/><stop offset="0.812" stop-color="#ffa6d5"/><stop offset="1.003" stop-color="#ff93be"/></linearGradient><linearGradient id="zi51" gradientUnits="userSpaceOnUse" x1="1648.7" x2="1900" y1="0" y2="0"><stop offset="0.000" stop-color="#adcbff"/><stop offset="0.525" stop-color="#ffc7ff"/><stop offset="0.812" stop-color="#ffa4d5"/><stop offset="1.003" stop-color="#ff92bf"/></linearGradient><linearGradient id="zi52" gradientUnits="userSpaceOnUse" x1="1648.7" x2="1900" y1="0" y2="0"><stop offset="0.000" stop-color="#adc9ff"/><stop offset="0.525" stop-color="#ffc5ff"/><stop offset="0.812" stop-color="#ffa3d5"/><stop offset="1.003" stop-color="#ff90bf"/></linearGradient>
<clipPath id="cl_in"><rect x="1648.7" y="153.8" width="251.3" height="195.6"/></clipPath>
<linearGradient id="rb_r" x1="0" y1="0" x2="0" y2="1"><stop offset="0" stop-color="#ff5050"/><stop offset="0.2" stop-color="#ff0808"/><stop offset="0.6" stop-color="#f80000"/><stop offset="1" stop-color="#900000"/></linearGradient>
<linearGradient id="rb_g" x1="0" y1="0" x2="0" y2="1"><stop offset="0" stop-color="#20a820"/><stop offset="0.3" stop-color="#009000"/><stop offset="1" stop-color="#006800"/></linearGradient>
<linearGradient id="rb_b" x1="0" y1="0" x2="0" y2="1"><stop offset="0" stop-color="#5858ff"/><stop offset="0.2" stop-color="#0808ff"/><stop offset="0.6" stop-color="#0000f0"/><stop offset="1" stop-color="#000080"/></linearGradient>
<linearGradient id="th" x1="0" y1="0" x2="0" y2="1"><stop offset="0" stop-color="#2e2e2e"/><stop offset="0.45" stop-color="#262626"/><stop offset="0.5" stop-color="#161616"/><stop offset="1" stop-color="#1c1c1c"/></linearGradient>
<linearGradient id="rh" x1="0" y1="0" x2="1" y2="0"><stop offset="0" stop-color="#181818"/><stop offset="1" stop-color="#3c3c3c"/></linearGradient>
<linearGradient id="bb" x1="0" y1="0" x2="0" y2="1"><stop offset="0" stop-color="#262626"/><stop offset="1" stop-color="#3a3a3a"/></linearGradient>
<linearGradient id="cb" x1="0" y1="0" x2="0" y2="1"><stop offset="0" stop-color="#9c9c9c"/><stop offset="0.12" stop-color="#8c8c8c"/><stop offset="0.6" stop-color="#747474"/><stop offset="1" stop-color="#585858"/></linearGradient>
<linearGradient id="cbsel" x1="0" y1="0" x2="0" y2="1"><stop offset="0" stop-color="#161616"/><stop offset="0.5" stop-color="#1e1e1e"/><stop offset="1" stop-color="#3c3c3c"/></linearGradient>
<linearGradient id="cb2" x1="0" y1="0" x2="0" y2="1"><stop offset="0" stop-color="#b0b0b0"/><stop offset="0.1" stop-color="#9c9c9c"/><stop offset="1" stop-color="#6e6e6e"/></linearGradient>
<linearGradient id="cbc" x1="0" y1="0" x2="0" y2="1"><stop offset="0" stop-color="#808080"/><stop offset="1" stop-color="#b4b4b4"/></linearGradient>
<linearGradient id="sqb" x1="0" y1="0" x2="0" y2="1"><stop offset="0" stop-color="#d4d4d4"/><stop offset="0.5" stop-color="#c4c4c4"/><stop offset="0.55" stop-color="#a8a8a8"/><stop offset="1" stop-color="#a0a0a0"/></linearGradient>
<linearGradient id="cb3" x1="0" y1="0" x2="0" y2="1"><stop offset="0" stop-color="#8e8e8e"/><stop offset="1" stop-color="#666"/></linearGradient></defs>
<rect x="0" y="0" width="1920" height="1035" fill="#333" />
<rect x="0" y="99.2" width="2.5" height="864" fill="#2b2b2b" />
<g id="titlebar">
<rect x="0" y="0" width="1920" height="25.4" fill="#fff" />
<path d="M4.2 4 Q3.4 3.8 3.7 5.5 L6.2 20.8 Q6.8 22 8 21.2 L18.3 15.2 Q19 14.6 18 14 Z" fill="#1c1c1c"/><path d="M7.5 9.5 L14.5 14.5 L8.8 18 Z" fill="#c8202a"/>
<text x="24" y="18.3" font-size="12.5" fill="#444" text-anchor="start" font-weight="normal" textLength="240" lengthAdjust="spacingAndGlyphs" >CalMAN 5 CalMAN Ultimate for Business</text>
<line x1="1781.7" y1="12.6" x2="1793.8" y2="12.6" stroke="#707070" stroke-width="1.5" />
<rect x="1834.3" y="9.8" width="8.6" height="8.6" fill="#fff" stroke="#666" stroke-width="1.2" rx="1.8"/><path d="M1836.6 9.6 Q1837 7.4 1839 7.4 H1844 Q1846 7.4 1846 9.4 V14.6 Q1846 16.4 1843.6 16.6" fill="none" stroke="#777" stroke-width="1.2"/>
<path d="M1887.2 7.2 L1898.8 18.4 M1898.8 7.2 L1887.2 18.4" stroke="#484848" stroke-width="1.3" fill="none"/>
</g>
<g id="header">
<rect x="0" y="25.4" width="1920" height="74.8" fill="#232323" />
<rect x="0" y="25.4" width="1920" height="2.4" fill="#1b1b1b" />
<rect x="214" y="40" width="1710" height="5" fill="url(#rainbow)" filter="url(#soft)" rx="2"/>
<path d="M2 26 H205 V54 Q205 58 201 58 H6 Q2 58 2 54 Z" fill="#000" opacity=".6" transform="translate(0,2)" filter="url(#sh)"/>
<path d="M1.7 25.5 H206.3 V54.4 Q206.3 58.4 202.3 58.4 H5.7 Q1.7 58.4 1.7 54.4 Z" fill="url(#logo)"/>
<text x="8.2" y="52.8" font-size="32.5" fill="#7a0a10" text-anchor="start" font-weight="bold" textLength="131" lengthAdjust="spacingAndGlyphs" opacity=".7">CalMAN</text>
<text x="146.2" y="52.8" font-size="32.5" fill="#7a0a10" text-anchor="start" font-weight="bold" textLength="20" lengthAdjust="spacingAndGlyphs" opacity=".7">5</text>
<text x="7" y="51.6" font-size="32.5" fill="url(#logotxt)" text-anchor="start" font-weight="bold" textLength="131" lengthAdjust="spacingAndGlyphs" >CalMAN</text>
<text x="145" y="51.6" font-size="32.5" fill="url(#logotxt)" text-anchor="start" font-weight="bold" textLength="20" lengthAdjust="spacingAndGlyphs" >5</text>
<path d="M101 31 l-4 8 l5 -2 l-6 10 l8 -4 l3 6" stroke="#c82028" stroke-width="1.6" fill="none"/>
<circle cx="185.8" cy="42.3" r="10.8" fill="url(#ddc)"/><path d="M181.3 40 h9 l-4.5 5.8 z" fill="#fff"/>
<path d="M-2 65 H26 Q30 65 30 69 V92 Q30 96 26 96 H-2 Z" fill="url(#btn)" stroke="#a0a0a0" stroke-width="1"/>
<circle cx="14" cy="80.5" r="10.5" fill="url(#btnd)"/><path d="M10.5 74.5 v11 l8 -5.5 z" fill="#f4f4f4"/>
<path d="M34 99.2 V70 Q34 65 39 65 H132 Q137 65 137 70 V99.2 Z" fill="#3a3a3a" stroke="#555" stroke-width="1"/>
<line x1="99.5" y1="66" x2="99.5" y2="99" stroke="#555" stroke-width="1" />
<text x="39.5" y="87.6" font-size="13" fill="#e0e0e0" text-anchor="start" font-weight="normal" textLength="52.7" lengthAdjust="spacingAndGlyphs" stroke="#e0e0e0" stroke-width=".5">History 1</text>
<circle cx="116" cy="85" r="9" fill="#303030"/><path d="M116 81.5 v7 M112.5 85 h7" stroke="#5c5c5c" stroke-width="1.5"/>
<path d="M1323.6 98.6 V69 Q1323.6 65.6 1327.1 65.6 H1481.2 Q1484.7 65.6 1484.7 69 V98.6 Z" fill="url(#dev)"/>
<path d="M1323.6 98.6 V69 Q1323.6 65.6 1327.1 65.6 H1330.1 V98.6 Z" fill="#10e010"/>
<text x="1333.1" y="78" font-size="11.5" fill="#f0f0f0" text-anchor="start" font-weight="bold" textLength="119" lengthAdjust="spacingAndGlyphs" >X-Rite i1Display Retail</text>
<text x="1333.1" y="94.5" font-size="11.5" fill="#f0f0f0" text-anchor="start" font-weight="bold" textLength="30" lengthAdjust="spacingAndGlyphs" >OLED</text>
<circle cx="1467" cy="83" r="10.5" fill="url(#embd)" opacity=".8"/><path d="M1461.5 80.3 h11 l-5.5 6.2 z" fill="#fff"/>
<path d="M1491 98.6 V69 Q1491 65.6 1494.5 65.6 H1633.3 Q1636.8 65.6 1636.8 69 V98.6 Z" fill="url(#dev)"/>
<path d="M1491 98.6 V69 Q1491 65.6 1494.5 65.6 H1497.5 V98.6 Z" fill="#10e010"/>
<text x="1500.5" y="78" font-size="11.5" fill="#f0f0f0" text-anchor="start" font-weight="bold" textLength="73" lengthAdjust="spacingAndGlyphs" >Mobile Forge</text>
<circle cx="1620" cy="83" r="10.5" fill="url(#embd)" opacity=".8"/><path d="M1614.5 80.3 h11 l-5.5 6.2 z" fill="#fff"/>
<path d="M1644 98.6 V69 Q1644 65.6 1647.5 65.6 H1801.5 Q1805 65.6 1805 69 V98.6 Z" fill="url(#dev)"/>
<path d="M1644 98.6 V69 Q1644 65.6 1647.5 65.6 H1650.5 V98.6 Z" fill="#f0e010"/>
<text x="1653.5" y="78" font-size="11.5" fill="#f0f0f0" text-anchor="start" font-weight="bold" textLength="119" lengthAdjust="spacingAndGlyphs" >Direct Display Control</text>
<circle cx="1788" cy="83" r="10.5" fill="url(#embd)" opacity=".8"/><path d="M1782.5 80.3 h11 l-5.5 6.2 z" fill="#fff"/>
<rect x="1809" y="65" width="38" height="32.5" rx="4.5" fill="url(#btn)" stroke="#a8a8a8" stroke-width="1.2"/>
<circle cx="1828" cy="81" r="11" fill="url(#embc)"/>
<rect x="1850" y="65" width="37" height="32.5" rx="4.5" fill="url(#btn)" stroke="#a8a8a8" stroke-width="1.2"/>
<circle cx="1868.5" cy="81" r="11" fill="url(#embc)"/>
<rect x="1890.5" y="65" width="39.5" height="32.5" rx="4.5" fill="url(#btn)" stroke="#a8a8a8" stroke-width="1.2"/>
<circle cx="1906" cy="81" r="11" fill="url(#embc)"/>
<path d="M1835.29 79.69L1835.29 82.31L1833.25 82.31L1832.57 83.93L1834.02 85.37L1832.17 87.22L1830.73 85.77L1829.11 86.45L1829.11 88.49L1826.49 88.49L1826.49 86.45L1824.87 85.77L1823.43 87.22L1821.58 85.37L1823.03 83.93L1822.35 82.31L1820.31 82.31L1820.31 79.69L1822.35 79.69L1823.03 78.07L1821.58 76.63L1823.43 74.78L1824.87 76.23L1826.49 75.55L1826.49 73.51L1829.11 73.51L1829.11 75.55L1830.73 76.23L1832.17 74.78L1834.02 76.63L1832.57 78.07L1833.25 79.69ZM1824.90 81.00 a2.9 2.9 0 1 0 5.8 0 a2.9 2.9 0 1 0 -5.8 0Z" fill="#ececec" fill-rule="evenodd"/>
<text x="1868.6" y="87.6" font-size="17.5" fill="#f2f2f2" text-anchor="middle" font-weight="bold" >?</text>
<path d="M1909.2 75.2 v11.6 l-7 -5.8 z" fill="#f2f2f2"/>
</g>
<text x="29" y="161.5" font-size="42" fill="#f2f2f2" text-anchor="start" font-weight="normal" textLength="221" lengthAdjust="spacingAndGlyphs" stroke="#f2f2f2" stroke-width=".5">Colorspace</text>
<g id="deltaE">
<text x="217" y="213.5" font-size="15.5" fill="#d8d8d8" text-anchor="middle" font-weight="normal" textLength="92" lengthAdjust="spacingAndGlyphs"  stroke="#d8d8d8" stroke-width=".45">DeltaE 2000</text>
<rect x="24.5" y="219.4" width="385" height="438" fill="#242424" />
<line x1="74.34" y1="219.4" x2="74.34" y2="664.4" stroke="#9a9a9a" stroke-width="1.6" />
<line x1="125.78" y1="219.4" x2="125.78" y2="664.4" stroke="#9a9a9a" stroke-width="1.6" />
<line x1="177.22" y1="219.4" x2="177.22" y2="664.4" stroke="#9a9a9a" stroke-width="1.6" />
<line x1="228.66" y1="219.4" x2="228.66" y2="664.4" stroke="#9a9a9a" stroke-width="1.6" />
<line x1="280.1" y1="219.4" x2="280.1" y2="664.4" stroke="#9a9a9a" stroke-width="1.6" />
<line x1="331.54" y1="219.4" x2="331.54" y2="664.4" stroke="#9a9a9a" stroke-width="1.6" />
<line x1="382.98" y1="219.4" x2="382.98" y2="664.4" stroke="#9a9a9a" stroke-width="1.6" />
<line x1="24.5" y1="219.4" x2="24.5" y2="664.4" stroke="#9a9a9a" stroke-width="1.5" />
<rect x="24.5" y="219.4" width="385" height="438" fill="none" stroke="#9a9a9a" stroke-width="1.5"/>
<text x="22.9" y="681.2" font-size="16.5" fill="#d8d8d8" text-anchor="middle" font-weight="normal" textLength="8.8935" lengthAdjust="spacingAndGlyphs"  stroke="#d8d8d8" stroke-width=".45">0</text>
<text x="74.34" y="681.2" font-size="16.5" fill="#d8d8d8" text-anchor="middle" font-weight="normal" textLength="8.8935" lengthAdjust="spacingAndGlyphs"  stroke="#d8d8d8" stroke-width=".45">2</text>
<text x="125.78" y="681.2" font-size="16.5" fill="#d8d8d8" text-anchor="middle" font-weight="normal" textLength="8.8935" lengthAdjust="spacingAndGlyphs"  stroke="#d8d8d8" stroke-width=".45">4</text>
<text x="177.22" y="681.2" font-size="16.5" fill="#d8d8d8" text-anchor="middle" font-weight="normal" textLength="8.8935" lengthAdjust="spacingAndGlyphs"  stroke="#d8d8d8" stroke-width=".45">6</text>
<text x="228.66" y="681.2" font-size="16.5" fill="#d8d8d8" text-anchor="middle" font-weight="normal" textLength="8.8935" lengthAdjust="spacingAndGlyphs"  stroke="#d8d8d8" stroke-width=".45">8</text>
<text x="280.1" y="681.2" font-size="16.5" fill="#d8d8d8" text-anchor="middle" font-weight="normal" textLength="17.787" lengthAdjust="spacingAndGlyphs"  stroke="#d8d8d8" stroke-width=".45">10</text>
<text x="331.54" y="681.2" font-size="16.5" fill="#d8d8d8" text-anchor="middle" font-weight="normal" textLength="17.787" lengthAdjust="spacingAndGlyphs"  stroke="#d8d8d8" stroke-width=".45">12</text>
<text x="382.98" y="681.2" font-size="16.5" fill="#d8d8d8" text-anchor="middle" font-weight="normal" textLength="17.787" lengthAdjust="spacingAndGlyphs"  stroke="#d8d8d8" stroke-width=".45">14</text>
<rect x="24.5" y="226.275" width="103.24" height="41" fill="url(#b_w100)" stroke="#000" stroke-width="1.6"/>
<rect x="24.5" y="281.025" width="4.97968" height="41" fill="url(#b_yel)" stroke="#000" stroke-width="1.6"/>
<rect x="24.5" y="335.775" width="16.4914" height="41" fill="url(#b_mag)" stroke="#000" stroke-width="1.6"/>
<rect x="24.5" y="390.525" width="47.946" height="41" fill="url(#b_cya)" stroke="#000" stroke-width="1.6"/>
<rect x="24.5" y="445.275" width="28.8113" height="41" fill="url(#b_blu)" stroke="#000" stroke-width="1.6"/>
<rect x="24.5" y="500.025" width="17.4637" height="41" fill="url(#b_grn)" stroke="#000" stroke-width="1.6"/>
<rect x="24.5" y="554.775" width="16.1149" height="41" fill="url(#b_red)" stroke="#000" stroke-width="1.6"/>
<rect x="24.5" y="609.525" width="80.5728" height="41" fill="url(#b_wht)" stroke="#000" stroke-width="1.6"/>
</g>
<g>
<text x="538" y="143" font-size="15.5" fill="#d8d8d8" text-anchor="middle" font-weight="normal" textLength="49" lengthAdjust="spacingAndGlyphs"  stroke="#d8d8d8" stroke-width=".45">DeltaL</text>
<rect x="469.6" y="149" width="166.8" height="336" fill="#242424" />
<line x1="463.6" y1="149" x2="636.4" y2="149" stroke="#9a9a9a" stroke-width="1.5" />
<text x="462.1" y="154.9" font-size="16.5" fill="#d8d8d8" text-anchor="end" font-weight="normal" textLength="17.787" lengthAdjust="spacingAndGlyphs"  stroke="#d8d8d8" stroke-width=".45">15</text>
<line x1="463.6" y1="205" x2="636.4" y2="205" stroke="#9a9a9a" stroke-width="1.5" />
<text x="462.1" y="210.9" font-size="16.5" fill="#d8d8d8" text-anchor="end" font-weight="normal" textLength="17.787" lengthAdjust="spacingAndGlyphs"  stroke="#d8d8d8" stroke-width=".45">10</text>
<line x1="463.6" y1="261" x2="636.4" y2="261" stroke="#9a9a9a" stroke-width="1.5" />
<text x="462.1" y="266.9" font-size="16.5" fill="#d8d8d8" text-anchor="end" font-weight="normal" textLength="8.8935" lengthAdjust="spacingAndGlyphs"  stroke="#d8d8d8" stroke-width=".45">5</text>
<line x1="463.6" y1="317" x2="636.4" y2="317" stroke="#9a9a9a" stroke-width="1.5" />
<text x="462.1" y="322.9" font-size="16.5" fill="#d8d8d8" text-anchor="end" font-weight="normal" textLength="8.8935" lengthAdjust="spacingAndGlyphs"  stroke="#d8d8d8" stroke-width=".45">0</text>
<line x1="463.6" y1="373" x2="636.4" y2="373" stroke="#9a9a9a" stroke-width="1.5" />
<text x="462.1" y="378.9" font-size="16.5" fill="#d8d8d8" text-anchor="end" font-weight="normal" textLength="15.4935" lengthAdjust="spacingAndGlyphs"  stroke="#d8d8d8" stroke-width=".45">-5</text>
<line x1="463.6" y1="429" x2="636.4" y2="429" stroke="#9a9a9a" stroke-width="1.5" />
<text x="462.1" y="434.9" font-size="16.5" fill="#d8d8d8" text-anchor="end" font-weight="normal" textLength="24.387" lengthAdjust="spacingAndGlyphs"  stroke="#d8d8d8" stroke-width=".45">-10</text>
<line x1="463.6" y1="485" x2="636.4" y2="485" stroke="#9a9a9a" stroke-width="1.5" />
<text x="462.1" y="490.9" font-size="16.5" fill="#d8d8d8" text-anchor="end" font-weight="normal" textLength="24.387" lengthAdjust="spacingAndGlyphs"  stroke="#d8d8d8" stroke-width=".45">-15</text>
<line x1="469.6" y1="149" x2="469.6" y2="490" stroke="#9a9a9a" stroke-width="1.5" />
<line x1="636.4" y1="149" x2="636.4" y2="490" stroke="#9a9a9a" stroke-width="1.5" />
<text x="553" y="500.3" font-size="16.5" fill="#d8d8d8" text-anchor="middle" font-weight="normal" textLength="46" lengthAdjust="spacingAndGlyphs"  stroke="#d8d8d8" stroke-width=".45">100W</text>
<rect x="487.6" y="316" width="131.5" height="2" fill="#1a1a1a" />
</g>
<g>
<text x="765" y="143" font-size="15.5" fill="#d8d8d8" text-anchor="middle" font-weight="normal" textLength="51" lengthAdjust="spacingAndGlyphs"  stroke="#d8d8d8" stroke-width=".45">DeltaC</text>
<rect x="696.6" y="149" width="166.8" height="336" fill="#242424" />
<line x1="690.6" y1="149" x2="863.4" y2="149" stroke="#9a9a9a" stroke-width="1.5" />
<text x="689.1" y="154.9" font-size="16.5" fill="#d8d8d8" text-anchor="end" font-weight="normal" textLength="17.787" lengthAdjust="spacingAndGlyphs"  stroke="#d8d8d8" stroke-width=".45">15</text>
<line x1="690.6" y1="205" x2="863.4" y2="205" stroke="#9a9a9a" stroke-width="1.5" />
<text x="689.1" y="210.9" font-size="16.5" fill="#d8d8d8" text-anchor="end" font-weight="normal" textLength="17.787" lengthAdjust="spacingAndGlyphs"  stroke="#d8d8d8" stroke-width=".45">10</text>
<line x1="690.6" y1="261" x2="863.4" y2="261" stroke="#9a9a9a" stroke-width="1.5" />
<text x="689.1" y="266.9" font-size="16.5" fill="#d8d8d8" text-anchor="end" font-weight="normal" textLength="8.8935" lengthAdjust="spacingAndGlyphs"  stroke="#d8d8d8" stroke-width=".45">5</text>
<line x1="690.6" y1="317" x2="863.4" y2="317" stroke="#9a9a9a" stroke-width="1.5" />
<text x="689.1" y="322.9" font-size="16.5" fill="#d8d8d8" text-anchor="end" font-weight="normal" textLength="8.8935" lengthAdjust="spacingAndGlyphs"  stroke="#d8d8d8" stroke-width=".45">0</text>
<line x1="690.6" y1="373" x2="863.4" y2="373" stroke="#9a9a9a" stroke-width="1.5" />
<text x="689.1" y="378.9" font-size="16.5" fill="#d8d8d8" text-anchor="end" font-weight="normal" textLength="15.4935" lengthAdjust="spacingAndGlyphs"  stroke="#d8d8d8" stroke-width=".45">-5</text>
<line x1="690.6" y1="429" x2="863.4" y2="429" stroke="#9a9a9a" stroke-width="1.5" />
<text x="689.1" y="434.9" font-size="16.5" fill="#d8d8d8" text-anchor="end" font-weight="normal" textLength="24.387" lengthAdjust="spacingAndGlyphs"  stroke="#d8d8d8" stroke-width=".45">-10</text>
<line x1="690.6" y1="485" x2="863.4" y2="485" stroke="#9a9a9a" stroke-width="1.5" />
<text x="689.1" y="490.9" font-size="16.5" fill="#d8d8d8" text-anchor="end" font-weight="normal" textLength="24.387" lengthAdjust="spacingAndGlyphs"  stroke="#d8d8d8" stroke-width=".45">-15</text>
<line x1="696.6" y1="149" x2="696.6" y2="490" stroke="#9a9a9a" stroke-width="1.5" />
<line x1="863.4" y1="149" x2="863.4" y2="490" stroke="#9a9a9a" stroke-width="1.5" />
<text x="780" y="500.3" font-size="16.5" fill="#d8d8d8" text-anchor="middle" font-weight="normal" textLength="46" lengthAdjust="spacingAndGlyphs"  stroke="#d8d8d8" stroke-width=".45">100W</text>
<rect x="715.1" y="277" width="130" height="40" fill="url(#dcbar)" stroke="#111" stroke-width="1.6"/>
</g>
<g>
<text x="992" y="143" font-size="15.5" fill="#d8d8d8" text-anchor="middle" font-weight="normal" textLength="52" lengthAdjust="spacingAndGlyphs"  stroke="#d8d8d8" stroke-width=".45">DeltaH</text>
<rect x="923.6" y="149" width="166.8" height="336" fill="#242424" />
<line x1="917.6" y1="149" x2="1090.4" y2="149" stroke="#9a9a9a" stroke-width="1.5" />
<text x="916.1" y="154.9" font-size="16.5" fill="#d8d8d8" text-anchor="end" font-weight="normal" textLength="17.787" lengthAdjust="spacingAndGlyphs"  stroke="#d8d8d8" stroke-width=".45">15</text>
<line x1="917.6" y1="205" x2="1090.4" y2="205" stroke="#9a9a9a" stroke-width="1.5" />
<text x="916.1" y="210.9" font-size="16.5" fill="#d8d8d8" text-anchor="end" font-weight="normal" textLength="17.787" lengthAdjust="spacingAndGlyphs"  stroke="#d8d8d8" stroke-width=".45">10</text>
<line x1="917.6" y1="261" x2="1090.4" y2="261" stroke="#9a9a9a" stroke-width="1.5" />
<text x="916.1" y="266.9" font-size="16.5" fill="#d8d8d8" text-anchor="end" font-weight="normal" textLength="8.8935" lengthAdjust="spacingAndGlyphs"  stroke="#d8d8d8" stroke-width=".45">5</text>
<line x1="917.6" y1="317" x2="1090.4" y2="317" stroke="#9a9a9a" stroke-width="1.5" />
<text x="916.1" y="322.9" font-size="16.5" fill="#d8d8d8" text-anchor="end" font-weight="normal" textLength="8.8935" lengthAdjust="spacingAndGlyphs"  stroke="#d8d8d8" stroke-width=".45">0</text>
<line x1="917.6" y1="373" x2="1090.4" y2="373" stroke="#9a9a9a" stroke-width="1.5" />
<text x="916.1" y="378.9" font-size="16.5" fill="#d8d8d8" text-anchor="end" font-weight="normal" textLength="15.4935" lengthAdjust="spacingAndGlyphs"  stroke="#d8d8d8" stroke-width=".45">-5</text>
<line x1="917.6" y1="429" x2="1090.4" y2="429" stroke="#9a9a9a" stroke-width="1.5" />
<text x="916.1" y="434.9" font-size="16.5" fill="#d8d8d8" text-anchor="end" font-weight="normal" textLength="24.387" lengthAdjust="spacingAndGlyphs"  stroke="#d8d8d8" stroke-width=".45">-10</text>
<line x1="917.6" y1="485" x2="1090.4" y2="485" stroke="#9a9a9a" stroke-width="1.5" />
<text x="916.1" y="490.9" font-size="16.5" fill="#d8d8d8" text-anchor="end" font-weight="normal" textLength="24.387" lengthAdjust="spacingAndGlyphs"  stroke="#d8d8d8" stroke-width=".45">-15</text>
<line x1="923.6" y1="149" x2="923.6" y2="490" stroke="#9a9a9a" stroke-width="1.5" />
<line x1="1090.4" y1="149" x2="1090.4" y2="490" stroke="#9a9a9a" stroke-width="1.5" />
<text x="1007" y="500.3" font-size="16.5" fill="#d8d8d8" text-anchor="middle" font-weight="normal" textLength="46" lengthAdjust="spacingAndGlyphs"  stroke="#d8d8d8" stroke-width=".45">100W</text>
<rect x="941.6" y="316" width="131.5" height="2" fill="#1a1a1a" />
</g>
<g id="swatches">
<rect x="432.7" y="518.8" width="680" height="172" fill="#000" />
<rect x="452.5" y="526" width="72" height="70" fill="#c0c0c4" />
<rect x="452.5" y="596" width="72" height="71" fill="#c0c0c0" />
<rect x="453.5" y="527" width="70" height="139" fill="none" stroke="#fff" stroke-opacity=".62" stroke-width="2"/>
<text x="488.5" y="683" font-size="12.5" fill="#f4f4f4" text-anchor="middle" font-weight="bold" textLength="37" lengthAdjust="spacingAndGlyphs" >White</text>
<rect x="535.5" y="526" width="72" height="70" fill="#c40000" />
<rect x="535.5" y="596" width="72" height="71" fill="#be0000" />
<rect x="536.5" y="527" width="70" height="139" fill="none" stroke="#fff" stroke-opacity=".62" stroke-width="2"/>
<text x="571.5" y="683" font-size="12.5" fill="#f4f4f4" text-anchor="middle" font-weight="bold" textLength="24" lengthAdjust="spacingAndGlyphs" >Red</text>
<rect x="618.5" y="526" width="72" height="70" fill="#00c41e" />
<rect x="618.5" y="596" width="72" height="71" fill="#1ec41e" />
<rect x="619.5" y="527" width="70" height="139" fill="none" stroke="#fff" stroke-opacity=".62" stroke-width="2"/>
<text x="654.5" y="683" font-size="12.5" fill="#f4f4f4" text-anchor="middle" font-weight="bold" textLength="39" lengthAdjust="spacingAndGlyphs" >Green</text>
<rect x="701.5" y="526" width="72" height="70" fill="#1400c8" />
<rect x="701.5" y="596" width="72" height="71" fill="#1010c4" />
<rect x="702.5" y="527" width="70" height="139" fill="none" stroke="#fff" stroke-opacity=".62" stroke-width="2"/>
<text x="737.5" y="683" font-size="12.5" fill="#f4f4f4" text-anchor="middle" font-weight="bold" textLength="28" lengthAdjust="spacingAndGlyphs" >Blue</text>
<rect x="784.5" y="526" width="72" height="70" fill="#00c4c8" />
<rect x="784.5" y="596" width="72" height="71" fill="#14c4c4" />
<rect x="785.5" y="527" width="70" height="139" fill="none" stroke="#fff" stroke-opacity=".62" stroke-width="2"/>
<text x="820.5" y="683" font-size="12.5" fill="#f4f4f4" text-anchor="middle" font-weight="bold" textLength="30" lengthAdjust="spacingAndGlyphs" >Cyan</text>
<rect x="867.5" y="526" width="72" height="70" fill="#c400c8" />
<rect x="867.5" y="596" width="72" height="71" fill="#be0abe" />
<rect x="868.5" y="527" width="70" height="139" fill="none" stroke="#fff" stroke-opacity=".62" stroke-width="2"/>
<text x="903.5" y="683" font-size="12.5" fill="#f4f4f4" text-anchor="middle" font-weight="bold" textLength="56" lengthAdjust="spacingAndGlyphs" >Magenta</text>
<rect x="950.5" y="526" width="72" height="70" fill="#c8c400" />
<rect x="950.5" y="596" width="72" height="71" fill="#c4c40c" />
<rect x="951.5" y="527" width="70" height="139" fill="none" stroke="#fff" stroke-opacity=".62" stroke-width="2"/>
<text x="986.5" y="683" font-size="12.5" fill="#f4f4f4" text-anchor="middle" font-weight="bold" textLength="41" lengthAdjust="spacingAndGlyphs" >Yellow</text>
<rect x="1033.5" y="526" width="72" height="70" fill="#fffaff" />
<rect x="1033.5" y="596" width="72" height="71" fill="#fafafa" />
<rect x="1034.5" y="527" width="70" height="139" fill="none" stroke="#fff" stroke-opacity=".62" stroke-width="2"/>
<text x="1069.5" y="683" font-size="12.5" fill="#f4f4f4" text-anchor="middle" font-weight="bold" textLength="37" lengthAdjust="spacingAndGlyphs" >100W</text>
<text transform="translate(446.5,557) rotate(-90)" font-size="12" fill="#f4f4f4" text-anchor="middle" font-weight="bold" textLength="37" lengthAdjust="spacingAndGlyphs">Actual</text>
<text transform="translate(446.5,636.5) rotate(-90)" font-size="12" fill="#f4f4f4" text-anchor="middle" font-weight="bold" textLength="37" lengthAdjust="spacingAndGlyphs">Target</text>
</g>
<g id="cie">
<rect x="1124.5" y="117.5" width="791.5" height="583" fill="none" stroke="#2a2a2a" stroke-width="8"/>
<text x="1520" y="141" font-size="15.5" fill="#d8d8d8" text-anchor="middle" font-weight="normal" textLength="87" lengthAdjust="spacingAndGlyphs"  stroke="#d8d8d8" stroke-width=".45">CIE 1931 xy</text>
<rect x="1163" y="147.3" width="745.6" height="520.6" fill="#242424" />
<g clip-path="url(#cl_locus)"><g filter="url(#vb)"><rect x="1160" y="140" width="660" height="4.6" fill="url(#zd0)"/><rect x="1160" y="144" width="660" height="4.6" fill="url(#zd1)"/><rect x="1160" y="148" width="660" height="4.6" fill="url(#zd2)"/><rect x="1160" y="152" width="660" height="4.6" fill="url(#zd3)"/><rect x="1160" y="156" width="660" height="4.6" fill="url(#zd4)"/><rect x="1160" y="160" width="660" height="4.6" fill="url(#zd5)"/><rect x="1160" y="164" width="660" height="4.6" fill="url(#zd6)"/><rect x="1160" y="168" width="660" height="4.6" fill="url(#zd7)"/><rect x="1160" y="172" width="660" height="4.6" fill="url(#zd8)"/><rect x="1160" y="176" width="660" height="4.6" fill="url(#zd9)"/><rect x="1160" y="180" width="660" height="4.6" fill="url(#zd10)"/><rect x="1160" y="184" width="660" height="4.6" fill="url(#zd11)"/><rect x="1160" y="188" width="660" height="4.6" fill="url(#zd12)"/><rect x="1160" y="192" width="660" height="4.6" fill="url(#zd13)"/><rect x="1160" y="196" width="660" height="4.6" fill="url(#zd14)"/><rect x="1160" y="200" width="660" height="4.6" fill="url(#zd15)"/><rect x="1160" y="204" width="660" height="4.6" fill="url(#zd16)"/><rect x="1160" y="208" width="660" height="4.6" fill="url(#zd17)"/><rect x="1160" y="212" width="660" height="4.6" fill="url(#zd18)"/><rect x="1160" y="216" width="660" height="4.6" fill="url(#zd19)"/><rect x="1160" y="220" width="660" height="4.6" fill="url(#zd20)"/><rect x="1160" y="224" width="660" height="4.6" fill="url(#zd21)"/><rect x="1160" y="228" width="660" height="4.6" fill="url(#zd22)"/><rect x="1160" y="232" width="660" height="4.6" fill="url(#zd23)"/><rect x="1160" y="236" width="660" height="4.6" fill="url(#zd24)"/><rect x="1160" y="240" width="660" height="4.6" fill="url(#zd25)"/><rect x="1160" y="244" width="660" height="4.6" fill="url(#zd26)"/><rect x="1160" y="248" width="660" height="4.6" fill="url(#zd27)"/><rect x="1160" y="252" width="660" height="4.6" fill="url(#zd28)"/><rect x="1160" y="256" width="660" height="4.6" fill="url(#zd29)"/><rect x="1160" y="260" width="660" height="4.6" fill="url(#zd30)"/><rect x="1160" y="264" width="660" height="4.6" fill="url(#zd31)"/><rect x="1160" y="268" width="660" height="4.6" fill="url(#zd32)"/><rect x="1160" y="272" width="660" height="4.6" fill="url(#zd33)"/><rect x="1160" y="276" width="660" height="4.6" fill="url(#zd34)"/><rect x="1160" y="280" width="660" height="4.6" fill="url(#zd35)"/><rect x="1160" y="284" width="660" height="4.6" fill="url(#zd36)"/><rect x="1160" y="288" width="660" height="4.6" fill="url(#zd37)"/><rect x="1160" y="292" width="660" height="4.6" fill="url(#zd38)"/><rect x="1160" y="296" width="660" height="4.6" fill="url(#zd39)"/><rect x="1160" y="300" width="660" height="4.6" fill="url(#zd40)"/><rect x="1160" y="304" width="660" height="4.6" fill="url(#zd41)"/><rect x="1160" y="308" width="660" height="4.6" fill="url(#zd42)"/><rect x="1160" y="312" width="660" height="4.6" fill="url(#zd43)"/><rect x="1160" y="316" width="660" height="4.6" fill="url(#zd44)"/><rect x="1160" y="320" width="660" height="4.6" fill="url(#zd45)"/><rect x="1160" y="324" width="660" height="4.6" fill="url(#zd46)"/><rect x="1160" y="328" width="660" height="4.6" fill="url(#zd47)"/><rect x="1160" y="332" width="660" height="4.6" fill="url(#zd48)"/><rect x="1160" y="336" width="660" height="4.6" fill="url(#zd49)"/><rect x="1160" y="340" width="660" height="4.6" fill="url(#zd50)"/><rect x="1160" y="344" width="660" height="4.6" fill="url(#zd51)"/><rect x="1160" y="348" width="660" height="4.6" fill="url(#zd52)"/><rect x="1160" y="352" width="660" height="4.6" fill="url(#zd53)"/><rect x="1160" y="356" width="660" height="4.6" fill="url(#zd54)"/><rect x="1160" y="360" width="660" height="4.6" fill="url(#zd55)"/><rect x="1160" y="364" width="660" height="4.6" fill="url(#zd56)"/><rect x="1160" y="368" width="660" height="4.6" fill="url(#zd57)"/><rect x="1160" y="372" width="660" height="4.6" fill="url(#zd58)"/><rect x="1160" y="376" width="660" height="4.6" fill="url(#zd59)"/><rect x="1160" y="380" width="660" height="4.6" fill="url(#zd60)"/><rect x="1160" y="384" width="660" height="4.6" fill="url(#zd61)"/><rect x="1160" y="388" width="660" height="4.6" fill="url(#zd62)"/><rect x="1160" y="392" width="660" height="4.6" fill="url(#zd63)"/><rect x="1160" y="396" width="660" height="4.6" fill="url(#zd64)"/><rect x="1160" y="400" width="660" height="4.6" fill="url(#zd65)"/><rect x="1160" y="404" width="660" height="4.6" fill="url(#zd66)"/><rect x="1160" y="408" width="660" height="4.6" fill="url(#zd67)"/><rect x="1160" y="412" width="660" height="4.6" fill="url(#zd68)"/><rect x="1160" y="416" width="660" height="4.6" fill="url(#zd69)"/><rect x="1160" y="420" width="660" height="4.6" fill="url(#zd70)"/><rect x="1160" y="424" width="660" height="4.6" fill="url(#zd71)"/><rect x="1160" y="428" width="660" height="4.6" fill="url(#zd72)"/><rect x="1160" y="432" width="660" height="4.6" fill="url(#zd73)"/><rect x="1160" y="436" width="660" height="4.6" fill="url(#zd74)"/><rect x="1160" y="440" width="660" height="4.6" fill="url(#zd75)"/><rect x="1160" y="444" width="660" height="4.6" fill="url(#zd76)"/><rect x="1160" y="448" width="660" height="4.6" fill="url(#zd77)"/><rect x="1160" y="452" width="660" height="4.6" fill="url(#zd78)"/><rect x="1160" y="456" width="660" height="4.6" fill="url(#zd79)"/><rect x="1160" y="460" width="660" height="4.6" fill="url(#zd80)"/><rect x="1160" y="464" width="660" height="4.6" fill="url(#zd81)"/><rect x="1160" y="468" width="660" height="4.6" fill="url(#zd82)"/><rect x="1160" y="472" width="660" height="4.6" fill="url(#zd83)"/><rect x="1160" y="476" width="660" height="4.6" fill="url(#zd84)"/><rect x="1160" y="480" width="660" height="4.6" fill="url(#zd85)"/><rect x="1160" y="484" width="660" height="4.6" fill="url(#zd86)"/><rect x="1160" y="488" width="660" height="4.6" fill="url(#zd87)"/><rect x="1160" y="492" width="660" height="4.6" fill="url(#zd88)"/><rect x="1160" y="496" width="660" height="4.6" fill="url(#zd89)"/><rect x="1160" y="500" width="660" height="4.6" fill="url(#zd90)"/><rect x="1160" y="504" width="660" height="4.6" fill="url(#zd91)"/><rect x="1160" y="508" width="660" height="4.6" fill="url(#zd92)"/><rect x="1160" y="512" width="660" height="4.6" fill="url(#zd93)"/><rect x="1160" y="516" width="660" height="4.6" fill="url(#zd94)"/><rect x="1160" y="520" width="660" height="4.6" fill="url(#zd95)"/><rect x="1160" y="524" width="660" height="4.6" fill="url(#zd96)"/><rect x="1160" y="528" width="660" height="4.6" fill="url(#zd97)"/><rect x="1160" y="532" width="660" height="4.6" fill="url(#zd98)"/><rect x="1160" y="536" width="660" height="4.6" fill="url(#zd99)"/><rect x="1160" y="540" width="660" height="4.6" fill="url(#zd100)"/><rect x="1160" y="544" width="660" height="4.6" fill="url(#zd101)"/><rect x="1160" y="548" width="660" height="4.6" fill="url(#zd102)"/><rect x="1160" y="552" width="660" height="4.6" fill="url(#zd103)"/><rect x="1160" y="556" width="660" height="4.6" fill="url(#zd104)"/><rect x="1160" y="560" width="660" height="4.6" fill="url(#zd105)"/><rect x="1160" y="564" width="660" height="4.6" fill="url(#zd106)"/><rect x="1160" y="568" width="660" height="4.6" fill="url(#zd107)"/><rect x="1160" y="572" width="660" height="4.6" fill="url(#zd108)"/><rect x="1160" y="576" width="660" height="4.6" fill="url(#zd109)"/><rect x="1160" y="580" width="660" height="4.6" fill="url(#zd110)"/><rect x="1160" y="584" width="660" height="4.6" fill="url(#zd111)"/><rect x="1160" y="588" width="660" height="4.6" fill="url(#zd112)"/><rect x="1160" y="592" width="660" height="4.6" fill="url(#zd113)"/><rect x="1160" y="596" width="660" height="4.6" fill="url(#zd114)"/><rect x="1160" y="600" width="660" height="4.6" fill="url(#zd115)"/><rect x="1160" y="604" width="660" height="4.6" fill="url(#zd116)"/><rect x="1160" y="608" width="660" height="4.6" fill="url(#zd117)"/><rect x="1160" y="612" width="660" height="4.6" fill="url(#zd118)"/><rect x="1160" y="616" width="660" height="4.6" fill="url(#zd119)"/><rect x="1160" y="620" width="660" height="4.6" fill="url(#zd120)"/><rect x="1160" y="624" width="660" height="4.6" fill="url(#zd121)"/><rect x="1160" y="628" width="660" height="4.6" fill="url(#zd122)"/><rect x="1160" y="632" width="660" height="4.6" fill="url(#zd123)"/><rect x="1160" y="636" width="660" height="4.6" fill="url(#zd124)"/><rect x="1160" y="640" width="660" height="4.6" fill="url(#zd125)"/><rect x="1160" y="644" width="660" height="4.6" fill="url(#zd126)"/><rect x="1160" y="648" width="660" height="4.6" fill="url(#zd127)"/><rect x="1160" y="652" width="660" height="4.6" fill="url(#zd128)"/><rect x="1160" y="656" width="660" height="4.6" fill="url(#zd129)"/><rect x="1160" y="660" width="660" height="4.6" fill="url(#zd130)"/><rect x="1160" y="664" width="660" height="4.6" fill="url(#zd131)"/><rect x="1160" y="668" width="660" height="4.6" fill="url(#zd132)"/><rect x="1160" y="672" width="660" height="4.6" fill="url(#zd133)"/></g></g>
<g clip-path="url(#cl_tri)"><g filter="url(#vb)"><rect x="1290.83" y="286.7" width="442.875" height="3.6" fill="url(#zb0)"/><rect x="1290.83" y="289.7" width="442.875" height="3.6" fill="url(#zb1)"/><rect x="1290.83" y="292.7" width="442.875" height="3.6" fill="url(#zb2)"/><rect x="1290.83" y="295.7" width="442.875" height="3.6" fill="url(#zb3)"/><rect x="1290.83" y="298.7" width="442.875" height="3.6" fill="url(#zb4)"/><rect x="1290.83" y="301.7" width="442.875" height="3.6" fill="url(#zb5)"/><rect x="1290.83" y="304.7" width="442.875" height="3.6" fill="url(#zb6)"/><rect x="1290.83" y="307.7" width="442.875" height="3.6" fill="url(#zb7)"/><rect x="1290.83" y="310.7" width="442.875" height="3.6" fill="url(#zb8)"/><rect x="1290.83" y="313.7" width="442.875" height="3.6" fill="url(#zb9)"/><rect x="1290.83" y="316.7" width="442.875" height="3.6" fill="url(#zb10)"/><rect x="1290.83" y="319.7" width="442.875" height="3.6" fill="url(#zb11)"/><rect x="1290.83" y="322.7" width="442.875" height="3.6" fill="url(#zb12)"/><rect x="1290.83" y="325.7" width="442.875" height="3.6" fill="url(#zb13)"/><rect x="1290.83" y="328.7" width="442.875" height="3.6" fill="url(#zb14)"/><rect x="1290.83" y="331.7" width="442.875" height="3.6" fill="url(#zb15)"/><rect x="1290.83" y="334.7" width="442.875" height="3.6" fill="url(#zb16)"/><rect x="1290.83" y="337.7" width="442.875" height="3.6" fill="url(#zb17)"/><rect x="1290.83" y="340.7" width="442.875" height="3.6" fill="url(#zb18)"/><rect x="1290.83" y="343.7" width="442.875" height="3.6" fill="url(#zb19)"/><rect x="1290.83" y="346.7" width="442.875" height="3.6" fill="url(#zb20)"/><rect x="1290.83" y="349.7" width="442.875" height="3.6" fill="url(#zb21)"/><rect x="1290.83" y="352.7" width="442.875" height="3.6" fill="url(#zb22)"/><rect x="1290.83" y="355.7" width="442.875" height="3.6" fill="url(#zb23)"/><rect x="1290.83" y="358.7" width="442.875" height="3.6" fill="url(#zb24)"/><rect x="1290.83" y="361.7" width="442.875" height="3.6" fill="url(#zb25)"/><rect x="1290.83" y="364.7" width="442.875" height="3.6" fill="url(#zb26)"/><rect x="1290.83" y="367.7" width="442.875" height="3.6" fill="url(#zb27)"/><rect x="1290.83" y="370.7" width="442.875" height="3.6" fill="url(#zb28)"/><rect x="1290.83" y="373.7" width="442.875" height="3.6" fill="url(#zb29)"/><rect x="1290.83" y="376.7" width="442.875" height="3.6" fill="url(#zb30)"/><rect x="1290.83" y="379.7" width="442.875" height="3.6" fill="url(#zb31)"/><rect x="1290.83" y="382.7" width="442.875" height="3.6" fill="url(#zb32)"/><rect x="1290.83" y="385.7" width="442.875" height="3.6" fill="url(#zb33)"/><rect x="1290.83" y="388.7" width="442.875" height="3.6" fill="url(#zb34)"/><rect x="1290.83" y="391.7" width="442.875" height="3.6" fill="url(#zb35)"/><rect x="1290.83" y="394.7" width="442.875" height="3.6" fill="url(#zb36)"/><rect x="1290.83" y="397.7" width="442.875" height="3.6" fill="url(#zb37)"/><rect x="1290.83" y="400.7" width="442.875" height="3.6" fill="url(#zb38)"/><rect x="1290.83" y="403.7" width="442.875" height="3.6" fill="url(#zb39)"/><rect x="1290.83" y="406.7" width="442.875" height="3.6" fill="url(#zb40)"/><rect x="1290.83" y="409.7" width="442.875" height="3.6" fill="url(#zb41)"/><rect x="1290.83" y="412.7" width="442.875" height="3.6" fill="url(#zb42)"/><rect x="1290.83" y="415.7" width="442.875" height="3.6" fill="url(#zb43)"/><rect x="1290.83" y="418.7" width="442.875" height="3.6" fill="url(#zb44)"/><rect x="1290.83" y="421.7" width="442.875" height="3.6" fill="url(#zb45)"/><rect x="1290.83" y="424.7" width="442.875" height="3.6" fill="url(#zb46)"/><rect x="1290.83" y="427.7" width="442.875" height="3.6" fill="url(#zb47)"/><rect x="1290.83" y="430.7" width="442.875" height="3.6" fill="url(#zb48)"/><rect x="1290.83" y="433.7" width="442.875" height="3.6" fill="url(#zb49)"/><rect x="1290.83" y="436.7" width="442.875" height="3.6" fill="url(#zb50)"/><rect x="1290.83" y="439.7" width="442.875" height="3.6" fill="url(#zb51)"/><rect x="1290.83" y="442.7" width="442.875" height="3.6" fill="url(#zb52)"/><rect x="1290.83" y="445.7" width="442.875" height="3.6" fill="url(#zb53)"/><rect x="1290.83" y="448.7" width="442.875" height="3.6" fill="url(#zb54)"/><rect x="1290.83" y="451.7" width="442.875" height="3.6" fill="url(#zb55)"/><rect x="1290.83" y="454.7" width="442.875" height="3.6" fill="url(#zb56)"/><rect x="1290.83" y="457.7" width="442.875" height="3.6" fill="url(#zb57)"/><rect x="1290.83" y="460.7" width="442.875" height="3.6" fill="url(#zb58)"/><rect x="1290.83" y="463.7" width="442.875" height="3.6" fill="url(#zb59)"/><rect x="1290.83" y="466.7" width="442.875" height="3.6" fill="url(#zb60)"/><rect x="1290.83" y="469.7" width="442.875" height="3.6" fill="url(#zb61)"/><rect x="1290.83" y="472.7" width="442.875" height="3.6" fill="url(#zb62)"/><rect x="1290.83" y="475.7" width="442.875" height="3.6" fill="url(#zb63)"/><rect x="1290.83" y="478.7" width="442.875" height="3.6" fill="url(#zb64)"/><rect x="1290.83" y="481.7" width="442.875" height="3.6" fill="url(#zb65)"/><rect x="1290.83" y="484.7" width="442.875" height="3.6" fill="url(#zb66)"/><rect x="1290.83" y="487.7" width="442.875" height="3.6" fill="url(#zb67)"/><rect x="1290.83" y="490.7" width="442.875" height="3.6" fill="url(#zb68)"/><rect x="1290.83" y="493.7" width="442.875" height="3.6" fill="url(#zb69)"/><rect x="1290.83" y="496.7" width="442.875" height="3.6" fill="url(#zb70)"/><rect x="1290.83" y="499.7" width="442.875" height="3.6" fill="url(#zb71)"/><rect x="1290.83" y="502.7" width="442.875" height="3.6" fill="url(#zb72)"/><rect x="1290.83" y="505.7" width="442.875" height="3.6" fill="url(#zb73)"/><rect x="1290.83" y="508.7" width="442.875" height="3.6" fill="url(#zb74)"/><rect x="1290.83" y="511.7" width="442.875" height="3.6" fill="url(#zb75)"/><rect x="1290.83" y="514.7" width="442.875" height="3.6" fill="url(#zb76)"/><rect x="1290.83" y="517.7" width="442.875" height="3.6" fill="url(#zb77)"/><rect x="1290.83" y="520.7" width="442.875" height="3.6" fill="url(#zb78)"/><rect x="1290.83" y="523.7" width="442.875" height="3.6" fill="url(#zb79)"/><rect x="1290.83" y="526.7" width="442.875" height="3.6" fill="url(#zb80)"/><rect x="1290.83" y="529.7" width="442.875" height="3.6" fill="url(#zb81)"/><rect x="1290.83" y="532.7" width="442.875" height="3.6" fill="url(#zb82)"/><rect x="1290.83" y="535.7" width="442.875" height="3.6" fill="url(#zb83)"/><rect x="1290.83" y="538.7" width="442.875" height="3.6" fill="url(#zb84)"/><rect x="1290.83" y="541.7" width="442.875" height="3.6" fill="url(#zb85)"/><rect x="1290.83" y="544.7" width="442.875" height="3.6" fill="url(#zb86)"/><rect x="1290.83" y="547.7" width="442.875" height="3.6" fill="url(#zb87)"/><rect x="1290.83" y="550.7" width="442.875" height="3.6" fill="url(#zb88)"/><rect x="1290.83" y="553.7" width="442.875" height="3.6" fill="url(#zb89)"/><rect x="1290.83" y="556.7" width="442.875" height="3.6" fill="url(#zb90)"/><rect x="1290.83" y="559.7" width="442.875" height="3.6" fill="url(#zb91)"/><rect x="1290.83" y="562.7" width="442.875" height="3.6" fill="url(#zb92)"/><rect x="1290.83" y="565.7" width="442.875" height="3.6" fill="url(#zb93)"/><rect x="1290.83" y="568.7" width="442.875" height="3.6" fill="url(#zb94)"/><rect x="1290.83" y="571.7" width="442.875" height="3.6" fill="url(#zb95)"/><rect x="1290.83" y="574.7" width="442.875" height="3.6" fill="url(#zb96)"/><rect x="1290.83" y="577.7" width="442.875" height="3.6" fill="url(#zb97)"/><rect x="1290.83" y="580.7" width="442.875" height="3.6" fill="url(#zb98)"/><rect x="1290.83" y="583.7" width="442.875" height="3.6" fill="url(#zb99)"/><rect x="1290.83" y="586.7" width="442.875" height="3.6" fill="url(#zb100)"/><rect x="1290.83" y="589.7" width="442.875" height="3.6" fill="url(#zb101)"/><rect x="1290.83" y="592.7" width="442.875" height="3.6" fill="url(#zb102)"/><rect x="1290.83" y="595.7" width="442.875" height="3.6" fill="url(#zb103)"/><rect x="1290.83" y="598.7" width="442.875" height="3.6" fill="url(#zb104)"/><rect x="1290.83" y="601.7" width="442.875" height="3.6" fill="url(#zb105)"/><rect x="1290.83" y="604.7" width="442.875" height="3.6" fill="url(#zb106)"/><rect x="1290.83" y="607.7" width="442.875" height="3.6" fill="url(#zb107)"/><rect x="1290.83" y="610.7" width="442.875" height="3.6" fill="url(#zb108)"/><rect x="1290.83" y="613.7" width="442.875" height="3.6" fill="url(#zb109)"/><rect x="1290.83" y="616.7" width="442.875" height="3.6" fill="url(#zb110)"/><rect x="1290.83" y="619.7" width="442.875" height="3.6" fill="url(#zb111)"/><rect x="1290.83" y="622.7" width="442.875" height="3.6" fill="url(#zb112)"/><rect x="1290.83" y="625.7" width="442.875" height="3.6" fill="url(#zb113)"/><rect x="1290.83" y="628.7" width="442.875" height="3.6" fill="url(#zb114)"/><rect x="1290.83" y="631.7" width="442.875" height="3.6" fill="url(#zb115)"/><rect x="1290.83" y="634.7" width="442.875" height="3.6" fill="url(#zb116)"/><rect x="1290.83" y="637.7" width="442.875" height="3.6" fill="url(#zb117)"/></g></g>
<rect x="1163" y="147.3" width="745.6" height="520.6" fill="none" stroke="#a8a8a8" stroke-width="1.8"/>
<line x1="1157" y1="668.3" x2="1163" y2="668.3" stroke="#a8a8a8" stroke-width="1.5" />
<line x1="1161.7" y1="667.9" x2="1161.7" y2="674.9" stroke="#a8a8a8" stroke-width="1.5" />
<text x="1156" y="675.1" font-size="16.5" fill="#d8d8d8" text-anchor="end" font-weight="normal" textLength="8.8935" lengthAdjust="spacingAndGlyphs"  stroke="#d8d8d8" stroke-width=".45">0</text>
<text x="1161.7" y="692" font-size="16.5" fill="#d8d8d8" text-anchor="middle" font-weight="normal" textLength="8.8935" lengthAdjust="spacingAndGlyphs"  stroke="#d8d8d8" stroke-width=".45">0</text>
<line x1="1157" y1="606.2" x2="1163" y2="606.2" stroke="#a8a8a8" stroke-width="1.5" />
<line x1="1250.45" y1="667.9" x2="1250.45" y2="674.9" stroke="#a8a8a8" stroke-width="1.5" />
<text x="1156" y="613" font-size="16.5" fill="#d8d8d8" text-anchor="end" font-weight="normal" textLength="22.4359" lengthAdjust="spacingAndGlyphs"  stroke="#d8d8d8" stroke-width=".45">0.1</text>
<text x="1250.45" y="692" font-size="16.5" fill="#d8d8d8" text-anchor="middle" font-weight="normal" textLength="22.4359" lengthAdjust="spacingAndGlyphs"  stroke="#d8d8d8" stroke-width=".45">0.1</text>
<line x1="1157" y1="544.1" x2="1163" y2="544.1" stroke="#a8a8a8" stroke-width="1.5" />
<line x1="1339.2" y1="667.9" x2="1339.2" y2="674.9" stroke="#a8a8a8" stroke-width="1.5" />
<text x="1156" y="550.9" font-size="16.5" fill="#d8d8d8" text-anchor="end" font-weight="normal" textLength="22.4359" lengthAdjust="spacingAndGlyphs"  stroke="#d8d8d8" stroke-width=".45">0.2</text>
<text x="1339.2" y="692" font-size="16.5" fill="#d8d8d8" text-anchor="middle" font-weight="normal" textLength="22.4359" lengthAdjust="spacingAndGlyphs"  stroke="#d8d8d8" stroke-width=".45">0.2</text>
<line x1="1157" y1="482" x2="1163" y2="482" stroke="#a8a8a8" stroke-width="1.5" />
<line x1="1427.95" y1="667.9" x2="1427.95" y2="674.9" stroke="#a8a8a8" stroke-width="1.5" />
<text x="1156" y="488.8" font-size="16.5" fill="#d8d8d8" text-anchor="end" font-weight="normal" textLength="22.4359" lengthAdjust="spacingAndGlyphs"  stroke="#d8d8d8" stroke-width=".45">0.3</text>
<text x="1427.95" y="692" font-size="16.5" fill="#d8d8d8" text-anchor="middle" font-weight="normal" textLength="22.4359" lengthAdjust="spacingAndGlyphs"  stroke="#d8d8d8" stroke-width=".45">0.3</text>
<line x1="1157" y1="419.9" x2="1163" y2="419.9" stroke="#a8a8a8" stroke-width="1.5" />
<line x1="1516.7" y1="667.9" x2="1516.7" y2="674.9" stroke="#a8a8a8" stroke-width="1.5" />
<text x="1156" y="426.7" font-size="16.5" fill="#d8d8d8" text-anchor="end" font-weight="normal" textLength="22.4359" lengthAdjust="spacingAndGlyphs"  stroke="#d8d8d8" stroke-width=".45">0.4</text>
<text x="1516.7" y="692" font-size="16.5" fill="#d8d8d8" text-anchor="middle" font-weight="normal" textLength="22.4359" lengthAdjust="spacingAndGlyphs"  stroke="#d8d8d8" stroke-width=".45">0.4</text>
<line x1="1157" y1="357.8" x2="1163" y2="357.8" stroke="#a8a8a8" stroke-width="1.5" />
<line x1="1605.45" y1="667.9" x2="1605.45" y2="674.9" stroke="#a8a8a8" stroke-width="1.5" />
<text x="1156" y="364.6" font-size="16.5" fill="#d8d8d8" text-anchor="end" font-weight="normal" textLength="22.4359" lengthAdjust="spacingAndGlyphs"  stroke="#d8d8d8" stroke-width=".45">0.5</text>
<text x="1605.45" y="692" font-size="16.5" fill="#d8d8d8" text-anchor="middle" font-weight="normal" textLength="22.4359" lengthAdjust="spacingAndGlyphs"  stroke="#d8d8d8" stroke-width=".45">0.5</text>
<line x1="1157" y1="295.7" x2="1163" y2="295.7" stroke="#a8a8a8" stroke-width="1.5" />
<line x1="1694.2" y1="667.9" x2="1694.2" y2="674.9" stroke="#a8a8a8" stroke-width="1.5" />
<text x="1156" y="302.5" font-size="16.5" fill="#d8d8d8" text-anchor="end" font-weight="normal" textLength="22.4359" lengthAdjust="spacingAndGlyphs"  stroke="#d8d8d8" stroke-width=".45">0.6</text>
<text x="1694.2" y="692" font-size="16.5" fill="#d8d8d8" text-anchor="middle" font-weight="normal" textLength="22.4359" lengthAdjust="spacingAndGlyphs"  stroke="#d8d8d8" stroke-width=".45">0.6</text>
<line x1="1157" y1="233.6" x2="1163" y2="233.6" stroke="#a8a8a8" stroke-width="1.5" />
<line x1="1782.95" y1="667.9" x2="1782.95" y2="674.9" stroke="#a8a8a8" stroke-width="1.5" />
<text x="1156" y="240.4" font-size="16.5" fill="#d8d8d8" text-anchor="end" font-weight="normal" textLength="22.4359" lengthAdjust="spacingAndGlyphs"  stroke="#d8d8d8" stroke-width=".45">0.7</text>
<text x="1782.95" y="692" font-size="16.5" fill="#d8d8d8" text-anchor="middle" font-weight="normal" textLength="22.4359" lengthAdjust="spacingAndGlyphs"  stroke="#d8d8d8" stroke-width=".45">0.7</text>
<line x1="1157" y1="171.5" x2="1163" y2="171.5" stroke="#a8a8a8" stroke-width="1.5" />
<line x1="1871.7" y1="667.9" x2="1871.7" y2="674.9" stroke="#a8a8a8" stroke-width="1.5" />
<text x="1156" y="178.3" font-size="16.5" fill="#d8d8d8" text-anchor="end" font-weight="normal" textLength="22.4359" lengthAdjust="spacingAndGlyphs"  stroke="#d8d8d8" stroke-width=".45">0.8</text>
<text x="1871.7" y="692" font-size="16.5" fill="#d8d8d8" text-anchor="middle" font-weight="normal" textLength="22.4359" lengthAdjust="spacingAndGlyphs"  stroke="#d8d8d8" stroke-width=".45">0.8</text>
<rect x="1644.7" y="149.8" width="259.3" height="203.6" fill="#242424" />
<g clip-path="url(#cl_in)"><g filter="url(#vb)"><rect x="1648.7" y="145.8" width="251.3" height="4.6" fill="url(#zi0)"/><rect x="1648.7" y="149.8" width="251.3" height="4.6" fill="url(#zi1)"/><rect x="1648.7" y="153.8" width="251.3" height="4.6" fill="url(#zi2)"/><rect x="1648.7" y="157.8" width="251.3" height="4.6" fill="url(#zi3)"/><rect x="1648.7" y="161.8" width="251.3" height="4.6" fill="url(#zi4)"/><rect x="1648.7" y="165.8" width="251.3" height="4.6" fill="url(#zi5)"/><rect x="1648.7" y="169.8" width="251.3" height="4.6" fill="url(#zi6)"/><rect x="1648.7" y="173.8" width="251.3" height="4.6" fill="url(#zi7)"/><rect x="1648.7" y="177.8" width="251.3" height="4.6" fill="url(#zi8)"/><rect x="1648.7" y="181.8" width="251.3" height="4.6" fill="url(#zi9)"/><rect x="1648.7" y="185.8" width="251.3" height="4.6" fill="url(#zi10)"/><rect x="1648.7" y="189.8" width="251.3" height="4.6" fill="url(#zi11)"/><rect x="1648.7" y="193.8" width="251.3" height="4.6" fill="url(#zi12)"/><rect x="1648.7" y="197.8" width="251.3" height="4.6" fill="url(#zi13)"/><rect x="1648.7" y="201.8" width="251.3" height="4.6" fill="url(#zi14)"/><rect x="1648.7" y="205.8" width="251.3" height="4.6" fill="url(#zi15)"/><rect x="1648.7" y="209.8" width="251.3" height="4.6" fill="url(#zi16)"/><rect x="1648.7" y="213.8" width="251.3" height="4.6" fill="url(#zi17)"/><rect x="1648.7" y="217.8" width="251.3" height="4.6" fill="url(#zi18)"/><rect x="1648.7" y="221.8" width="251.3" height="4.6" fill="url(#zi19)"/><rect x="1648.7" y="225.8" width="251.3" height="4.6" fill="url(#zi20)"/><rect x="1648.7" y="229.8" width="251.3" height="4.6" fill="url(#zi21)"/><rect x="1648.7" y="233.8" width="251.3" height="4.6" fill="url(#zi22)"/><rect x="1648.7" y="237.8" width="251.3" height="4.6" fill="url(#zi23)"/><rect x="1648.7" y="241.8" width="251.3" height="4.6" fill="url(#zi24)"/><rect x="1648.7" y="245.8" width="251.3" height="4.6" fill="url(#zi25)"/><rect x="1648.7" y="249.8" width="251.3" height="4.6" fill="url(#zi26)"/><rect x="1648.7" y="253.8" width="251.3" height="4.6" fill="url(#zi27)"/><rect x="1648.7" y="257.8" width="251.3" height="4.6" fill="url(#zi28)"/><rect x="1648.7" y="261.8" width="251.3" height="4.6" fill="url(#zi29)"/><rect x="1648.7" y="265.8" width="251.3" height="4.6" fill="url(#zi30)"/><rect x="1648.7" y="269.8" width="251.3" height="4.6" fill="url(#zi31)"/><rect x="1648.7" y="273.8" width="251.3" height="4.6" fill="url(#zi32)"/><rect x="1648.7" y="277.8" width="251.3" height="4.6" fill="url(#zi33)"/><rect x="1648.7" y="281.8" width="251.3" height="4.6" fill="url(#zi34)"/><rect x="1648.7" y="285.8" width="251.3" height="4.6" fill="url(#zi35)"/><rect x="1648.7" y="289.8" width="251.3" height="4.6" fill="url(#zi36)"/><rect x="1648.7" y="293.8" width="251.3" height="4.6" fill="url(#zi37)"/><rect x="1648.7" y="297.8" width="251.3" height="4.6" fill="url(#zi38)"/><rect x="1648.7" y="301.8" width="251.3" height="4.6" fill="url(#zi39)"/><rect x="1648.7" y="305.8" width="251.3" height="4.6" fill="url(#zi40)"/><rect x="1648.7" y="309.8" width="251.3" height="4.6" fill="url(#zi41)"/><rect x="1648.7" y="313.8" width="251.3" height="4.6" fill="url(#zi42)"/><rect x="1648.7" y="317.8" width="251.3" height="4.6" fill="url(#zi43)"/><rect x="1648.7" y="321.8" width="251.3" height="4.6" fill="url(#zi44)"/><rect x="1648.7" y="325.8" width="251.3" height="4.6" fill="url(#zi45)"/><rect x="1648.7" y="329.8" width="251.3" height="4.6" fill="url(#zi46)"/><rect x="1648.7" y="333.8" width="251.3" height="4.6" fill="url(#zi47)"/><rect x="1648.7" y="337.8" width="251.3" height="4.6" fill="url(#zi48)"/><rect x="1648.7" y="341.8" width="251.3" height="4.6" fill="url(#zi49)"/><rect x="1648.7" y="345.8" width="251.3" height="4.6" fill="url(#zi50)"/><rect x="1648.7" y="349.8" width="251.3" height="4.6" fill="url(#zi51)"/><rect x="1648.7" y="353.8" width="251.3" height="4.6" fill="url(#zi52)"/></g></g>
<rect x="1766.2" y="243.3" width="14.6" height="14.6" fill="#fff" stroke="#222" stroke-width="2.1"/>
<ellipse cx="1760.5" cy="276.5" rx="4.5" ry="4" fill="#bbb" stroke="#333" stroke-width="1.3"/><circle cx="1768" cy="273.5" r="4" fill="#fff" stroke="#333" stroke-width="1.3"/>
<rect x="1722.2" y="455.87" width="15" height="15" fill="none" stroke="#f0f0f0" stroke-opacity=".85" stroke-width="2"/>
<circle cx="1728.64" cy="462.563" r="3.7" fill="#c40010" stroke="#7a0000" stroke-width="1.6"/>
<rect x="1420.45" y="288.2" width="15" height="15" fill="none" stroke="#f0f0f0" stroke-opacity=".85" stroke-width="2"/>
<circle cx="1423.96" cy="296.756" r="3.7" fill="#00a000" stroke="#222" stroke-width="1.6"/>
<rect x="1287.33" y="623.54" width="15" height="15" fill="none" stroke="#f0f0f0" stroke-opacity=".85" stroke-width="2"/>
<circle cx="1294.65" cy="633.089" r="3.7" fill="#0000d0" stroke="#0000d0" stroke-width="1.6"/>
<rect x="1353.53" y="456.677" width="15" height="15" fill="none" stroke="#f0f0f0" stroke-opacity=".85" stroke-width="2"/>
<circle cx="1357.93" cy="468.648" r="3.7" fill="#00a0a0" stroke="#222" stroke-width="1.6"/>
<rect x="1439" y="565.042" width="15" height="15" fill="none" stroke="#f0f0f0" stroke-opacity=".85" stroke-width="2"/>
<circle cx="1443.84" cy="574.281" r="3.7" fill="#a000a0" stroke="#503050" stroke-width="1.6"/>
<rect x="1526.33" y="347.009" width="15" height="15" fill="none" stroke="#f0f0f0" stroke-opacity=".85" stroke-width="2"/>
<circle cx="1532.76" cy="355.316" r="3.7" fill="#a0a000" stroke="#222" stroke-width="1.6"/>
<rect x="1432.22" y="456.491" width="14.5" height="14.5" fill="none" stroke="#111" stroke-width="2.4"/>
<circle cx="1437" cy="468.027" r="3.8" fill="#fff" stroke="#111" stroke-width="1.4"/>
<rect x="1611" y="633" width="292.5" height="31" fill="#363636" />
<text x="1614.5" y="657" font-size="22" fill="#f4f4f4" text-anchor="start" font-weight="normal" textLength="254.5" lengthAdjust="spacingAndGlyphs" >Gamut Coverage:  99.2%</text>
</g>
<g id="reading">
<text x="18" y="768" font-size="32" fill="#f2f2f2" text-anchor="start" font-weight="normal" textLength="251" lengthAdjust="spacingAndGlyphs" stroke="#f2f2f2" stroke-width=".5">Current Reading</text>
<text x="18" y="813" font-size="26.5" fill="#f2f2f2" text-anchor="start" font-weight="normal" textLength="118" lengthAdjust="spacingAndGlyphs" stroke="#f2f2f2" stroke-width=".5">x: 0.3116</text>
<text x="18" y="857" font-size="26.5" fill="#f2f2f2" text-anchor="start" font-weight="normal" textLength="102" lengthAdjust="spacingAndGlyphs" stroke="#f2f2f2" stroke-width=".5">y: 0.323</text>
<text x="18" y="900" font-size="26.5" fill="#f2f2f2" text-anchor="start" font-weight="normal" textLength="127" lengthAdjust="spacingAndGlyphs" stroke="#f2f2f2" stroke-width=".5">fL: 127.11</text>
<text x="18" y="943.5" font-size="26.5" fill="#f2f2f2" text-anchor="start" font-weight="normal" textLength="167" lengthAdjust="spacingAndGlyphs" stroke="#f2f2f2" stroke-width=".5">cd/m²: 435.5</text>
</g>
<g id="rgbbal">
<text x="537.5" y="741.5" font-size="15.5" fill="#d8d8d8" text-anchor="middle" font-weight="normal" textLength="96" lengthAdjust="spacingAndGlyphs"  stroke="#d8d8d8" stroke-width=".45">RGB Balance</text>
<rect x="398" y="746.5" width="301" height="190.1" fill="#242424" />
<line x1="392" y1="763.8" x2="699" y2="763.8" stroke="#9a9a9a" stroke-width="1.5" />
<text x="390" y="769.7" font-size="16.5" fill="#d8d8d8" text-anchor="end" font-weight="normal" textLength="8.8935" lengthAdjust="spacingAndGlyphs"  stroke="#d8d8d8" stroke-width=".45">5</text>
<line x1="392" y1="843.1" x2="699" y2="843.1" stroke="#9a9a9a" stroke-width="1.5" />
<text x="390" y="849" font-size="16.5" fill="#d8d8d8" text-anchor="end" font-weight="normal" textLength="8.8935" lengthAdjust="spacingAndGlyphs"  stroke="#d8d8d8" stroke-width=".45">0</text>
<line x1="392" y1="922.8" x2="699" y2="922.8" stroke="#9a9a9a" stroke-width="1.5" />
<text x="390" y="928.7" font-size="16.5" fill="#d8d8d8" text-anchor="end" font-weight="normal" textLength="15.4935" lengthAdjust="spacingAndGlyphs"  stroke="#d8d8d8" stroke-width=".45">-5</text>
<rect x="398" y="746.5" width="301" height="190.1" fill="none" stroke="#9a9a9a" stroke-width="1.5"/>
<line x1="398" y1="936.6" x2="398" y2="944" stroke="#9a9a9a" stroke-width="1.5" />
<line x1="699" y1="936.6" x2="699" y2="944" stroke="#9a9a9a" stroke-width="1.5" />
<text x="548" y="955.3" font-size="16.5" fill="#d8d8d8" text-anchor="middle" font-weight="normal" textLength="46" lengthAdjust="spacingAndGlyphs"  stroke="#d8d8d8" stroke-width=".45">100W</text>
<rect x="428.2" y="796.4" width="78.5" height="46.7" fill="url(#rb_r)" stroke="#111" stroke-width="1.6"/>
<rect x="506.7" y="843.1" width="80" height="21.3" fill="url(#rb_g)" stroke="#111" stroke-width="1.6"/>
<rect x="586.7" y="760.7" width="79.8" height="82.4" fill="url(#rb_b)" stroke="#111" stroke-width="1.6"/>
</g>
<g id="table">
<rect x="723.7" y="722.8" width="797" height="40" fill="url(#th)" />
<rect x="723.7" y="722.8" width="16" height="40" fill="#000" />
<text x="828.5" y="752" font-size="21" fill="#f4f4f4" text-anchor="start" font-weight="bold" textLength="49" lengthAdjust="spacingAndGlyphs" >White</text>
<text x="918.8" y="752" font-size="21" fill="#f4f4f4" text-anchor="start" font-weight="bold" textLength="30" lengthAdjust="spacingAndGlyphs" >Red</text>
<text x="998.8" y="752" font-size="21" fill="#f4f4f4" text-anchor="start" font-weight="bold" textLength="50" lengthAdjust="spacingAndGlyphs" >Green</text>
<text x="1090.5" y="752" font-size="21" fill="#f4f4f4" text-anchor="start" font-weight="bold" textLength="36" lengthAdjust="spacingAndGlyphs" >Blue</text>
<text x="1170.4" y="752" font-size="21" fill="#f4f4f4" text-anchor="start" font-weight="bold" textLength="40" lengthAdjust="spacingAndGlyphs" >Cyan</text>
<text x="1262" y="752" font-size="21" fill="#f4f4f4" text-anchor="start" font-weight="bold" textLength="71" lengthAdjust="spacingAndGlyphs" >Magenta</text>
<text x="1343.4" y="752" font-size="21" fill="#f4f4f4" text-anchor="start" font-weight="bold" textLength="52" lengthAdjust="spacingAndGlyphs" >Yellow</text>
<text x="1435" y="752" font-size="21" fill="#f4f4f4" text-anchor="start" font-weight="bold" textLength="48" lengthAdjust="spacingAndGlyphs" >100W</text>
<rect x="723.7" y="762.8" width="797" height="38.6" fill="#424242" />
<rect x="723.7" y="762.8" width="16" height="38.6" fill="url(#rh)" />
<text x="745.5" y="792.2" font-size="22.5" fill="#ececec" text-anchor="start" font-weight="normal" textLength="66.5" lengthAdjust="spacingAndGlyphs" >x: CIE31</text>
<text x="828.5" y="792.2" font-size="22.5" fill="#ececec" text-anchor="start" font-weight="normal" textLength="57.45" lengthAdjust="spacingAndGlyphs" >0.3102</text>
<text x="918.8" y="792.2" font-size="22.5" fill="#ececec" text-anchor="start" font-weight="normal" textLength="57.45" lengthAdjust="spacingAndGlyphs" >0.6388</text>
<text x="998.8" y="792.2" font-size="22.5" fill="#ececec" text-anchor="start" font-weight="normal" textLength="57.45" lengthAdjust="spacingAndGlyphs" >0.2955</text>
<text x="1090.5" y="792.2" font-size="22.5" fill="#ececec" text-anchor="start" font-weight="normal" textLength="57.45" lengthAdjust="spacingAndGlyphs" >0.1498</text>
<text x="1170.4" y="792.2" font-size="22.5" fill="#ececec" text-anchor="start" font-weight="normal" textLength="57.45" lengthAdjust="spacingAndGlyphs" >0.2211</text>
<text x="1262" y="792.2" font-size="22.5" fill="#ececec" text-anchor="start" font-weight="normal" textLength="57.45" lengthAdjust="spacingAndGlyphs" >0.3179</text>
<text x="1343.4" y="792.2" font-size="22.5" fill="#ececec" text-anchor="start" font-weight="normal" textLength="57.45" lengthAdjust="spacingAndGlyphs" >0.4181</text>
<text x="1435" y="792.2" font-size="22.5" fill="#ececec" text-anchor="start" font-weight="normal" textLength="57.45" lengthAdjust="spacingAndGlyphs" >0.3116</text>
<rect x="723.7" y="801.2" width="797" height="38.6" fill="#7e7e7e" />
<rect x="723.7" y="801.2" width="16" height="38.6" fill="url(#rh)" />
<text x="745.5" y="830.6" font-size="22.5" fill="#ececec" text-anchor="start" font-weight="normal" textLength="66.5" lengthAdjust="spacingAndGlyphs" >y: CIE31</text>
<text x="828.5" y="830.6" font-size="22.5" fill="#ececec" text-anchor="start" font-weight="normal" textLength="57.45" lengthAdjust="spacingAndGlyphs" >0.3225</text>
<text x="918.8" y="830.6" font-size="22.5" fill="#ececec" text-anchor="start" font-weight="normal" textLength="57.45" lengthAdjust="spacingAndGlyphs" >0.3313</text>
<text x="998.8" y="830.6" font-size="22.5" fill="#ececec" text-anchor="start" font-weight="normal" textLength="57.45" lengthAdjust="spacingAndGlyphs" >0.5983</text>
<text x="1090.5" y="830.6" font-size="22.5" fill="#ececec" text-anchor="start" font-weight="normal" textLength="57.45" lengthAdjust="spacingAndGlyphs" >0.0567</text>
<text x="1170.4" y="830.6" font-size="22.5" fill="#ececec" text-anchor="start" font-weight="normal" textLength="57.45" lengthAdjust="spacingAndGlyphs" >0.3201</text>
<text x="1262" y="830.6" font-size="22.5" fill="#ececec" text-anchor="start" font-weight="normal" textLength="57.45" lengthAdjust="spacingAndGlyphs" >0.1514</text>
<text x="1343.4" y="830.6" font-size="22.5" fill="#ececec" text-anchor="start" font-weight="normal" textLength="57.45" lengthAdjust="spacingAndGlyphs" >0.5040</text>
<text x="1435" y="830.6" font-size="22.5" fill="#ececec" text-anchor="start" font-weight="normal" textLength="57.45" lengthAdjust="spacingAndGlyphs" >0.3230</text>
<rect x="723.7" y="839.6" width="797" height="38.6" fill="#424242" />
<rect x="723.7" y="839.6" width="16" height="38.6" fill="url(#rh)" />
<text x="745.5" y="869" font-size="22.5" fill="#ececec" text-anchor="start" font-weight="normal" textLength="10" lengthAdjust="spacingAndGlyphs" >Y</text>
<text x="828.5" y="869" font-size="22.5" fill="#ececec" text-anchor="start" font-weight="normal" textLength="78.35" lengthAdjust="spacingAndGlyphs" >229.5281</text>
<text x="918.8" y="869" font-size="22.5" fill="#ececec" text-anchor="start" font-weight="normal" textLength="67.9" lengthAdjust="spacingAndGlyphs" >50.7729</text>
<text x="998.8" y="869" font-size="22.5" fill="#ececec" text-anchor="start" font-weight="normal" textLength="78.35" lengthAdjust="spacingAndGlyphs" >166.2306</text>
<text x="1090.5" y="869" font-size="22.5" fill="#ececec" text-anchor="start" font-weight="normal" textLength="67.9" lengthAdjust="spacingAndGlyphs" >16.6434</text>
<text x="1170.4" y="869" font-size="22.5" fill="#ececec" text-anchor="start" font-weight="normal" textLength="78.35" lengthAdjust="spacingAndGlyphs" >181.6581</text>
<text x="1262" y="869" font-size="22.5" fill="#ececec" text-anchor="start" font-weight="normal" textLength="67.9" lengthAdjust="spacingAndGlyphs" >66.9061</text>
<text x="1343.4" y="869" font-size="22.5" fill="#ececec" text-anchor="start" font-weight="normal" textLength="78.35" lengthAdjust="spacingAndGlyphs" >215.0535</text>
<text x="1435" y="869" font-size="22.5" fill="#ececec" text-anchor="start" font-weight="normal" textLength="78.35" lengthAdjust="spacingAndGlyphs" >435.5041</text>
<rect x="723.7" y="878" width="797" height="38.6" fill="#7e7e7e" />
<rect x="723.7" y="878" width="16" height="38.6" fill="url(#rh)" />
<text x="745.5" y="907.4" font-size="22.5" fill="#ececec" text-anchor="start" font-weight="normal" textLength="69" lengthAdjust="spacingAndGlyphs" >Target Y</text>
<text x="828.5" y="907.4" font-size="22.5" fill="#ececec" text-anchor="start" font-weight="normal" textLength="78.35" lengthAdjust="spacingAndGlyphs" >229.5281</text>
<text x="918.8" y="907.4" font-size="22.5" fill="#ececec" text-anchor="start" font-weight="normal" textLength="67.9" lengthAdjust="spacingAndGlyphs" >48.8105</text>
<text x="998.8" y="907.4" font-size="22.5" fill="#ececec" text-anchor="start" font-weight="normal" textLength="78.35" lengthAdjust="spacingAndGlyphs" >164.1490</text>
<text x="1090.5" y="907.4" font-size="22.5" fill="#ececec" text-anchor="start" font-weight="normal" textLength="67.9" lengthAdjust="spacingAndGlyphs" >16.5686</text>
<text x="1170.4" y="907.4" font-size="22.5" fill="#ececec" text-anchor="start" font-weight="normal" textLength="78.35" lengthAdjust="spacingAndGlyphs" >180.7176</text>
<text x="1262" y="907.4" font-size="22.5" fill="#ececec" text-anchor="start" font-weight="normal" textLength="67.9" lengthAdjust="spacingAndGlyphs" >65.3791</text>
<text x="1343.4" y="907.4" font-size="22.5" fill="#ececec" text-anchor="start" font-weight="normal" textLength="78.35" lengthAdjust="spacingAndGlyphs" >212.9595</text>
<text x="1435" y="907.4" font-size="22.5" fill="#ececec" text-anchor="start" font-weight="normal" textLength="78.35" lengthAdjust="spacingAndGlyphs" >435.5041</text>
<rect x="723.7" y="916.4" width="797" height="38.6" fill="#424242" />
<rect x="723.7" y="916.4" width="16" height="38.6" fill="url(#rh)" />
<text x="745.5" y="945.8" font-size="22.5" fill="#ececec" text-anchor="start" font-weight="normal" textLength="72" lengthAdjust="spacingAndGlyphs" >ΔE 2000</text>
<text x="828.5" y="945.8" font-size="22.5" fill="#ececec" text-anchor="start" font-weight="normal" textLength="57.45" lengthAdjust="spacingAndGlyphs" >3.1949</text>
<text x="918.8" y="945.8" font-size="22.5" fill="#ececec" text-anchor="start" font-weight="normal" textLength="57.45" lengthAdjust="spacingAndGlyphs" >0.7082</text>
<text x="998.8" y="945.8" font-size="22.5" fill="#ececec" text-anchor="start" font-weight="normal" textLength="57.45" lengthAdjust="spacingAndGlyphs" >0.7412</text>
<text x="1090.5" y="945.8" font-size="22.5" fill="#ececec" text-anchor="start" font-weight="normal" textLength="57.45" lengthAdjust="spacingAndGlyphs" >1.1824</text>
<text x="1170.4" y="945.8" font-size="22.5" fill="#ececec" text-anchor="start" font-weight="normal" textLength="57.45" lengthAdjust="spacingAndGlyphs" >1.9458</text>
<text x="1262" y="945.8" font-size="22.5" fill="#ececec" text-anchor="start" font-weight="normal" textLength="57.45" lengthAdjust="spacingAndGlyphs" >0.7034</text>
<text x="1343.4" y="945.8" font-size="22.5" fill="#ececec" text-anchor="start" font-weight="normal" textLength="57.45" lengthAdjust="spacingAndGlyphs" >0.2947</text>
<text x="1435" y="945.8" font-size="22.5" fill="#ececec" text-anchor="start" font-weight="normal" textLength="57.45" lengthAdjust="spacingAndGlyphs" >4.0762</text>
</g>
<g id="bottom">
<rect x="0" y="963" width="1920" height="72" fill="url(#bb)" />
<path d="M1.9 1036 V970 Q1.9 966 5.9 966 H165.9 Q169.9 966 169.9 970 V1036 Z" fill="url(#cb)" stroke="#a4a4a4" stroke-width="1"/>
<rect x="7.7" y="972.2" width="158" height="40" rx="4" fill="#000" opacity=".28"/>
<rect x="8.4" y="973.4" width="156.6" height="37.8" rx="3.5" fill="#c0c0c0"/>
<text x="85.9" y="1029" font-size="11" fill="#262626" text-anchor="middle" font-weight="bold" >White</text>
<path d="M172.9 1036 V970 Q172.9 966 176.9 966 H336.9 Q340.9 966 340.9 970 V1036 Z" fill="url(#cb)" stroke="#a4a4a4" stroke-width="1"/>
<rect x="178.7" y="972.2" width="158" height="40" rx="4" fill="#000" opacity=".28"/>
<rect x="179.4" y="973.4" width="156.6" height="37.8" rx="3.5" fill="#c40000"/>
<text x="256.9" y="1029" font-size="11" fill="#262626" text-anchor="middle" font-weight="bold" >Red</text>
<path d="M343.9 1036 V970 Q343.9 966 347.9 966 H507.9 Q511.9 966 511.9 970 V1036 Z" fill="url(#cb)" stroke="#a4a4a4" stroke-width="1"/>
<rect x="349.7" y="972.2" width="158" height="40" rx="4" fill="#000" opacity=".28"/>
<rect x="350.4" y="973.4" width="156.6" height="37.8" rx="3.5" fill="#00c400"/>
<text x="427.9" y="1029" font-size="11" fill="#262626" text-anchor="middle" font-weight="bold" >Green</text>
<path d="M514.9 1036 V970 Q514.9 966 518.9 966 H678.9 Q682.9 966 682.9 970 V1036 Z" fill="url(#cb)" stroke="#a4a4a4" stroke-width="1"/>
<rect x="520.7" y="972.2" width="158" height="40" rx="4" fill="#000" opacity=".28"/>
<rect x="521.4" y="973.4" width="156.6" height="37.8" rx="3.5" fill="#0000c4"/>
<text x="598.9" y="1029" font-size="11" fill="#262626" text-anchor="middle" font-weight="bold" >Blue</text>
<path d="M685.9 1036 V970 Q685.9 966 689.9 966 H849.9 Q853.9 966 853.9 970 V1036 Z" fill="url(#cb)" stroke="#a4a4a4" stroke-width="1"/>
<rect x="691.7" y="972.2" width="158" height="40" rx="4" fill="#000" opacity=".28"/>
<rect x="692.4" y="973.4" width="156.6" height="37.8" rx="3.5" fill="#00c4c4"/>
<text x="769.9" y="1029" font-size="11" fill="#262626" text-anchor="middle" font-weight="bold" >Cyan</text>
<path d="M856.9 1036 V970 Q856.9 966 860.9 966 H1020.9 Q1024.9 966 1024.9 970 V1036 Z" fill="url(#cb)" stroke="#a4a4a4" stroke-width="1"/>
<rect x="862.7" y="972.2" width="158" height="40" rx="4" fill="#000" opacity=".28"/>
<rect x="863.4" y="973.4" width="156.6" height="37.8" rx="3.5" fill="#c400c4"/>
<text x="940.9" y="1029" font-size="11" fill="#262626" text-anchor="middle" font-weight="bold" >Magenta</text>
<path d="M1027.9 1036 V970 Q1027.9 966 1031.9 966 H1191.9 Q1195.9 966 1195.9 970 V1036 Z" fill="url(#cb)" stroke="#a4a4a4" stroke-width="1"/>
<rect x="1033.7" y="972.2" width="158" height="40" rx="4" fill="#000" opacity=".28"/>
<rect x="1034.4" y="973.4" width="156.6" height="37.8" rx="3.5" fill="#c4c400"/>
<text x="1111.9" y="1029" font-size="11" fill="#262626" text-anchor="middle" font-weight="bold" >Yellow</text>
<path d="M1198.9 1036 V970 Q1198.9 966 1202.9 966 H1362.9 Q1366.9 966 1366.9 970 V1036 Z" fill="url(#cbsel)" stroke="#2a2a2a" stroke-width="1"/>
<rect x="1204.7" y="972.2" width="158" height="40" rx="4" fill="#000" opacity=".28"/>
<rect x="1204.7" y="971.7" width="157.2" height="40.3" rx="3.5" fill="#ffffff"/>
<text x="1282.9" y="1029" font-size="11" fill="#fff" text-anchor="middle" font-weight="bold" >100W</text>
<path d="M1557 1036 V970 Q1557 966 1561 966 H1607 Q1611 966 1611 970 V1036 Z" fill="url(#cb)" stroke="#aaa" stroke-width="1"/>
<line x1="1557" y1="986" x2="1611" y2="986" stroke="#555" stroke-width="1.2" />
<ellipse cx="1583.5" cy="975" rx="9" ry="6.5" fill="url(#cbc)" opacity=".6"/><path d="M1578.5 977.5 h10 l-5 -5 z" fill="#222"/>
<rect x="1567" y="993.5" width="33.5" height="33" rx="4.5" fill="url(#sqb)" stroke="#1c1c1c" stroke-width="2.4"/><rect x="1576.2" y="1002.5" width="15.7" height="15" fill="#000"/>
<rect x="1612.8" y="966" width="51.5" height="32.3" fill="url(#cb2)" stroke="#444" stroke-width="1"/>
<circle cx="1638.55" cy="982.7" r="10.5" fill="url(#cbc)" opacity=".7"/>
<rect x="1664.3" y="966" width="49.9" height="32.3" fill="url(#cb2)" stroke="#444" stroke-width="1"/>
<circle cx="1689.25" cy="982.7" r="10.5" fill="url(#cbc)" opacity=".7"/>
<rect x="1714.2" y="966" width="50.4" height="32.3" fill="url(#cb2)" stroke="#444" stroke-width="1"/>
<circle cx="1739.4" cy="982.7" r="10.5" fill="url(#cbc)" opacity=".7"/>
<rect x="1764.6" y="966" width="50.9" height="32.3" fill="url(#cb2)" stroke="#444" stroke-width="1"/>
<circle cx="1790.05" cy="982.7" r="10.5" fill="url(#cbc)" opacity=".7"/>
<rect x="1815.5" y="966" width="50.5" height="32.3" fill="url(#cb2)" stroke="#444" stroke-width="1"/>
<circle cx="1840.75" cy="982.7" r="10.5" fill="url(#cbc)" opacity=".7"/>
<rect x="1866" y="966" width="54" height="33" fill="#2a2a2a" />
<circle cx="1894" cy="984.7" r="11" fill="#3a3a3a"/>
<rect x="1633.5" y="978.2" width="9" height="9" fill="#2a2a2a" />
<path d="M1685.5 976.5 v12 l9 -6 z" fill="#2a2a2a"/>
<path d="M1737 978 h-2.5 v10 h2.5 M1742.8 978 h2.5 v10 h-2.5 M1737.5 983 h5" stroke="#2a2a2a" stroke-width="1.6" fill="none"/>
<path d="M1790.3 983 c-2 -4 -7 -4 -7 0 s5 4 7 0 s7 -4 7 0 s-5 4 -7 0" stroke="#2a2a2a" stroke-width="1.8" fill="none"/>
<path d="M1835.5 981 a5.5 5.5 0 0 1 10 -1.5 M1846 985 a5.5 5.5 0 0 1 -10 1.5" stroke="#2a2a2a" stroke-width="2.4" fill="none"/><path d="M1843 976 l4.5 4.5 l-6 1z M1838.5 990 l-4.5 -4.5 l6 -1z" fill="#2a2a2a"/>
<rect x="1612.8" y="1000.2" width="152.4" height="36" fill="url(#cb2)" stroke="#444" stroke-width="1"/>
<rect x="1765.2" y="1000.2" width="153" height="36" fill="url(#cb2)" stroke="#444" stroke-width="1"/>
<circle cx="1647" cy="1018" r="10.5" fill="url(#cbc)" opacity=".7"/><circle cx="1887.7" cy="1018" r="10.5" fill="url(#cbc)" opacity=".7"/>
<text x="1647" y="1023" font-size="17" fill="#444" text-anchor="middle" font-weight="bold" >«</text>
<text x="1887.7" y="1023" font-size="17" fill="#444" text-anchor="middle" font-weight="bold" >»</text>
<text x="1677.5" y="1027.5" font-size="27" fill="#333" text-anchor="start" font-weight="normal" textLength="56" lengthAdjust="spacingAndGlyphs" stroke="#333" stroke-width=".5">Back</text>
<text x="1797.3" y="1027.5" font-size="27" fill="#333" text-anchor="start" font-weight="normal" textLength="57" lengthAdjust="spacingAndGlyphs" stroke="#333" stroke-width=".5">Next</text>
</g>
</svg>
</body></html>
